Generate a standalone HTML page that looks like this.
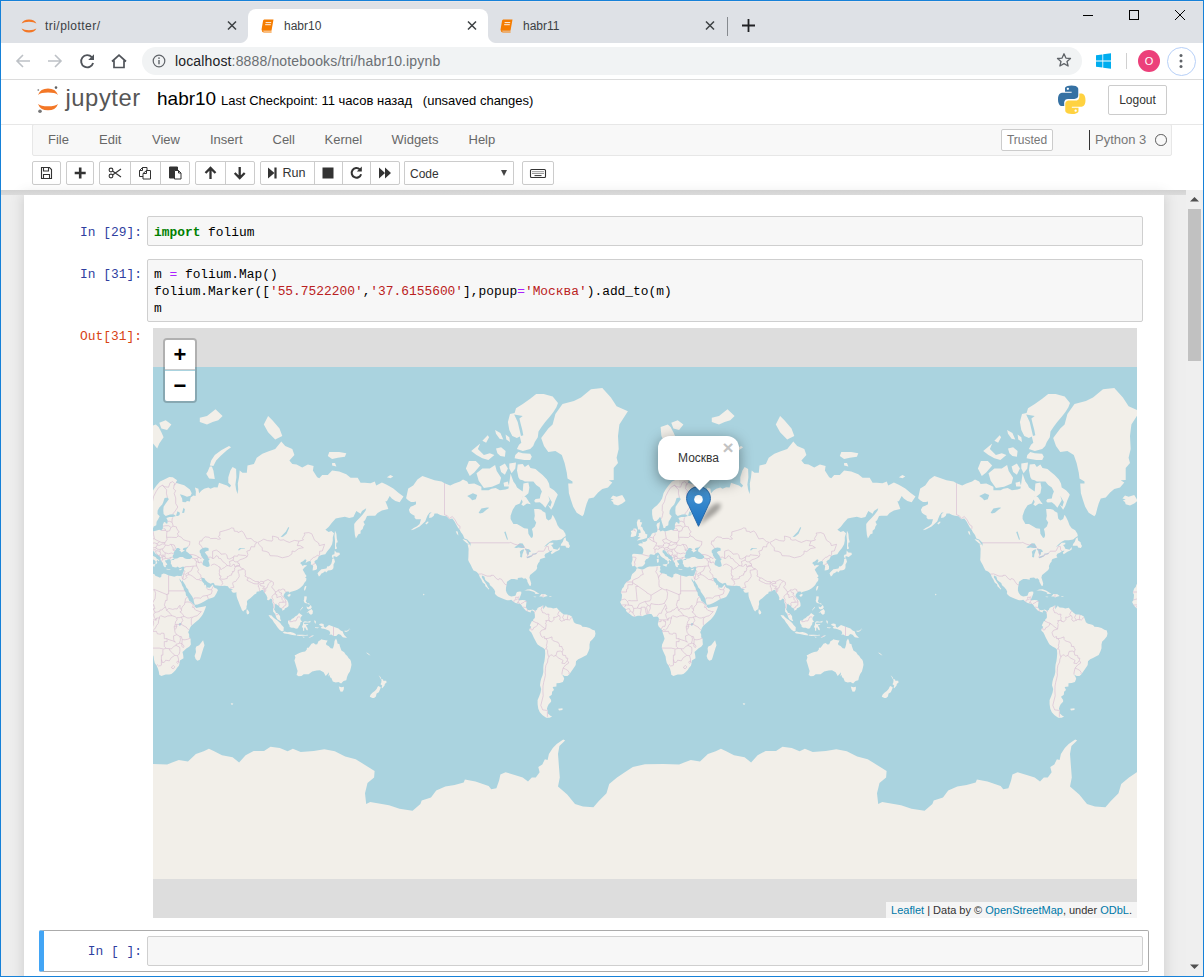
<!DOCTYPE html>
<html lang="ru"><head><meta charset="utf-8"><title>habr10</title>
<style>
*{box-sizing:border-box;margin:0;padding:0}
html,body{width:1204px;height:977px;overflow:hidden;background:#fff}
body{position:relative;font-family:"Liberation Sans",Arial,sans-serif;color:#000}
.abs{position:absolute}
/* window frame */
#win{position:absolute;left:0;top:0;width:1204px;height:977px;border:1px solid #1681d8;pointer-events:none;z-index:50}
/* chrome */
#tabbar{position:absolute;left:0;top:0;width:1204px;height:43px;background:#dee1e6}
.tab{position:absolute;top:9px;height:34px;font-size:12px;color:#3c4043;line-height:34px;white-space:nowrap}
.tab .ttl{position:absolute;left:36px;top:0}
.tab .x{position:absolute;right:10px;top:0;width:12px;height:33px}
#tab2{left:248px;width:240px;background:#fff;border-radius:8px 8px 0 0}
#tab2:before,#tab2:after{content:"";position:absolute;bottom:0;width:8px;height:8px;background:radial-gradient(circle at 0 0,rgba(255,255,255,0) 7.5px,#fff 8.5px)}
#tab2:before{left:-8px}
#tab2:after{right:-8px;background:radial-gradient(circle at 100% 0,rgba(255,255,255,0) 7.5px,#fff 8.5px)}
#tab1{left:9px;width:239px}
#tab1 .ttl{letter-spacing:.45px}
#topline{position:absolute;left:1px;top:1px;width:1202px;height:1px;background:#e9e7ea}
#tab3{left:487px;width:239px}
#toolbar{position:absolute;left:0;top:43px;width:1204px;height:37px;background:#fff;border-bottom:1px solid #dcdcdc}
#omni{position:absolute;left:142px;top:3.800px;width:940px;height:28px;border-radius:14px;background:#f1f3f4}
#url{position:absolute;left:33px;top:0;line-height:28px;font-size:14px;color:#202124;white-space:nowrap;letter-spacing:0.150px}
#url span{color:#6b6f73}
/* jupyter header */
#jhead{position:absolute;left:0;top:80px;width:1204px;height:110px;background:#fff}
#nbname{position:absolute;left:157px;top:7px;font-size:19px;line-height:24px;color:#000;white-space:nowrap}
#chk{position:absolute;left:221px;top:10px;font-size:13px;line-height:22px;color:#000;white-space:nowrap}
#logout{position:absolute;left:1108px;top:5px;width:59px;height:30px;border:1px solid #ccc;border-radius:2px;font-size:12px;line-height:28px;text-align:center;color:#333;background:#fff}
#menubar{position:absolute;left:32px;top:44px;width:1140px;height:32px;background:#f8f8f8;border:1px solid #e7e7e7;border-radius:2px}
#menubar .mi{position:absolute;top:0;line-height:30px;font-size:13px;color:#676767;white-space:nowrap}
#trusted{position:absolute;left:968px;top:4px;width:52px;height:22px;border:1px solid #ccc;border-radius:2px;font-size:12px;line-height:20px;text-align:center;color:#777;background:#fff}
#kname{position:absolute;left:1056px;top:5px;height:20px;border-left:1px solid #333;padding-left:5px;font-size:13px;line-height:20px;color:#777;white-space:nowrap}
#kind{position:absolute;left:1122px;top:9px;width:11.500px;height:11.500px;border:1.800px solid #5a5a5a;border-radius:50%}
.tb{position:absolute;top:81px;height:24px;border:1px solid #ccc;border-radius:2px;background:#fff}
.tb i{position:absolute;top:0;width:1px;height:22px;background:#ccc}
.tb svg{position:absolute;top:0}
#celltype{position:absolute;left:404px;top:81px;width:110px;height:24px;border:1px solid #ccc;border-radius:1px;background:#fff;font-size:12px;line-height:24px;color:#333;padding-left:5px}
#celltype:after{content:"";position:absolute;right:6px;top:8px;border:3.500px solid transparent;border-top:6px solid #444;}
#hshadow{position:absolute;left:0;top:190px;width:1186px;height:5px;background:linear-gradient(#d2d2d2,#dadada)}
/* notebook area */
#site{position:absolute;left:0;top:190px;width:1204px;height:787px;background:#eee}
#nbc{position:absolute;left:24px;top:5px;width:1140px;height:790px;background:#fff;box-shadow:0 0 12px 1px rgba(87,87,87,.2)}
.prompt{position:absolute;font-family:"Liberation Mono","DejaVu Sans Mono",monospace;font-size:12.9px;line-height:17px;white-space:pre;text-align:right;width:110px}
.pin{color:#303f9f}.pout{color:#d84315}
.inp{position:absolute;left:147px;width:996px;background:#f7f7f7;border:1px solid #cfcfcf;border-radius:2px}
.code{position:absolute;left:6px;top:6.500px;font-family:"Liberation Mono","DejaVu Sans Mono",monospace;font-size:12.880px;line-height:17px;white-space:pre;color:#000}
.kw{color:#008000;font-weight:bold}.op{color:#aa22ff}.st{color:#ba2121}
#scroll{position:absolute;left:1186px;top:190px;width:17px;height:787px;background:#efefef}
#thumb{position:absolute;left:2px;top:19px;width:13px;height:152px;background:#c1c1c1}
/* map */
#map{position:absolute;left:153px;top:328px;width:984px;height:590px;background:#ddd;overflow:hidden}
#zoomc{position:absolute;left:10px;top:10px;width:34px;height:65px;border:2px solid rgba(0,0,0,.2);border-radius:4px;background-clip:padding-box}
#zoomc div{position:absolute;left:0;width:30px;height:30px;background:#fff;text-align:center;font:bold 22px/30px "Liberation Sans",sans-serif;color:#000}
#attr{position:absolute;right:0;bottom:0;height:16px;padding:0 5px;background:rgba(255,255,255,.7);font-size:11px;line-height:16px;color:#333;white-space:nowrap}
#attr a{color:#0078a8;text-decoration:none}
#popup{position:absolute;left:505px;top:108px;width:81px;height:44px;border-radius:12px;background:#fff;box-shadow:0 3px 14px rgba(0,0,0,.4);font-size:12px;line-height:44px;text-align:center;color:#333}
#ptipc{position:absolute;left:526px;top:152px;width:40px;height:20px;overflow:hidden}
#ptip{width:17px;height:17px;margin:-10px auto 0;background:#fff;transform:rotate(45deg);box-shadow:0 3px 14px rgba(0,0,0,.4)}
#pclose{position:absolute;left:568px;top:113px;width:14px;text-align:center;font:bold 19px/14px "Liberation Sans",sans-serif;color:#c3c3c3}

#hline{position:absolute;left:0;top:44px;width:1204px;height:1px;background:#e7e7e7}

</style></head>
<body>
<div id="tabbar">
  <div id="topline"></div>
  <div class="tab" id="tab1"><svg class="abs" style="left:12px;top:9px" width="16" height="16" viewBox="0 0 16 16"><path d="M.6 5.400A7.800 5.800 0 0 1 15.400 5.400A8.500 3.400 0 0 0 .6 5.400Z M.6 10.600A7.800 5.800 0 0 0 15.400 10.600A8.500 3.400 0 0 1 .6 10.600Z" fill="#f37726"/></svg><span class="ttl">tri/plotter/</span><svg class="x" viewBox="0 0 12 33"><path d="M2 12.5l8 8M10 12.5l-8 8" stroke="#3c4043" stroke-width="1.5" fill="none"/></svg></div>
  <div class="tab" id="tab2"><svg class="abs" style="left:12px;top:9px" width="16" height="16" viewBox="0 0 16 16"><path d="M4.2 1.5h9.3l-2 11.2H2.6Q1.3 12.6 1.6 11.2L3 3Q3.3 1.5 4.2 1.5Z" fill="#f57c00"/><path d="M2.4 12.2q0 1.800 1.600 1.800h7.600" stroke="#f57c00" stroke-width="1.200" fill="none"/><path d="M5.600 4.600h5.600M5.200 6.700h5.600" stroke="#fff" stroke-width=".9" fill="none"/></svg><span class="ttl">habr10</span><svg class="x" viewBox="0 0 12 33"><path d="M2 12.5l8 8M10 12.5l-8 8" stroke="#3c4043" stroke-width="1.5" fill="none"/></svg></div>
  <div class="tab" id="tab3"><svg class="abs" style="left:12px;top:9px" width="16" height="16" viewBox="0 0 16 16"><path d="M4.2 1.5h9.3l-2 11.2H2.6Q1.3 12.6 1.6 11.2L3 3Q3.3 1.5 4.2 1.5Z" fill="#f57c00"/><path d="M2.4 12.2q0 1.800 1.600 1.800h7.600" stroke="#f57c00" stroke-width="1.200" fill="none"/><path d="M5.600 4.600h5.600M5.200 6.700h5.600" stroke="#fff" stroke-width=".9" fill="none"/></svg><span class="ttl">habr11</span><svg class="x" viewBox="0 0 12 33"><path d="M2 12.5l8 8M10 12.5l-8 8" stroke="#3c4043" stroke-width="1.5" fill="none"/></svg></div>
  <div class="abs" style="left:727px;top:17px;width:1px;height:19px;background:#868a8f"></div>
  <svg class="abs" style="left:741px;top:18px" width="15" height="15" viewBox="0 0 15 15"><path d="M7.5 1v13M1 7.5h13" stroke="#202124" stroke-width="1.8" fill="none"/></svg>
  <svg class="abs" style="left:1080px;top:8px" width="120" height="16" viewBox="0 0 120 16"><path d="M3 7.5h10" stroke="#000" stroke-width="1" fill="none"/><rect x="49.5" y="2.5" width="9" height="9" fill="none" stroke="#000" stroke-width="1"/><path d="M95 2l10 10M105 2l-10 10" stroke="#000" stroke-width="1" fill="none"/></svg>
</div>
<div id="toolbar">
  <svg class="abs" style="left:14px;top:9px" width="120" height="18" viewBox="0 0 120 18"><path d="M16 9H3M9 3L3 9l6 6" stroke="#bdc1c6" stroke-width="1.6" fill="none"/><path d="M34 9h13M41 3l6 6-6 6" stroke="#bdc1c6" stroke-width="1.6" fill="none"/><path d="M77.800 5.200A6.100 6.100 0 1 0 79.100 11" stroke="#50545a" stroke-width="1.900" fill="none"/><path d="M80 2.200v5.800h-5.800z" fill="#50545a"/><path d="M98 9.5l7-6.3 7 6.3M100 8.5v7h10v-7" stroke="#50545a" stroke-width="1.7" fill="none"/></svg>
  <div id="omni"><svg class="abs" style="left:10px;top:7px" width="14" height="14" viewBox="0 0 14 14"><circle cx="7" cy="7" r="5.8" fill="none" stroke="#5f6368" stroke-width="1.2"/><path d="M7 6v4.2" stroke="#5f6368" stroke-width="1.4"/><circle cx="7" cy="4.1" r=".85" fill="#5f6368"/></svg><div id="url">localhost<span>:8888/notebooks/tri/habr10.ipynb</span></div>
  <svg class="abs" style="left:914.400px;top:5.500px" width="16" height="16" viewBox="0 0 16 16"><path d="M8 1.8l1.9 4.3 4.6.4-3.5 3 1.1 4.5L8 11.6 3.9 14l1.1-4.5-3.5-3 4.6-.4z" fill="none" stroke="#5f6368" stroke-width="1.3" stroke-linejoin="round"/></svg></div>
  <svg class="abs" style="left:1096.400px;top:10px" width="16" height="16" viewBox="0 0 16 16"><path d="M0 2.3l6.4-.9v6.2H0zM7.2 1.3L15 .2v7.4H7.2zM0 8.4h6.4v6.2L0 13.7zM7.2 8.4H15v7.4l-7.8-1.1z" fill="#00adef"/></svg>
  <div class="abs" style="left:1126px;top:10px;width:1px;height:16px;background:#d0d0d0"></div>
  <div class="abs" style="left:1138px;top:7px;width:22px;height:22px;border-radius:50%;background:#ec407a;color:#fff;font-size:11px;line-height:22px;text-align:center">O</div>
  <div class="abs" style="left:1166.500px;top:3.500px;width:29.500px;height:29.500px;border-radius:50%;border:1.700px solid #b7d0f8"></div>
  <svg class="abs" style="left:1178.300px;top:10.300px" width="6" height="16" viewBox="0 0 6 16"><circle cx="3" cy="2.5" r="1.5" fill="#5f6368"/><circle cx="3" cy="8" r="1.5" fill="#5f6368"/><circle cx="3" cy="13.5" r="1.5" fill="#5f6368"/></svg>
</div>
<div id="jhead">
  <svg class="abs" style="left:34px;top:5px" width="112" height="32" viewBox="0 0 112 32"><path d="M4 9.900A10.500 9.300 0 0 1 24 9.900A11 4 0 0 0 4 9.900Z M4 18.900A10.500 9.300 0 0 0 24 18.900A11 4 0 0 1 4 18.900Z" fill="#f37726"/><circle cx="6" cy="26.300" r="1.800" fill="#767677"/><circle cx="4.300" cy="5" r=".9" fill="#989798"/><circle cx="22" cy="2.600" r="1.300" fill="#616262"/><text x="31.500" y="20.800" font-family="Liberation Sans, sans-serif" font-size="23.800" fill="#565656" letter-spacing=".55">jupyter</text></svg>
  <div id="nbname">habr10</div>
  <div id="chk">Last Checkpoint: 11 часов назад &nbsp;&nbsp;(unsaved changes)</div>
  <svg class="abs" style="left:1056px;top:4.300px" width="31.500" height="31.500" viewBox="0 0 30 30"><path d="M14.8 1.5c-6.6 0-6.2 2.9-6.2 2.9v3h6.3v.9H6.1S1.9 7.8 1.9 14.5s3.7 6.5 3.7 6.5h2.2v-3.1s-.1-3.7 3.6-3.7h6.300000000000001s3.5.1 3.5-3.4V5.100000000000001S21.7 1.5 14.8 1.5zm-3.5 2c.6 0 1.1.5 1.1 1.1s-.5 1.1-1.1 1.1-1.1-.5-1.1-1.1.5-1.1 1.1-1.1z" fill="#3571a3"/><path d="M15.2 28.5c6.6 0 6.2-2.9 6.2-2.9v-3h-6.3v-.9h8.8s4.2.5 4.2-6.200000000000001-3.7-6.5-3.7-6.5h-2.2v3.1s.1 3.7-3.6 3.7h-6.300000000000001s-3.5-.1-3.5 3.4v5.7s-.5 3.6 6.4 3.6zm3.5-2c-.6 0-1.1-.5-1.1-1.1s.5-1.1 1.1-1.1 1.1.5 1.1 1.1-.5 1.1-1.1 1.1z" fill="#ffd240"/></svg>
  <div id="logout">Logout</div>
  <div id="hline"></div>
  <div id="menubar">
    <span class="mi" style="left:15px">File</span><span class="mi" style="left:66px">Edit</span><span class="mi" style="left:119px">View</span><span class="mi" style="left:177px">Insert</span><span class="mi" style="left:239.500px">Cell</span><span class="mi" style="left:291.500px">Kernel</span><span class="mi" style="left:358.500px">Widgets</span><span class="mi" style="left:435.500px">Help</span>
    <div id="trusted">Trusted</div><div id="kname">Python 3</div><div id="kind"></div>
  </div>
  <div class="tb" style="left:32px;width:29px"></div>
  <div class="tb" style="left:66px;width:28px"></div>
  <div class="tb" style="left:99px;width:91px"><i style="left:30px"></i><i style="left:60px"></i></div>
  <div class="tb" style="left:195px;width:60px"><i style="left:29px"></i></div>
  <div class="tb" style="left:260px;width:140px"><i style="left:53px"></i><i style="left:81px"></i><i style="left:109px"></i><span class="abs" style="left:21.500px;top:0;font-size:12.600px;line-height:22px;color:#333">Run</span></div>
  <div id="celltype">Code</div>
  <div class="tb" style="left:522px;width:32px"></div>
  <svg class="abs" style="left:32px;top:81px" width="524" height="24" viewBox="0 0 524 24" fill="none" stroke="#333">
    <!-- save -->
    <path d="M9.5 6.5h8l2 2v9h-10z M11.5 6.5v3.5h5v-3.5 M11.5 17.500v-4h6v4" stroke-width="1.1"/>
    <!-- plus -->
    <path d="M48.200 6.500v11M42.700 12h11" stroke-width="2.600"/>
    <!-- scissors -->
    <circle cx="79" cy="9" r="1.900" stroke-width="1.100"/><circle cx="79" cy="15" r="1.900" stroke-width="1.100"/><path d="M80.500 10l8.500 6M80.500 14l8.500-6" stroke-width="1.100"/>
    <!-- copy -->
    <path d="M110.500 6.500h4.500v3.500 M110.500 6.500l-3 3v6h3.500 M107.500 9.500h3v-3" stroke-width="1"/><path d="M114.500 9.500h4v8.500h-7.500v-5.500l3.500-3zM111 12.500h3.500v-3" stroke-width="1"/>
    <!-- paste -->
    <path d="M137.500 6h8v3h-3.500v8h-4.500z" fill="#333" stroke-width="1"/><path d="M142.500 9.500h4l2.500 2.500v6h-6.500z" fill="#fff" stroke-width="1"/><path d="M146.500 9.500v2.500h2.500" stroke-width="1"/>
    <!-- up / down -->
    <path d="M178.500 18v-10.500M173.500 12l5-5 5 5" stroke-width="2.300"/>
    <path d="M207.700 6v10.500M202.700 12l5 5 5-5" stroke-width="2.300"/>
    <!-- step forward -->
    <path d="M236 6.500v11l6.500-5.500z" fill="#333" stroke="none"/><path d="M243.500 6.500v11" stroke-width="2.200"/>
    <!-- stop -->
    <rect x="290.500" y="6.500" width="11" height="11" fill="#333" stroke="none"/>
    <!-- repeat -->
    <path d="M327.800 8.400a4.800 4.800 0 1 0 1.300 4.800" stroke-width="2"/><path d="M329.800 5.500v5h-5z" fill="#333" stroke="none"/>
    <!-- forward -->
    <path d="M347 6.500v11l6-5.500zM353 6.500v11l6-5.500z" fill="#333" stroke="none"/>
    <!-- keyboard -->
    <rect x="498.500" y="8.500" width="15" height="8" rx="1" stroke-width="1.100"/><path d="M500.500 10.700h11M500.500 12.500h11" stroke-width="1" stroke-dasharray="1 1"/><path d="M502.500 14.600h7" stroke-width="1"/>
  </svg>
</div>
<div id="site">
  <div id="nbc"></div>
</div>
<div id="hshadow"></div>
<div class="prompt pin" style="left:32px;top:223.500px">In [29]:</div>
<div class="inp" style="top:216px;height:30px"><div class="code"><span class="kw">import</span> folium</div></div>
<div class="prompt pin" style="left:32px;top:265.500px">In [31]:</div>
<div class="inp" style="top:258.500px;height:63.500px"><div class="code">m <span class="op">=</span> folium.Map()
folium.Marker([<span class="st">'55.7522200'</span>,<span class="st">'37.6155600'</span>],popup<span class="op">=</span><span class="st">'Москва'</span>).add_to(m)
m</div></div>
<div class="prompt pout" style="left:32px;top:328px">Out[31]:</div>
<div id="map">
<svg class="abs" style="left:0;top:39px" width="984" height="512" viewBox="0 0 984 512">
<rect width="984" height="512" fill="#aad3df"/>
<g transform="translate(-276 0)"><path fill="#f2efe9" d="M17.1 131.2L19.2 121.4L24.2 118.6L28.4 112.5L33.4 109.0L39.8 111.2L45.5 113.3L52.6 114.6L55.5 116.2L61.2 118.6L65.4 116.6L71.1 114.6L74.0 112.5L78.2 114.6L79.6 117.0L85.3 116.6L92.4 119.8L92.4 123.3L99.6 123.3L102.4 121.8L106.7 121.0L110.9 123.3L116.6 122.5L119.5 121.4L120.2 116.6L121.6 106.8L124.4 114.6L126.6 117.4L128.0 120.6L130.8 122.5L133.7 124.4L134.4 116.6L139.4 115.4L140.4 120.6L139.4 126.2L136.5 128.8L133.7 129.8L132.3 133.2L130.8 136.5L126.6 138.2L123.7 142.8L121.6 148.7L121.6 152.0L124.4 156.9L128.0 156.9L132.3 159.4L135.1 161.2L139.0 161.7L139.4 166.8L140.8 169.1L142.2 171.0L143.6 170.3L144.1 168.0L143.6 164.4L142.9 161.9L145.8 159.4L147.2 155.5L145.1 152.3L145.8 148.7L145.1 141.9L149.3 141.9L152.2 142.8L153.6 144.3L156.4 145.8L157.2 151.5L159.3 153.4L162.1 152.0L163.6 147.8L165.0 150.1L167.1 154.2L168.5 158.2L170.7 161.2L174.2 163.2L176.4 166.8L176.8 169.1L174.9 170.3L172.1 172.5L167.8 173.2L163.6 173.2L160.7 174.7L157.9 176.9L155.0 180.1L157.9 178.4L160.7 175.8L164.3 175.8L164.3 177.3L162.1 178.0L163.6 180.1L164.3 181.7L166.4 182.2L168.5 182.8L170.7 180.1L170.7 182.4L169.2 183.6L166.4 184.8L164.3 186.2L162.6 187.2L161.8 185.6L163.6 183.8L162.1 183.8L160.7 184.2L159.3 185.4L156.4 186.8L155.4 188.7L156.4 190.4L154.6 191.0L151.5 192.0L150.8 192.9L150.5 194.8L149.3 196.0L148.6 197.5L147.9 199.3L148.2 201.1L147.2 203.1L145.1 204.7L143.6 205.9L141.1 207.9L140.4 210.4L141.5 214.0L142.2 216.4L141.8 218.8L140.8 218.9L139.7 217.2L138.4 214.8L138.2 212.9L136.5 211.2L134.7 211.7L133.0 210.6L130.8 210.7L128.7 210.9L129.0 212.5L127.3 212.5L125.2 211.9L122.3 211.9L120.5 213.0L118.0 214.8L117.6 217.7L117.0 220.8L116.9 223.5L117.8 225.9L119.5 228.2L120.9 229.1L122.3 229.5L125.2 229.1L126.6 228.5L127.3 226.2L128.0 225.1L130.8 224.5L132.3 224.8L132.3 226.5L131.3 229.2L130.6 230.7L129.7 232.9L130.8 233.2L133.7 233.1L136.1 233.2L137.5 234.4L137.2 237.4L137.0 239.5L137.2 241.0L138.7 242.7L140.1 243.3L142.2 242.9L143.6 242.4L145.8 243.6L146.5 244.6L145.8 245.6L144.6 244.3L142.9 243.3L141.8 244.2L141.8 245.4L140.1 244.9L138.2 244.3L137.2 243.9L135.1 241.7L134.0 240.5L132.3 238.1L131.3 237.1L128.7 236.6L126.6 235.9L124.4 234.7L122.3 232.8L120.2 233.2L118.0 233.2L115.2 232.2L111.6 230.7L108.8 229.5L106.7 227.7L105.8 226.2L106.2 224.7L105.2 222.4L103.1 220.0L101.0 218.2L100.3 216.1L98.1 214.5L96.3 212.9L95.3 209.6L92.9 208.4L92.9 210.4L94.6 212.9L96.0 215.3L97.7 217.7L98.8 220.0L100.3 221.9L99.6 222.5L98.1 220.8L96.4 219.3L96.0 217.2L93.9 215.8L93.2 214.5L92.4 212.5L91.0 210.4L89.6 207.1L87.8 204.9L86.0 204.0L84.5 203.5L82.8 200.2L81.8 198.0L79.9 194.8L79.2 193.1L79.4 190.1L79.5 186.2L79.6 181.7L78.6 177.3L81.1 177.6L81.8 179.5L81.5 175.8L80.4 174.7L78.2 172.5L75.4 171.4L74.0 168.0L71.8 165.1L70.7 162.7L69.0 160.7L67.6 158.2L65.4 154.2L63.3 151.5L60.4 152.3L57.6 149.3L54.0 148.7L51.2 148.1L48.4 146.4L45.5 146.4L44.8 148.7L42.7 150.4L40.1 150.9L40.5 147.3L42.7 145.2L40.5 145.8L38.4 148.7L37.3 151.5L36.3 154.2L33.4 156.9L30.6 159.4L27.7 160.9L24.9 162.4L21.8 163.2L24.2 161.2L27.0 159.7L27.7 159.4L30.6 156.9L32.0 152.3L29.9 152.3L27.0 152.3L25.6 150.7L25.6 148.7L22.8 147.3L20.9 145.8L19.9 142.8L21.6 139.7L24.2 138.8L27.0 137.2L27.0 134.6L24.9 134.9L22.0 134.9L19.2 133.2ZM168.8 127.7L166.4 133.2L164.3 139.1L162.1 142.8L158.6 137.5L161.4 139.7L162.8 134.9L159.3 128.8L160.7 133.2L156.4 140.7L153.6 137.5L150.8 135.2L146.5 135.6L145.1 133.9L146.5 131.9L150.8 131.5L151.5 128.0L152.9 124.4L150.8 120.6L147.2 117.9L144.4 114.6L140.8 114.6L135.8 114.6L133.7 113.3L130.8 112.5L129.4 110.3L128.0 103.5L128.7 97.6L133.7 97.1L135.8 100.1L139.4 97.6L141.5 101.1L146.5 102.1L149.3 104.4L153.6 108.1L157.9 112.5L160.0 116.6L160.7 120.6L165.0 123.3L167.8 126.2ZM169.0 36.1L163.7 29.5L154.7 27.1L147.2 27.1L141.2 31.7L133.8 37.1L127.0 41.2L125.6 46.1L121.0 47.0L118.9 55.0L120.3 63.0L123.3 68.9L127.9 71.0L130.8 69.6L132.3 75.8L130.0 77.7L127.9 82.1L133.8 83.9L141.2 82.1L144.2 79.0L145.8 75.1L148.8 70.3L149.5 64.5L152.5 59.9L156.2 55.0L160.7 49.8L164.4 45.1L167.4 40.2ZM116.6 67.5L120.3 70.3L121.0 75.1L117.3 72.4ZM126.3 88.0L129.3 85.1L133.8 86.3L141.2 86.8L142.8 89.7L141.2 92.9L135.3 92.9L129.3 91.9L125.6 91.3ZM87.5 106.3L93.4 101.6L100.8 101.6L106.1 98.1L107.7 104.0L112.1 110.8L110.6 116.6L103.1 119.8L94.9 121.0L89.7 113.7ZM76.9 101.6L79.9 94.0L86.8 94.0L91.2 98.6L85.2 105.4L80.8 109.0ZM82.2 83.9L91.2 76.4L88.9 82.1L94.9 88.0L100.8 86.3L105.4 88.0L99.4 92.9L93.4 91.3L87.5 88.0ZM107.0 81.5L112.1 80.3L116.6 83.9L115.9 89.7L111.4 89.1L108.4 86.3ZM110.6 99.6L115.9 96.6L118.9 101.6L115.9 107.7L112.1 104.9ZM120.3 96.6L127.0 95.6L126.3 101.6L122.6 106.3L120.3 101.6ZM120.2 119.4L115.2 119.4L114.5 115.8L118.8 114.6ZM132.3 131.5L135.1 129.1L137.2 130.5L140.1 134.9L141.9 137.2L138.0 136.5L134.4 139.1L132.3 137.5L133.7 134.9ZM93.4 73.8L98.7 68.2L100.1 70.3L97.1 75.8ZM106.1 63.0L111.4 66.0L114.3 72.4L110.6 71.7L107.0 66.8ZM171.7 178.8L176.4 178.8L177.1 180.5L179.9 180.9L181.0 179.0L179.9 176.9L179.6 175.2L177.1 173.6L176.6 170.3L174.9 171.4L173.8 174.7L172.1 176.9ZM193.4 149.3L187.7 145.8L184.2 139.7L182.0 133.2L179.9 126.2L179.2 116.6L183.5 116.6L183.5 114.6L178.5 111.6L177.8 105.8L175.6 96.1L172.8 88.0L166.4 83.9L159.3 85.1L155.0 79.0L152.2 71.0L159.3 61.5L163.6 57.5L166.4 47.0L173.5 37.1L184.9 33.9L192.0 30.6L202.0 22.3L213.3 21.0L221.9 30.6L227.6 39.2L238.9 44.2L230.4 57.5L229.0 68.9L229.7 82.1L227.6 90.8L229.0 96.1L224.7 101.1L224.7 108.1L224.7 112.9L219.7 113.3L223.3 115.4L219.0 120.6L213.3 122.1L209.1 125.5L204.8 130.5L199.8 131.5L197.7 136.5L196.3 141.3L194.8 147.3ZM221.4 131.5L224.0 128.4L227.6 129.8L233.2 128.0L235.4 131.5L236.5 133.9L233.2 136.5L229.0 138.5L224.7 137.2L224.0 134.9L221.9 133.6L224.7 132.2ZM135.3 224.1L138.0 222.4L141.5 222.2L145.1 223.5L148.6 225.7L150.5 226.7L145.8 227.1L146.5 226.0L144.4 224.7L140.1 223.6L137.2 223.6ZM150.2 229.4L152.5 227.1L156.4 227.3L158.7 229.1L155.7 229.7L154.0 230.4L152.9 229.5ZM144.6 229.4L147.5 229.7L146.5 230.3L144.8 230.0ZM160.4 229.2L162.6 229.4L162.4 230.0L160.4 230.0ZM146.1 243.9L147.9 242.7L148.6 241.0L150.0 240.3L152.2 239.5L154.3 238.2L154.3 240.3L153.9 242.4L155.0 241.0L156.4 239.5L156.4 238.5L158.6 240.5L162.1 240.8L164.3 241.4L167.8 240.7L169.2 242.4L170.7 243.9L172.8 246.0L174.9 247.5L177.8 247.6L180.6 248.2L182.8 249.6L184.2 253.2L184.9 255.3L187.0 256.7L188.4 257.0L192.0 258.1L193.4 259.8L197.0 260.1L200.5 261.0L203.4 262.8L205.8 263.5L206.5 266.7L205.8 269.6L203.4 272.5L201.2 274.6L200.5 277.6L200.5 281.3L199.5 284.3L197.7 288.1L194.8 289.6L192.0 290.9L189.2 292.3L187.0 294.3L186.7 298.0L184.9 300.8L182.8 303.7L180.6 307.0L178.5 308.9L175.6 308.9L173.1 307.5L174.6 310.1L175.2 311.8L173.9 314.9L170.7 316.1L167.5 316.3L167.4 319.5L163.6 320.0L165.0 322.9L163.1 324.8L162.8 327.8L160.0 329.8L162.1 333.0L162.1 334.7L159.7 337.3L158.6 339.5L157.9 341.7L158.7 343.8L158.9 346.4L161.4 348.8L163.1 349.6L160.7 350.8L157.2 350.8L153.6 348.3L150.8 345.2L149.3 341.7L148.6 337.3L148.6 333.0L150.0 329.8L151.5 325.8L152.2 321.9L151.0 318.2L151.5 314.5L152.2 311.8L153.6 308.3L154.3 304.9L154.3 300.8L154.6 297.5L155.4 294.3L155.9 290.4L156.2 286.6L155.9 282.6L154.3 281.0L151.5 279.5L148.6 277.6L147.5 275.8L146.2 273.2L144.6 270.3L143.4 267.4L142.2 265.3L140.4 263.8L140.4 262.1L141.8 260.8L142.2 259.6L140.8 259.1L141.2 257.4L142.1 255.7L142.5 254.6L143.9 253.9L144.4 252.3L145.8 251.0L145.9 248.9L145.8 246.7L145.2 245.7ZM169.2 341.7L173.5 341.3L173.5 342.9L170.0 343.6ZM247.6 201.4L248.5 201.2L251.7 202.3L253.9 202.5L256.0 201.4L258.1 200.2L260.3 199.6L263.1 199.6L266.7 199.3L269.9 198.8L271.6 199.3L271.1 200.4L271.2 201.9L271.6 203.1L270.5 204.2L271.6 205.7L273.8 206.6L274.9 206.4L277.8 207.4L278.3 208.8L280.9 209.8L283.0 210.7L284.4 209.6L284.4 207.4L286.6 206.4L288.7 206.9L291.6 208.4L294.4 209.1L297.2 209.8L300.1 208.8L301.9 209.1L302.4 211.2L302.9 213.7L304.4 216.1L305.1 218.5L306.5 220.8L306.9 222.8L308.6 225.4L309.0 228.5L310.8 230.0L312.2 233.7L314.3 235.2L316.4 237.4L317.6 238.1L317.6 239.5L319.3 241.1L321.4 240.5L324.3 240.0L327.1 239.4L329.0 239.0L328.5 241.1L327.1 244.6L325.7 247.5L324.3 249.6L321.8 252.4L319.3 254.6L316.4 257.1L314.3 258.8L312.9 261.0L312.2 263.1L311.2 265.3L312.2 267.4L312.2 270.3L313.6 271.7L313.6 274.6L313.9 277.6L312.2 279.8L309.3 281.6L307.2 283.5L305.5 285.0L306.2 288.1L306.5 291.2L302.9 293.5L302.6 295.9L301.9 298.8L300.1 300.8L298.7 302.9L296.5 305.3L294.4 307.0L292.3 307.5L288.7 307.5L284.4 308.9L282.3 307.8L281.9 304.9L280.9 301.6L279.5 298.5L277.8 295.9L277.0 292.7L276.6 289.6L275.2 286.6L273.8 283.5L272.8 280.5L273.1 277.6L274.5 274.6L275.6 271.7L274.9 269.3L273.8 266.0L273.4 264.5L273.1 263.1L271.6 261.4L269.5 259.3L268.8 257.0L269.5 254.6L269.9 252.4L269.8 250.9L268.5 249.6L266.0 249.7L264.5 249.9L263.5 248.5L262.4 247.0L260.3 246.9L258.1 247.2L256.0 248.0L253.2 249.2L251.0 248.7L248.9 248.7L245.3 249.7L243.2 248.9L240.4 246.7L238.2 245.3L237.1 243.9L236.8 242.1L234.7 240.5L233.2 238.8L232.1 236.9L231.1 234.9L232.5 232.9L232.8 230.0L233.0 227.7L231.8 225.4L233.2 221.6L234.7 220.0L235.4 217.7L237.5 215.0L239.6 213.7L241.8 212.1L242.2 209.6L243.2 207.1L245.3 205.2L246.8 203.7ZM326.1 273.2L327.5 278.3L326.4 281.3L325.0 285.8L323.6 290.4L322.8 292.7L320.4 293.7L318.6 292.0L317.6 288.9L319.0 285.0L318.6 281.3L319.3 279.4L322.1 278.3L324.3 275.4ZM243.2 199.3L242.5 196.2L243.5 192.9L243.5 190.1L242.9 187.7L244.6 186.8L248.2 187.0L251.0 187.2L253.4 187.4L254.3 184.8L254.4 182.2L252.9 179.7L249.6 178.2L249.3 177.1L251.7 176.3L253.7 176.5L253.4 174.3L254.6 175.0L256.3 174.7L258.1 173.4L258.4 171.6L260.3 170.7L261.7 169.1L262.8 166.8L264.5 165.8L266.0 165.8L267.8 165.1L268.4 163.7L268.2 160.7L267.5 158.2L268.1 156.6L270.9 155.0L270.6 158.2L270.2 160.7L269.9 162.4L271.6 164.4L273.8 163.4L275.9 164.4L278.8 163.7L282.3 162.7L284.2 163.4L285.9 161.4L285.9 157.4L286.9 155.3L288.1 155.0L289.0 156.6L290.4 156.6L290.7 153.4L289.4 150.9L292.3 150.1L295.8 150.1L299.0 149.0L296.5 147.3L293.0 147.5L288.7 149.0L286.6 147.0L286.3 143.4L286.6 139.7L288.7 136.5L291.8 132.2L290.8 130.5L287.6 130.9L286.3 134.9L285.2 137.5L282.3 140.4L280.6 143.7L280.5 147.0L282.7 149.3L281.3 152.0L279.6 154.7L279.3 158.2L276.6 159.4L276.2 160.9L274.5 160.9L274.1 158.9L272.8 155.0L271.9 151.5L271.1 149.8L269.5 152.0L267.4 153.9L265.2 153.9L263.8 151.5L263.1 147.3L263.1 142.8L265.2 140.4L268.1 138.2L270.9 134.9L273.1 131.5L274.5 126.2L276.6 122.5L279.5 118.6L283.0 114.6L287.3 112.5L292.3 109.9L295.8 110.3L300.1 113.3L298.7 115.8L302.9 117.0L307.2 118.2L312.9 122.5L314.7 126.2L313.6 128.8L310.0 129.8L305.8 128.0L302.9 127.3L305.1 131.5L305.5 134.9L308.6 135.2L310.0 133.9L312.9 134.6L313.6 130.5L316.4 128.4L318.6 129.1L318.9 124.4L317.9 120.6L321.4 121.8L322.1 126.2L324.3 123.7L327.1 121.8L331.4 120.6L333.5 121.8L337.1 120.2L340.6 120.6L342.0 115.8L347.0 117.4L349.9 118.6L352.7 120.6L354.1 118.6L351.3 115.8L351.3 110.3L353.4 103.5L355.6 100.1L359.1 102.1L359.4 110.3L358.4 117.4L359.1 122.5L360.5 127.0L361.2 122.5L360.8 116.6L362.0 110.3L362.7 103.5L365.5 105.8L369.8 105.8L370.5 98.6L376.9 97.1L379.7 90.8L385.4 86.8L391.1 84.5L398.2 82.1L404.3 74.5L408.2 79.0L415.3 82.1L417.4 88.0L412.4 93.5L415.3 97.1L419.6 97.6L425.2 100.6L430.9 97.6L436.6 99.1L435.9 103.5L440.2 110.3L442.3 111.2L445.2 108.1L450.8 108.1L455.1 103.5L462.2 104.4L469.3 107.2L473.6 110.8L480.7 110.8L483.6 115.8L487.8 115.8L493.5 116.2L497.8 114.6L499.2 118.6L504.9 115.4L509.2 117.4L512.0 119.0L516.3 121.4L522.0 126.2L526.5 129.5L522.7 135.2L518.4 133.9L514.8 131.5L512.7 129.1L509.9 134.2L508.4 134.2L510.6 139.7L511.3 141.9L504.9 143.4L500.6 146.1L498.2 148.7L492.1 148.7L490.0 149.0L488.2 152.9L486.4 154.7L487.8 157.6L486.4 159.4L485.7 161.9L483.6 163.7L483.6 166.5L481.4 167.3L478.9 171.4L477.9 168.0L477.3 161.9L477.2 156.9L479.3 154.2L482.8 150.7L485.7 147.5L488.5 143.7L489.2 141.3L485.0 144.0L483.6 146.7L479.3 144.0L476.4 150.1L472.2 150.9L467.9 149.8L462.2 150.7L458.7 151.5L455.1 155.5L451.6 159.9L448.4 162.7L451.6 164.9L454.4 163.9L457.0 166.3L455.8 170.3L455.8 173.6L455.1 177.3L453.0 181.1L450.1 184.6L448.3 187.2L444.4 188.1L442.3 188.9L440.9 191.0L440.5 192.3L438.0 193.8L437.3 195.1L438.8 197.0L440.0 199.3L440.0 201.8L439.2 202.8L437.3 203.3L435.6 203.5L435.9 201.1L436.2 199.3L435.5 197.9L433.8 197.5L434.1 194.8L432.8 194.0L430.9 194.6L428.5 195.9L429.5 193.1L428.1 192.2L426.0 194.2L423.8 195.3L423.4 196.6L425.2 197.9L425.2 198.9L427.7 197.9L430.2 198.6L428.1 200.0L427.0 201.1L425.7 202.8L427.1 204.9L428.1 207.1L429.4 208.8L429.2 209.8L428.1 210.4L429.5 211.4L429.1 213.7L427.4 215.8L426.2 218.0L424.5 219.7L422.4 221.6L420.3 222.7L418.4 223.5L416.0 224.2L413.2 225.0L412.9 226.4L412.2 224.7L410.3 224.4L408.2 225.4L406.8 227.7L406.5 229.2L408.2 231.5L410.3 233.2L411.4 235.9L411.6 238.8L411.0 239.7L408.9 241.0L407.9 241.3L407.6 242.6L405.3 243.7L405.2 241.7L403.9 241.0L402.5 240.3L401.8 238.8L399.6 237.8L399.4 236.8L398.2 236.9L397.9 239.5L397.1 242.4L398.2 243.9L398.9 245.7L400.4 246.3L401.8 247.5L403.1 249.2L403.2 251.7L404.2 254.0L403.1 254.0L400.4 252.2L399.2 250.3L398.6 248.2L397.8 246.6L396.1 244.6L396.1 242.0L396.4 239.5L396.2 237.4L395.1 234.7L395.0 232.2L393.7 231.6L391.8 233.2L390.1 232.9L390.4 230.7L389.3 228.0L388.0 226.2L386.8 224.7L386.4 223.1L384.7 223.1L382.6 224.2L381.2 224.4L379.7 224.8L379.3 226.5L377.3 227.4L375.5 229.2L373.0 231.5L370.8 233.1L369.9 234.4L370.2 236.9L369.5 239.5L369.5 241.3L368.4 242.7L367.2 243.3L366.2 244.4L364.8 243.1L364.1 241.0L363.1 238.8L362.2 236.6L361.5 234.4L360.5 232.2L359.8 230.0L359.5 228.2L359.4 226.2L359.3 224.7L358.8 225.4L357.0 225.7L355.6 225.4L354.1 223.5L356.0 222.5L353.8 222.1L352.0 221.0L350.9 219.3L347.7 218.8L344.2 218.9L340.6 218.6L337.8 218.2L337.1 216.4L336.1 215.8L333.5 216.7L330.7 215.3L328.5 213.2L327.4 211.2L325.4 210.7L324.3 211.2L324.6 212.9L325.4 214.8L327.1 216.6L327.5 218.5L328.5 217.5L329.4 219.3L329.0 220.4L330.7 220.5L332.8 220.7L334.6 218.8L335.9 217.4L336.4 219.7L337.8 221.1L339.5 221.4L341.0 223.1L339.5 226.2L338.2 228.5L337.1 230.0L334.6 231.0L332.8 231.5L330.4 232.6L327.1 234.4L324.3 235.9L320.7 237.4L317.9 237.8L317.2 235.9L316.7 233.7L316.4 231.8L315.0 229.2L313.6 227.3L311.8 224.7L311.2 222.4L309.3 220.4L308.3 218.0L306.5 215.3L305.5 213.7L305.8 212.1L304.8 214.8L302.4 211.2L301.9 209.1L304.4 209.1L305.4 207.9L305.8 206.2L306.9 203.7L307.1 201.4L307.5 199.8L305.1 199.8L302.9 200.9L300.1 199.6L299.4 200.5L297.2 200.2L295.1 199.6L294.8 197.9L293.7 196.6L294.1 194.8L293.3 193.8L295.1 193.1L297.2 192.9L297.2 191.8L300.1 191.6L302.9 190.1L305.8 190.1L307.9 191.4L310.0 192.0L312.9 192.0L315.2 190.8L315.0 189.1L312.9 187.2L310.8 185.4L309.0 184.2L309.3 182.2L311.5 179.7L309.3 180.5L306.5 181.1L305.8 182.8L307.9 183.6L306.5 184.2L304.4 185.4L303.6 184.2L302.2 183.4L303.6 182.2L301.5 181.1L299.8 181.1L298.2 183.2L296.8 185.2L296.7 187.2L295.7 188.7L295.8 190.4L297.2 191.6L295.8 192.0L294.4 192.7L293.3 193.3L293.0 192.3L290.8 192.2L289.8 193.3L288.4 192.9L288.3 194.8L289.1 195.7L290.1 197.1L290.1 198.0L288.7 198.2L289.0 200.0L287.9 200.2L286.9 199.6L286.2 197.9L285.9 196.0L284.9 194.8L283.6 192.9L283.7 190.6L282.3 189.1L280.2 187.7L278.0 186.2L277.0 184.2L275.6 184.2L275.5 182.8L273.6 183.4L273.5 185.2L275.2 187.0L276.2 189.1L278.8 190.3L279.5 191.4L281.6 192.7L282.3 193.6L281.9 194.2L280.2 193.1L279.5 194.4L280.3 195.7L279.5 196.8L278.3 197.5L278.5 196.2L278.8 194.8L278.0 193.6L276.6 192.7L275.2 191.6L273.4 190.4L271.6 189.1L270.6 187.2L269.5 185.8L268.5 185.4L266.7 186.6L265.2 187.9L263.1 187.4L261.7 187.2L260.3 188.1L260.6 189.5L259.1 191.4L257.1 192.3L255.6 194.8L256.3 196.0L255.0 197.9L253.2 199.6L249.7 199.8L248.0 201.1L247.0 200.0L246.0 198.9ZM247.9 173.6L251.0 173.0L254.6 172.1L257.8 171.0L258.4 167.5L256.4 166.8L256.0 165.1L254.2 162.7L253.2 159.9L251.7 159.4L253.2 155.5L251.0 155.0L251.4 152.6L248.9 152.6L247.8 155.5L248.2 158.7L248.9 160.7L248.9 162.4L251.0 162.4L251.7 164.9L251.4 166.1L249.6 166.3L250.0 168.4L248.6 169.6L251.0 170.5L251.7 171.0L249.9 171.4ZM241.8 170.0L244.6 169.8L247.0 168.7L247.5 166.1L248.2 163.2L247.2 161.4L244.6 161.4L243.9 163.2L241.8 163.9L242.5 166.1L241.8 168.4ZM273.8 197.5L278.2 197.1L277.5 199.8L273.8 198.2ZM267.7 192.0L269.8 191.8L269.7 195.3L268.1 195.7ZM268.2 189.1L269.5 188.1L269.5 191.0L268.5 191.0ZM289.4 201.8L293.4 202.3L293.3 202.8L289.6 202.5ZM301.9 202.6L305.2 201.6L304.4 202.8L302.9 203.5ZM329.2 106.8L332.1 111.6L337.8 112.1L336.4 103.5L334.9 99.6L332.8 99.6L330.7 104.4ZM332.8 98.6L336.4 99.1L339.2 93.5L343.5 89.1L349.9 83.3L354.1 80.3L352.0 79.0L344.2 83.3L337.8 88.0L334.2 93.5ZM271.6 59.9L278.8 57.5L281.6 59.9L284.4 65.3L286.6 70.3L282.3 76.4L280.2 81.5L275.9 76.4L272.4 68.9ZM282.3 55.8L288.7 53.3L294.4 57.5L290.1 63.0L284.4 61.5ZM391.1 65.3L398.2 72.4L405.3 68.9L402.5 61.5L395.4 53.3L391.1 48.9L386.8 57.5ZM450.8 89.1L455.1 91.9L460.8 90.8L467.9 89.7L469.3 86.3L462.2 85.1L452.3 85.1ZM455.1 98.6L459.4 99.6L458.0 96.1L455.1 96.1ZM509.9 110.3L513.4 108.1L516.3 109.4L513.4 111.2ZM322.8 55.0L330.0 57.5L335.6 55.0L341.3 53.3L345.6 48.9L338.5 42.2L330.0 48.9L322.8 50.7ZM458.0 163.7L459.4 166.8L459.8 171.4L460.8 175.2L459.4 175.8L459.1 179.0L460.1 181.5L458.0 182.2L458.0 178.0L458.0 173.6L457.5 169.1ZM454.8 189.1L455.5 191.0L456.8 190.4L456.5 189.1L459.7 190.1L462.9 187.5L462.5 185.8L459.4 185.6L457.7 183.4L457.4 187.2L455.5 187.7ZM457.1 191.4L458.0 194.8L456.5 197.5L456.5 200.2L456.2 201.6L455.1 202.8L453.4 203.3L450.8 203.5L450.6 204.0L449.1 205.4L448.0 204.0L447.3 205.0L445.2 206.2L444.4 206.6L443.0 208.8L441.9 209.6L441.2 207.9L440.5 206.2L441.6 204.9L442.3 204.2L444.4 202.3L446.6 201.9L449.4 201.6L450.6 198.9L451.3 199.6L453.0 198.4L454.4 196.6L455.1 193.8L455.1 192.3L455.8 191.6ZM428.1 218.9L429.5 219.3L428.8 221.6L427.8 223.9L427.0 222.4L427.4 220.4ZM410.6 228.0L412.4 227.0L413.9 227.4L412.9 229.2L411.7 229.7L410.6 228.9ZM369.8 242.1L371.2 243.6L372.3 245.3L371.9 246.7L370.5 247.5L369.5 246.0L369.5 243.9ZM427.4 229.2L429.8 229.4L429.5 232.2L428.8 234.4L430.2 235.9L432.4 236.6L432.4 237.9L430.6 236.6L428.8 236.3L427.4 235.4L426.7 233.7L427.1 232.2ZM429.5 246.0L431.6 243.9L434.5 242.1L435.9 243.9L435.6 246.7L434.5 247.5L433.8 247.7L432.4 246.7L431.6 245.3ZM429.5 239.5L431.6 240.3L433.8 238.1L434.8 240.3L433.8 241.7L431.6 242.4L430.2 241.7ZM422.8 243.9L426.0 240.5L425.7 239.8L423.8 242.0ZM411.0 253.9L411.7 253.2L413.9 253.6L414.6 252.0L416.7 251.0L418.1 249.5L420.3 248.2L422.1 246.0L423.4 247.0L425.5 248.6L423.8 249.9L423.4 251.7L423.8 253.2L425.2 254.6L423.5 255.3L423.1 257.4L421.7 259.6L421.0 261.3L419.1 261.8L416.7 260.7L414.6 260.7L412.7 260.0L412.4 258.1L411.3 256.7L411.0 255.3ZM391.5 248.0L394.7 248.6L395.8 250.0L398.2 252.0L400.4 253.4L403.2 256.0L404.6 258.1L406.8 260.3L406.5 264.3L404.6 264.3L402.5 262.8L400.4 260.3L398.6 257.4L396.8 255.3L395.4 252.7L393.2 250.7ZM405.6 265.7L407.5 264.5L410.3 265.3L413.6 265.1L416.3 265.8L418.8 267.1L418.8 268.4L415.3 268.0L411.0 267.1L407.5 266.6ZM419.6 267.7L422.4 267.8L425.2 267.8L428.1 268.0L430.9 267.7L430.9 268.6L426.7 268.7L422.4 268.9L419.6 268.6ZM425.2 269.6L427.8 270.0L426.7 270.7ZM431.6 270.7L433.8 268.9L436.9 268.0L435.9 269.3L433.1 270.6ZM426.4 254.9L427.8 254.2L430.9 254.7L433.8 253.7L433.1 255.4L429.5 255.4L427.4 255.6L427.0 257.1L428.8 257.3L431.4 257.1L430.9 257.7L428.8 258.6L430.2 260.6L430.9 262.4L430.2 263.5L429.2 262.4L428.1 260.3L427.2 261.0L427.2 263.8L426.0 263.8L426.0 261.0L425.0 260.0L426.0 257.4ZM437.3 253.2L438.8 253.9L438.8 256.7L437.8 256.0L437.3 254.6ZM438.0 260.3L442.0 260.6L440.9 261.3L438.0 261.0ZM442.3 257.1L444.4 256.6L446.6 257.1L446.9 259.6L448.3 260.7L452.0 258.1L456.5 259.7L461.5 261.4L463.6 263.5L465.8 264.5L466.2 266.0L467.2 268.1L470.0 270.7L468.6 270.7L465.8 270.3L463.6 267.7L461.5 267.0L460.1 268.1L459.4 269.1L456.5 269.0L454.4 267.4L452.3 267.8L453.3 266.0L452.3 263.8L448.7 262.3L445.9 261.4L444.9 261.7L443.7 260.1L445.9 259.4L444.2 259.1L442.3 258.0ZM467.2 263.8L470.0 263.8L472.5 262.0L472.2 263.1L470.0 264.8L467.9 264.8ZM470.5 259.7L472.9 261.4L473.6 262.7L472.2 261.0ZM417.7 288.1L418.4 290.4L417.4 293.5L418.4 296.7L419.6 300.8L420.6 304.1L419.6 308.0L421.7 309.2L424.5 308.9L426.7 307.3L431.6 307.3L435.2 304.6L439.5 303.4L443.0 303.2L446.6 305.3L448.7 308.9L450.1 307.5L452.0 305.3L451.6 308.3L450.8 309.5L452.6 308.0L453.0 310.2L454.4 310.9L455.8 314.5L458.7 315.4L461.5 314.9L464.1 316.5L466.5 314.1L469.3 313.2L470.0 310.1L471.2 307.1L472.9 304.6L473.9 300.8L474.5 297.8L473.9 294.3L473.3 292.7L471.5 290.9L470.3 288.9L468.6 287.6L467.2 285.3L464.4 283.5L463.6 281.3L462.8 279.1L462.5 277.3L460.5 276.6L460.1 273.9L459.0 271.5L457.5 273.9L457.2 276.8L456.5 279.8L455.8 281.4L453.7 281.3L451.6 279.1L449.4 278.0L449.0 276.6L450.6 273.6L448.7 273.2L445.9 272.8L444.4 272.3L443.0 273.6L441.6 273.9L440.2 277.3L438.5 277.4L436.6 276.0L434.5 276.8L433.1 278.8L431.6 280.8L429.9 280.8L429.8 282.5L428.1 284.4L425.2 285.0L422.4 286.1L420.3 287.0L418.6 288.1ZM461.8 319.5L464.4 320.2L466.9 319.8L466.8 322.3L465.8 324.5L463.6 324.8L462.6 322.5ZM501.6 308.2L503.5 310.1L504.6 312.4L506.0 312.2L506.3 313.8L509.2 313.8L509.6 315.4L507.7 316.9L507.7 318.2L505.3 321.2L504.6 320.6L505.2 318.5L503.5 317.2L504.3 315.4L504.5 313.2L502.5 309.7ZM501.6 319.1L503.8 320.6L502.8 322.9L501.8 325.2L499.6 326.4L498.9 329.4L497.1 331.1L495.4 330.9L492.8 329.8L493.5 327.8L495.4 325.8L497.8 323.9L499.6 321.9L500.6 319.7ZM489.2 285.3L491.4 286.6L493.5 288.5L492.1 288.1L490.0 286.6ZM353.8 336.2L356.3 336.4L355.6 337.7L354.1 337.5ZM34.1 226.7L35.6 227.3L34.6 228.5L34.1 227.6ZM36.3 156.3L39.1 154.2L39.4 155.8L37.3 157.4ZM73.5 171.9L77.5 173.2L80.4 177.1L78.2 176.5L74.7 173.6ZM66.8 164.2L68.7 164.4L69.4 168.4L67.8 166.8Z"/><path fill="#f2efe9" d="M0.0 438.2L10.5 441.7L23.6 443.8L31.4 436.9L32.7 433.6L42.0 430.5L47.2 423.5L56.3 419.6L65.6 418.0L74.7 415.4L75.9 412.4L86.5 414.4L99.6 419.1L102.3 422.3L107.4 421.2L110.1 413.4L111.4 407.6L116.6 405.2L125.7 408.0L133.7 410.4L139.0 414.4L142.8 410.4L146.8 410.4L150.6 405.2L149.3 399.9L153.3 397.4L155.9 392.2L158.6 393.0L159.9 386.9L163.8 381.1L167.7 377.1L174.2 372.6L176.1 373.5L170.4 379.1L169.0 386.9L169.8 397.4L170.8 410.4L169.0 419.6L178.2 427.5L186.0 436.9L194.0 439.6L204.4 440.3L209.6 434.3L217.5 426.3L220.2 416.9L228.0 410.4L235.8 405.2L243.8 399.9L256.0 397.2L274.3 397.0L290.1 397.4L301.8 393.0L311.0 394.6L318.9 386.9L326.7 384.3L331.9 381.8L337.2 384.3L345.0 388.3L355.6 390.2L362.1 395.4L368.6 388.3L376.6 384.0L387.0 384.0L393.5 379.8L402.8 381.1L410.6 384.3L415.9 381.8L423.7 385.0L436.8 384.0L447.3 382.2L457.8 384.3L468.2 389.5L478.7 392.2L489.2 398.7L497.6 403.9L497.1 410.4L490.5 415.9L488.0 426.3L489.2 436.9L493.2 434.9L512.0 438.2L512 512L0 512Z"/><path fill="#aad3df" d="M125.2 47.5L128.7 55.0L130.4 62.3L132.0 68.9L134.3 68.2L133.3 63.0L131.4 55.8L130.4 51.5L133.7 48.9ZM322.8 183.2L325.7 181.1L328.5 180.5L331.4 181.1L331.8 183.6L329.2 184.2L327.8 185.2L329.2 187.2L330.7 189.1L331.0 191.0L332.8 192.0L331.4 193.8L332.1 195.7L332.8 198.4L332.1 199.6L330.0 200.0L327.5 198.8L325.7 197.9L325.7 195.7L326.4 193.3L327.5 193.1L326.0 191.4L324.0 188.5L323.6 186.6L322.6 185.2ZM403.6 170.0L406.0 169.8L409.6 166.8L412.2 160.7L411.3 159.9L408.9 164.4L406.0 167.5ZM361.0 183.0L362.7 180.9L367.6 181.1L368.1 181.5L364.1 181.7L362.0 183.6ZM301.8 256.9L302.9 255.9L304.1 256.3L303.8 258.3L302.2 258.8ZM125.2 180.5L128.7 178.0L130.8 176.3L133.7 176.5L135.7 180.1L135.1 181.1L132.3 181.1L129.4 180.5L127.3 180.9ZM131.1 190.1L133.0 190.6L133.4 187.2L135.1 182.8L134.4 182.2L132.3 183.2L130.8 184.8L131.3 187.2ZM135.5 182.4L137.2 181.7L140.1 182.2L142.2 184.6L140.1 185.2L139.8 187.5L138.7 188.1L137.5 186.2L137.2 183.8ZM137.4 190.6L138.7 191.2L142.2 189.7L143.8 188.5L142.9 188.3L140.1 188.9L138.0 189.9ZM142.5 187.5L145.1 187.5L147.6 187.0L147.5 185.8L145.8 186.4L143.2 186.8ZM115.2 164.9L116.6 164.6L119.0 172.5L118.0 172.8L116.6 169.1ZM78.2 129.1L83.9 126.2L88.2 128.0L86.8 132.2L83.2 133.2L81.1 130.9ZM89.6 145.8L92.4 141.6L98.1 140.4L100.3 140.7L97.4 142.8L93.9 145.8L91.0 146.4ZM299.0 148.7L300.5 144.3L302.9 145.8L302.5 148.1L300.8 149.0ZM305.1 145.8L306.5 140.7L307.9 142.2L307.2 145.8L305.8 146.1Z"/><path fill="none" stroke="#d3b7d1" stroke-width=".58" stroke-linejoin="round" d="M55.5 116.2L55.5 147.8L58.3 148.7L60.4 151.5L63.3 149.5L66.1 152.9L68.6 157.6L71.1 159.4L70.8 161.9M81.1 175.8L120.6 175.8L121.2 175.2L125.2 177.1L128.7 178.0L130.1 177.3L135.4 180.5L135.8 181.1L137.2 182.2L138.7 183.6L138.8 188.1L138.0 189.7L138.7 190.6L143.6 188.5L143.6 187.4L146.8 187.0L149.3 184.2L154.3 184.2L155.3 183.6L156.4 181.1L157.6 179.2L159.3 179.5L159.6 182.6L160.7 184.2M89.5 207.1L92.7 206.9L98.1 209.1L102.1 209.1L102.1 208.3L104.5 208.3L107.4 211.7L109.5 212.9L110.2 211.6L112.4 212.1L114.5 215.3L116.2 217.5L117.8 217.8M124.9 235.2L124.9 234.0L125.6 232.8L127.4 232.8L126.6 231.2L126.6 230.3L129.1 230.3L130.4 229.2M129.1 230.3L129.1 233.1L129.6 233.1M130.6 233.4L129.1 234.6L128.9 235.3L127.9 236.2M128.9 235.3L130.1 236.0L131.1 236.8M131.8 237.4L132.7 236.2L134.0 235.9L135.4 234.7L137.7 234.4M134.1 240.1L135.5 240.3L137.0 240.4M138.1 244.4L138.1 243.0L138.5 242.3M145.9 243.6L146.2 244.7L145.2 245.7M154.0 227.4L154.0 229.1L153.9 230.0M154.6 239.1L152.9 240.3L152.2 242.4L153.0 244.0L153.6 245.7L155.7 246.0L157.2 247.3L160.0 247.2L159.6 249.6L160.3 251.0L159.6 252.0L160.7 254.3M160.7 254.3L159.3 253.4L156.7 253.6L157.6 255.1L156.4 256.0L157.2 257.4L156.6 262.0M156.6 262.0L155.7 261.4L152.9 259.4L151.5 258.1L148.9 256.1M148.9 256.1L147.2 255.6L145.8 255.0L143.9 254.0M148.9 256.1L148.6 258.1L146.8 259.7L144.6 260.8L144.1 262.5L142.9 263.1L141.7 262.3L141.8 260.8M156.6 262.0L152.5 263.3L151.0 265.7L152.2 269.1L153.3 270.3L155.6 269.6L155.6 271.7L157.0 271.6M157.0 271.6L158.3 273.9L157.9 276.8L157.4 278.3L157.9 279.8L157.2 281.3M157.2 281.3L155.9 282.5M157.2 281.3L158.6 283.5L158.6 285.8L159.4 289.3L160.4 289.3M157.0 271.6L159.3 271.3L163.0 269.9L163.1 272.5L164.3 273.8L166.7 274.6L169.2 275.4L170.4 277.6L170.4 279.4L172.9 279.5L173.2 281.3L174.2 282.0L173.5 284.7L173.2 285.3M173.2 285.3L171.9 284.0L168.2 284.4L167.0 288.4M167.0 288.4L164.6 289.3L163.3 288.2L161.8 287.8L160.4 289.3M160.4 289.3L158.9 292.0L158.6 295.1L156.9 298.3L156.4 301.6L156.2 305.8L156.4 308.3L155.7 311.3L154.7 315.4L154.0 319.1L153.9 323.9L154.2 328.8L152.9 334.0L151.8 338.4L153.2 341.7L153.7 342.9L157.2 343.3L158.7 343.8M158.4 344.5L158.4 349.8M167.0 288.4L169.2 290.9L172.4 292.4L174.1 293.5L172.8 296.2L175.9 296.5L178.3 293.7M173.2 285.3L173.8 288.2L176.6 288.5L177.1 291.2L178.8 291.2L178.3 293.7M178.3 293.7L179.5 295.1L179.5 296.2L176.6 298.0L174.1 301.1M174.1 301.1L176.4 302.1L178.5 303.2L180.1 305.3L180.1 307.0M174.1 301.1L173.2 304.9L172.9 307.5M170.7 243.9L169.2 246.0L168.8 247.5L169.7 248.6M169.7 248.6L166.7 250.3L164.7 250.2L165.0 252.4L162.8 254.9L160.7 254.3M169.7 248.6L170.7 248.9L170.8 249.6L171.2 250.4L170.8 252.7L172.1 254.2L173.5 253.9L174.9 253.2L175.6 253.3M174.6 247.5L174.5 248.6L173.5 250.3L174.2 251.3L175.6 253.3M175.6 253.3L176.5 252.4L178.3 252.7M179.2 247.7L178.6 249.6L178.3 252.7M178.3 252.7L180.6 252.9L181.3 252.3L182.5 250.2M252.9 202.6L253.6 205.4L254.3 207.4L251.7 208.3L250.7 209.8L248.5 211.2L246.0 212.1L243.6 213.4L243.6 215.6M243.6 215.0L237.2 215.0M243.6 215.6L243.6 217.7L238.9 217.7L238.9 221.6L237.5 222.4L237.5 225.0L231.8 225.0M243.6 215.6L249.2 219.3L257.7 225.3L257.7 225.9L260.6 227.3L262.0 228.3L273.1 221.6M268.2 199.5L267.8 202.8L266.7 204.7L268.8 207.8L269.5 210.9M269.5 210.9L270.6 208.3L272.4 207.1L272.4 205.9M269.5 210.9L270.1 213.7L269.9 216.9L270.2 219.6L273.1 221.6M273.1 221.6L276.2 223.0L277.3 222.4L290.1 227.7M291.6 208.4L291.6 223.9M290.1 227.7L290.1 227.0L291.6 227.0L291.6 223.9L308.5 223.9M290.1 227.7L290.1 233.4L288.6 233.4L288.0 235.9L287.3 237.9L288.6 240.3M277.3 222.4L278.6 226.4L278.0 231.6L275.3 236.3M275.3 236.3L273.1 237.1L269.5 237.6L266.0 237.4L262.0 236.6L261.1 239.2M262.0 228.3L262.0 231.8L261.0 233.8L257.4 234.4L256.3 234.4M256.3 234.4L257.4 236.8L259.1 238.2L261.1 239.2M256.3 234.4L253.2 235.6L250.3 236.9L248.2 241.0M249.2 219.3L246.8 219.3L248.0 232.2L248.5 233.7L242.5 233.8L239.6 233.5L238.6 234.7M238.6 234.7L236.8 232.6L235.4 232.1L232.5 232.9M238.6 234.7L239.8 238.2M239.8 238.2L243.2 238.5L244.3 241.0L244.6 241.4L247.5 241.3L248.2 241.0M239.8 238.2L236.5 237.9L234.4 237.9L232.2 238.2M236.5 237.9L236.5 239.2L234.7 240.3M237.1 243.1L238.4 241.8L240.4 241.7L240.9 243.0L241.4 243.9L239.6 246.2M241.4 243.9L242.6 245.2L243.9 245.2L244.2 246.9L245.5 248.2L245.3 249.7M243.9 245.2L244.6 243.9L244.6 241.4M252.0 248.7L251.4 246.7L252.2 242.4L252.0 240.3M248.2 241.0L252.2 241.8M252.0 240.3L256.0 240.1L256.7 243.1L256.9 245.3L257.7 247.3M257.3 240.3L258.3 243.1L258.3 247.2M261.1 239.2L261.3 241.4L259.8 244.6L259.8 246.9M257.3 240.3L259.1 238.2M276.2 238.1L275.2 240.5L273.1 243.9L272.4 246.3L270.2 246.2L268.2 249.2M275.3 236.3L276.6 237.6L277.5 240.3L278.0 241.7L276.2 241.8L278.0 245.3M278.0 245.3L276.6 247.5L277.3 250.3L279.0 252.9M269.9 252.7L272.1 252.9L274.8 252.9L279.0 252.9L279.0 253.6M269.9 254.6L272.1 254.6L272.1 252.9M274.9 252.9L274.8 254.2L276.5 254.2L276.6 256.7L275.8 259.4L273.8 259.3L272.8 261.3L271.8 261.6M278.0 245.3L280.2 245.0L282.5 244.4L283.0 243.1L285.0 243.0L286.9 240.8L288.6 240.3M288.6 240.3L289.7 243.6L291.8 244.9L293.7 247.5L295.0 248.7M279.0 252.9L279.6 251.0L282.5 251.0M282.5 251.0L282.5 249.9L283.7 248.7L287.9 250.2L290.8 248.9L295.0 248.7M282.5 251.0L281.7 253.2L281.3 256.4L279.5 258.6L278.8 260.3L277.6 262.1L276.5 263.0L275.1 262.8L274.5 262.5L273.8 263.1L273.4 264.1M289.7 243.6L291.6 241.3L295.8 242.4L298.0 241.7L300.1 242.0L302.2 238.8L303.2 238.5L302.9 241.4L304.5 242.4M304.5 242.4L304.8 240.8L305.8 239.1L307.3 237.8L307.9 235.4L308.6 231.5L310.9 230.0M307.9 235.4L310.0 234.9L312.9 235.2L315.0 236.6L316.3 238.1M316.3 238.1L315.4 240.3L317.0 240.4L317.4 239.5M317.0 240.4L317.9 242.4L318.6 243.1L322.8 244.6L324.3 244.6L320.0 248.9L317.9 249.2L315.7 250.2L314.3 250.4M314.3 250.4L312.2 251.0L310.0 250.9L307.9 249.7L307.1 249.5M315.6 250.4L314.3 251.9L314.3 257.3L315.2 258.4M304.5 242.4L304.6 243.9L302.9 244.9L305.1 246.4L307.1 249.5M307.1 249.5L304.4 250.0L302.9 250.6L300.1 250.7L299.8 251.0M299.8 251.0L298.0 249.6L295.0 248.7M304.4 250.0L305.1 251.7L305.8 253.6L304.5 255.4L304.2 257.4M304.2 257.4L309.5 260.3L309.6 261.0L311.8 262.7M299.8 251.0L300.1 252.9L298.7 254.6L298.2 256.7L298.1 258.0M298.1 258.0L299.4 257.4L304.2 257.4M298.1 258.0L297.2 259.8L297.5 262.3L298.1 265.3L299.8 267.7M299.4 257.4L299.8 259.4L298.7 262.1L297.8 262.3M297.2 259.8L298.5 259.6L299.8 259.4M299.8 267.7L302.8 269.4L304.4 269.6L305.2 272.6L307.9 272.8L310.8 272.2L313.5 271.0M299.8 267.7L296.5 268.9L296.8 273.2L298.4 275.2L295.8 273.8L293.0 273.0L290.7 272.2L290.1 271.6M273.4 264.4L274.8 264.4L279.6 264.4L280.2 266.7L283.6 267.3L284.4 266.0L287.0 266.4L287.3 269.6L287.3 271.7L290.1 271.6M290.1 271.6L290.1 274.6L287.3 274.6L287.3 279.4L289.3 281.4M272.8 281.0L275.9 281.1L282.2 281.1L286.4 282.0L289.3 281.4L292.0 281.7M285.9 282.5L285.9 288.1L284.4 288.1L284.4 292.4L284.4 298.2L283.7 298.6L281.6 299.0L280.2 297.7L279.5 298.5M284.4 292.4L285.4 295.6L287.3 295.3L288.7 293.2L292.3 293.8L294.3 290.7L297.8 288.4M297.8 288.4L295.4 285.8L293.3 284.1L292.0 281.7L294.4 281.9L297.1 279.1L299.2 278.5M299.2 278.5L302.6 280.1L302.9 282.0L302.8 284.3L302.2 287.0L300.5 288.7M297.8 288.4L300.5 288.7L301.5 292.0L301.5 294.3L302.8 295.6M294.4 300.1L296.5 298.5L297.8 299.9L296.5 301.7L295.0 301.3L294.4 300.1M300.1 294.3L301.5 294.3L301.7 295.6L300.5 296.4L299.8 295.4L300.1 294.3M302.8 269.4L303.4 271.5L303.2 273.9L302.5 275.5L303.2 276.1L299.0 277.3L299.2 278.5M303.2 276.1L305.1 276.8L307.1 279.1L306.2 280.7L304.8 279.1L305.2 272.6M243.5 190.3L244.3 190.1L246.6 190.3L247.2 191.0L246.2 193.5L246.0 194.6L245.3 194.8L246.0 197.1L245.5 198.9M253.4 187.4L257.0 188.5L260.6 189.3M266.7 186.6L266.0 185.8L266.0 182.4L265.7 182.2L264.7 181.7L266.0 179.2L266.8 178.8L267.7 175.8L265.1 174.7L262.8 173.6L262.0 173.0L259.7 171.2M260.8 170.5L263.1 170.5L264.5 171.9L264.5 169.6L266.0 168.2L266.2 166.3M264.5 171.9L264.8 173.4L265.1 174.7M268.2 162.2L270.1 162.4M276.2 164.6L276.5 167.3L276.9 169.1L277.3 171.4L277.0 171.6L273.4 173.0L275.6 176.3L274.5 177.3L274.5 179.0L270.9 179.0L269.7 179.0L266.8 178.8M266.0 182.4L268.1 181.7L268.8 182.6L270.8 181.1L273.4 180.1L275.5 181.1L278.9 180.3M269.7 179.0L269.7 180.1L270.8 181.1M275.6 176.3L277.3 175.8L280.0 176.7L280.3 178.0L278.9 180.3M275.5 181.1L275.3 183.0M277.0 171.6L279.5 173.2L282.7 174.7L284.4 175.4L288.1 175.6L290.1 172.3L289.6 170.3L289.6 167.7L290.0 164.6L289.4 163.9L288.4 163.4L284.2 163.4M288.4 163.4L288.4 162.2L286.3 161.2M282.7 174.7L280.0 176.7M280.3 178.0L282.7 178.4L285.2 176.9L287.4 177.1L288.1 175.6M287.4 177.1L288.6 178.0L286.2 181.7L284.9 181.9L282.9 182.4L280.2 182.2L278.9 180.3M288.6 178.0L291.4 178.6L293.8 177.3L296.1 180.9L296.1 183.2L298.2 183.8M293.8 177.3L297.2 178.0L298.7 181.3L296.1 183.2M288.3 185.8L291.6 186.8L294.4 186.0L296.7 186.8M284.9 181.9L286.4 184.6L288.3 185.8L287.9 188.1L287.9 189.5L288.7 191.4L291.6 191.4L293.4 190.6L295.8 190.1M293.4 190.6L293.1 192.5M284.4 194.4L285.7 192.2L288.7 191.4M283.6 190.3L285.3 190.1L285.3 192.0L285.7 192.2M275.3 183.2L278.3 182.6L279.5 181.1M278.5 183.8L280.2 183.8L283.0 184.4L283.7 186.6L283.0 187.5L282.3 189.1M278.5 183.8L279.0 185.8L281.0 188.1L282.3 189.1M283.0 184.4L283.2 182.4M283.0 187.5L284.9 188.5L285.3 190.1L286.7 189.5L287.9 189.5M284.9 188.5L286.2 187.7L286.7 189.5M289.6 170.3L294.4 170.3L299.4 170.5L301.2 168.9L304.4 170.3L306.5 172.8L310.0 173.9L312.9 174.5L312.5 178.2L310.3 179.9M301.2 168.9L300.5 166.3L302.2 165.1L299.9 161.9L299.4 159.9L296.1 159.2M289.4 164.4L292.6 163.9L293.8 160.7L296.1 159.2L295.4 155.8L295.0 155.3L295.1 152.0L295.8 150.4M295.0 155.3L292.3 154.2L290.6 154.5M285.9 159.2L288.7 158.7L291.6 158.7L293.8 160.2M295.5 147.3L298.0 144.3L300.8 140.0L298.7 136.5L298.7 130.9L297.2 126.6L298.7 123.7L296.5 121.8L297.1 118.6L299.8 115.4M297.1 118.6L297.7 116.6L295.8 114.6L293.0 115.8L291.6 120.2L287.9 119.8L285.3 118.2M285.3 118.2L289.7 122.9L289.4 126.2L290.4 130.5M285.3 118.2L281.6 120.6L279.2 124.4L276.6 129.5L275.5 134.6L273.4 138.2L273.2 143.7L274.2 144.9L273.4 148.7L272.8 150.7L272.2 151.8M245.6 161.9L244.6 163.2L247.0 164.2M315.0 191.0L317.9 191.8L318.2 193.6L319.7 194.4L319.1 196.8L319.7 198.9M319.7 198.9L316.3 199.1L312.9 199.6L310.0 199.6L308.2 199.8L307.5 201.2M312.9 187.4L316.4 187.7L319.3 188.7L322.0 190.3L324.0 191.6L325.1 190.4M317.9 191.8L320.0 191.4L322.0 190.3M320.0 191.4L320.7 192.7L321.4 194.6L322.1 195.9M319.7 194.4L322.1 195.9L324.3 194.8L325.5 196.8M316.3 199.1L314.6 203.1L314.3 203.8L311.2 205.6L308.3 207.4L306.8 206.7M306.8 206.7L307.1 205.6L308.1 204.2L307.2 203.5M311.2 205.6L311.8 207.6L308.6 208.8L310.0 210.4L309.3 211.2L307.3 212.5L305.8 212.2M304.8 209.1L305.6 212.1M305.8 212.1L306.5 208.8L306.6 206.7M311.8 207.6L313.5 208.1L315.7 209.4L319.6 212.5L322.1 212.7L323.8 213.7L324.8 213.7M322.1 212.7L323.4 211.1L324.3 211.2M319.7 198.9L320.6 201.1L321.6 202.6L320.7 204.5L321.6 206.2L324.0 208.3L323.8 209.6L325.1 211.4M316.9 232.4L317.4 230.9L318.9 230.9L322.4 231.0L323.6 231.3L325.7 229.1L330.0 228.5L334.2 227.0L335.2 223.9L334.5 222.8L330.8 222.5L329.4 220.7M334.5 222.8L335.4 220.8L335.8 219.7L336.2 219.4M330.0 228.5L331.5 232.1M333.9 198.6L335.9 197.3L337.5 197.1L339.2 198.0L340.3 198.4L341.9 200.0L343.0 200.0L343.0 201.8M343.0 201.8L342.2 204.0L342.6 205.4L342.2 206.2L342.6 208.8L343.9 208.9L343.9 209.9L342.6 211.6M342.6 211.6L343.9 213.5L345.3 214.2L345.3 215.8L345.9 216.7L343.6 218.9M342.6 211.6L344.9 212.2L347.2 212.2L350.3 211.4L350.4 209.6L351.7 209.3L353.0 208.3L354.6 208.1L354.8 206.2L356.0 205.6L355.4 204.5L357.1 204.4L357.8 202.1L357.4 201.1L359.1 199.6L362.5 198.9M343.0 201.8L344.6 202.3L345.7 201.4L347.7 200.5L349.3 198.8L350.6 198.6L352.4 198.9L352.7 199.3L354.6 199.1L355.8 198.2L356.1 197.3L357.4 197.5L357.8 199.8L360.2 198.4L362.5 198.9M353.0 221.3L355.6 220.5L357.0 220.2L356.1 218.2L355.6 216.1L356.6 214.8L358.7 214.5L359.8 212.9L361.1 211.2L362.2 209.6L362.0 206.6L361.2 205.9L361.2 203.3L364.1 202.8L366.6 201.9M362.5 198.9L364.1 201.1L366.6 201.9M366.6 201.9L368.4 203.8L368.1 206.2L368.8 206.9L367.9 209.1L369.5 209.8L371.2 210.9L372.8 211.1L375.6 213.0L378.3 214.5L381.3 214.7M371.2 210.9L369.9 213.2L372.6 214.7L374.5 215.5L376.9 216.7L379.7 216.9L381.3 217.0L381.3 214.7L382.4 215.6L383.7 214.2L386.3 214.8L389.0 213.4L391.1 212.5L393.2 213.8L394.4 214.2M382.4 215.6L383.9 216.6L387.0 216.3L386.3 214.8M394.4 214.2L392.5 215.8L391.4 216.9L390.5 219.3L389.8 221.0L388.7 221.0L388.7 223.6L387.7 225.0L387.3 225.9M381.3 217.0L382.3 217.2L383.7 217.8L383.7 218.8L387.4 219.3L387.1 220.5L385.7 221.3L386.3 222.4L387.3 221.3L387.7 225.0M381.4 218.0L381.3 220.0L382.2 220.7L382.4 222.5L382.7 224.2M394.4 214.2L396.4 215.3L396.4 217.8L394.8 219.6L395.1 221.0L396.8 222.2L397.4 223.8L398.4 224.7L399.9 224.8M399.9 224.8L400.8 223.3L401.8 222.8L403.8 223.0L405.8 221.9L407.8 222.7L407.6 223.9L409.6 224.7M398.4 224.7L398.4 226.5L396.7 227.4L395.1 229.2L395.1 230.7L396.2 232.5L395.7 234.1L397.1 236.6L397.1 239.1L396.4 241.3M398.4 226.5L398.9 227.7L399.9 227.7L399.9 230.7L401.4 230.0L403.9 229.5L405.0 230.9L405.0 232.4L406.2 233.7L406.0 235.3M406.0 235.3L402.5 235.4L401.8 236.6L402.2 238.8L402.3 239.2M408.9 234.9L408.9 238.1L406.8 239.2L406.6 240.3L404.6 241.1M401.4 223.3L402.8 225.7L404.8 226.0L403.9 227.7L405.6 229.1L407.6 231.8L408.9 234.4L408.9 234.9L406.0 235.3M398.4 246.9L399.8 247.9L401.2 247.2M411.9 253.2L412.9 254.7L415.1 254.6L416.7 253.9L419.0 253.9L420.7 249.9L423.1 250.0M456.5 259.7L456.5 269.0M432.5 269.4L433.8 269.1L434.1 269.7M325.7 181.5L324.0 178.4L322.1 177.1L322.8 173.9L325.0 174.1L325.3 172.3L328.2 169.8L332.1 170.3L333.5 171.6L337.1 171.4L339.3 171.4L341.2 172.3L343.5 171.9L341.3 169.4L342.8 168.4L342.8 164.9L348.4 163.4L353.0 161.9L354.1 160.9L356.7 161.2L357.3 164.2L360.5 164.4L361.0 165.6L364.8 163.9L366.8 166.1L369.8 171.9L374.0 171.4L377.3 174.5L380.2 175.4M380.2 175.4L378.0 177.1L377.6 179.9L374.0 179.7L373.0 183.2L369.8 184.2L370.9 187.7L370.1 189.7M370.1 189.7L368.4 188.5L363.7 188.1L361.2 187.7L360.5 189.3L357.0 188.9L356.8 189.7L354.1 191.4L352.7 192.0L350.6 191.6L349.9 188.1L348.3 186.8L344.0 187.2L342.8 185.4L339.3 183.0L335.6 184.2L335.6 191.4L333.5 190.1L330.5 190.4M335.6 191.4L337.1 191.4L339.2 188.7L341.3 189.7L341.5 191.2L344.0 191.8L345.6 194.4L347.7 195.9L350.6 198.6M352.4 198.9L353.1 197.1L352.3 194.6L356.1 193.1L356.8 189.7M356.1 193.1L358.0 194.9L360.8 194.8M380.9 175.4L383.6 174.1L386.8 172.1L390.4 173.6L395.1 174.1L395.8 172.5L395.4 169.1L398.1 169.6L401.4 170.7L401.5 172.3L403.5 173.2L406.8 172.8L408.9 174.1L412.4 175.4L417.4 173.4L422.0 174.1M380.9 175.4L382.3 177.8L385.3 180.9L385.3 183.8L389.0 184.4L391.7 185.6L393.1 188.7L398.2 188.9L400.4 189.1L405.3 190.8L411.7 189.3L415.0 186.8L415.1 184.0L417.7 184.6L421.8 181.5L426.4 180.7L423.1 178.6L420.3 178.6L422.0 174.1M422.0 174.1L426.4 173.0L425.5 171.4L427.8 167.7L427.1 166.1L431.8 165.6L434.8 166.8L437.5 173.2L441.6 176.0L442.3 178.6L447.6 177.3L445.3 184.0L442.6 184.2L442.6 187.2L441.7 189.3M441.7 189.3L440.6 188.1L438.0 190.1L436.5 190.4L432.9 193.8M435.3 198.0L436.9 197.0L438.6 196.4M370.1 189.7L367.5 191.2L365.4 192.0L362.5 192.9L360.8 194.8L361.0 196.4L362.5 196.8L362.5 198.9"/></g>
<g transform="translate(236 0)"><path fill="#f2efe9" d="M17.1 131.2L19.2 121.4L24.2 118.6L28.4 112.5L33.4 109.0L39.8 111.2L45.5 113.3L52.6 114.6L55.5 116.2L61.2 118.6L65.4 116.6L71.1 114.6L74.0 112.5L78.2 114.6L79.6 117.0L85.3 116.6L92.4 119.8L92.4 123.3L99.6 123.3L102.4 121.8L106.7 121.0L110.9 123.3L116.6 122.5L119.5 121.4L120.2 116.6L121.6 106.8L124.4 114.6L126.6 117.4L128.0 120.6L130.8 122.5L133.7 124.4L134.4 116.6L139.4 115.4L140.4 120.6L139.4 126.2L136.5 128.8L133.7 129.8L132.3 133.2L130.8 136.5L126.6 138.2L123.7 142.8L121.6 148.7L121.6 152.0L124.4 156.9L128.0 156.9L132.3 159.4L135.1 161.2L139.0 161.7L139.4 166.8L140.8 169.1L142.2 171.0L143.6 170.3L144.1 168.0L143.6 164.4L142.9 161.9L145.8 159.4L147.2 155.5L145.1 152.3L145.8 148.7L145.1 141.9L149.3 141.9L152.2 142.8L153.6 144.3L156.4 145.8L157.2 151.5L159.3 153.4L162.1 152.0L163.6 147.8L165.0 150.1L167.1 154.2L168.5 158.2L170.7 161.2L174.2 163.2L176.4 166.8L176.8 169.1L174.9 170.3L172.1 172.5L167.8 173.2L163.6 173.2L160.7 174.7L157.9 176.9L155.0 180.1L157.9 178.4L160.7 175.8L164.3 175.8L164.3 177.3L162.1 178.0L163.6 180.1L164.3 181.7L166.4 182.2L168.5 182.8L170.7 180.1L170.7 182.4L169.2 183.6L166.4 184.8L164.3 186.2L162.6 187.2L161.8 185.6L163.6 183.8L162.1 183.8L160.7 184.2L159.3 185.4L156.4 186.8L155.4 188.7L156.4 190.4L154.6 191.0L151.5 192.0L150.8 192.9L150.5 194.8L149.3 196.0L148.6 197.5L147.9 199.3L148.2 201.1L147.2 203.1L145.1 204.7L143.6 205.9L141.1 207.9L140.4 210.4L141.5 214.0L142.2 216.4L141.8 218.8L140.8 218.9L139.7 217.2L138.4 214.8L138.2 212.9L136.5 211.2L134.7 211.7L133.0 210.6L130.8 210.7L128.7 210.9L129.0 212.5L127.3 212.5L125.2 211.9L122.3 211.9L120.5 213.0L118.0 214.8L117.6 217.7L117.0 220.8L116.9 223.5L117.8 225.9L119.5 228.2L120.9 229.1L122.3 229.5L125.2 229.1L126.6 228.5L127.3 226.2L128.0 225.1L130.8 224.5L132.3 224.8L132.3 226.5L131.3 229.2L130.6 230.7L129.7 232.9L130.8 233.2L133.7 233.1L136.1 233.2L137.5 234.4L137.2 237.4L137.0 239.5L137.2 241.0L138.7 242.7L140.1 243.3L142.2 242.9L143.6 242.4L145.8 243.6L146.5 244.6L145.8 245.6L144.6 244.3L142.9 243.3L141.8 244.2L141.8 245.4L140.1 244.9L138.2 244.3L137.2 243.9L135.1 241.7L134.0 240.5L132.3 238.1L131.3 237.1L128.7 236.6L126.6 235.9L124.4 234.7L122.3 232.8L120.2 233.2L118.0 233.2L115.2 232.2L111.6 230.7L108.8 229.5L106.7 227.7L105.8 226.2L106.2 224.7L105.2 222.4L103.1 220.0L101.0 218.2L100.3 216.1L98.1 214.5L96.3 212.9L95.3 209.6L92.9 208.4L92.9 210.4L94.6 212.9L96.0 215.3L97.7 217.7L98.8 220.0L100.3 221.9L99.6 222.5L98.1 220.8L96.4 219.3L96.0 217.2L93.9 215.8L93.2 214.5L92.4 212.5L91.0 210.4L89.6 207.1L87.8 204.9L86.0 204.0L84.5 203.5L82.8 200.2L81.8 198.0L79.9 194.8L79.2 193.1L79.4 190.1L79.5 186.2L79.6 181.7L78.6 177.3L81.1 177.6L81.8 179.5L81.5 175.8L80.4 174.7L78.2 172.5L75.4 171.4L74.0 168.0L71.8 165.1L70.7 162.7L69.0 160.7L67.6 158.2L65.4 154.2L63.3 151.5L60.4 152.3L57.6 149.3L54.0 148.7L51.2 148.1L48.4 146.4L45.5 146.4L44.8 148.7L42.7 150.4L40.1 150.9L40.5 147.3L42.7 145.2L40.5 145.8L38.4 148.7L37.3 151.5L36.3 154.2L33.4 156.9L30.6 159.4L27.7 160.9L24.9 162.4L21.8 163.2L24.2 161.2L27.0 159.7L27.7 159.4L30.6 156.9L32.0 152.3L29.9 152.3L27.0 152.3L25.6 150.7L25.6 148.7L22.8 147.3L20.9 145.8L19.9 142.8L21.6 139.7L24.2 138.8L27.0 137.2L27.0 134.6L24.9 134.9L22.0 134.9L19.2 133.2ZM168.8 127.7L166.4 133.2L164.3 139.1L162.1 142.8L158.6 137.5L161.4 139.7L162.8 134.9L159.3 128.8L160.7 133.2L156.4 140.7L153.6 137.5L150.8 135.2L146.5 135.6L145.1 133.9L146.5 131.9L150.8 131.5L151.5 128.0L152.9 124.4L150.8 120.6L147.2 117.9L144.4 114.6L140.8 114.6L135.8 114.6L133.7 113.3L130.8 112.5L129.4 110.3L128.0 103.5L128.7 97.6L133.7 97.1L135.8 100.1L139.4 97.6L141.5 101.1L146.5 102.1L149.3 104.4L153.6 108.1L157.9 112.5L160.0 116.6L160.7 120.6L165.0 123.3L167.8 126.2ZM169.0 36.1L163.7 29.5L154.7 27.1L147.2 27.1L141.2 31.7L133.8 37.1L127.0 41.2L125.6 46.1L121.0 47.0L118.9 55.0L120.3 63.0L123.3 68.9L127.9 71.0L130.8 69.6L132.3 75.8L130.0 77.7L127.9 82.1L133.8 83.9L141.2 82.1L144.2 79.0L145.8 75.1L148.8 70.3L149.5 64.5L152.5 59.9L156.2 55.0L160.7 49.8L164.4 45.1L167.4 40.2ZM116.6 67.5L120.3 70.3L121.0 75.1L117.3 72.4ZM126.3 88.0L129.3 85.1L133.8 86.3L141.2 86.8L142.8 89.7L141.2 92.9L135.3 92.9L129.3 91.9L125.6 91.3ZM87.5 106.3L93.4 101.6L100.8 101.6L106.1 98.1L107.7 104.0L112.1 110.8L110.6 116.6L103.1 119.8L94.9 121.0L89.7 113.7ZM76.9 101.6L79.9 94.0L86.8 94.0L91.2 98.6L85.2 105.4L80.8 109.0ZM82.2 83.9L91.2 76.4L88.9 82.1L94.9 88.0L100.8 86.3L105.4 88.0L99.4 92.9L93.4 91.3L87.5 88.0ZM107.0 81.5L112.1 80.3L116.6 83.9L115.9 89.7L111.4 89.1L108.4 86.3ZM110.6 99.6L115.9 96.6L118.9 101.6L115.9 107.7L112.1 104.9ZM120.3 96.6L127.0 95.6L126.3 101.6L122.6 106.3L120.3 101.6ZM120.2 119.4L115.2 119.4L114.5 115.8L118.8 114.6ZM132.3 131.5L135.1 129.1L137.2 130.5L140.1 134.9L141.9 137.2L138.0 136.5L134.4 139.1L132.3 137.5L133.7 134.9ZM93.4 73.8L98.7 68.2L100.1 70.3L97.1 75.8ZM106.1 63.0L111.4 66.0L114.3 72.4L110.6 71.7L107.0 66.8ZM171.7 178.8L176.4 178.8L177.1 180.5L179.9 180.9L181.0 179.0L179.9 176.9L179.6 175.2L177.1 173.6L176.6 170.3L174.9 171.4L173.8 174.7L172.1 176.9ZM193.4 149.3L187.7 145.8L184.2 139.7L182.0 133.2L179.9 126.2L179.2 116.6L183.5 116.6L183.5 114.6L178.5 111.6L177.8 105.8L175.6 96.1L172.8 88.0L166.4 83.9L159.3 85.1L155.0 79.0L152.2 71.0L159.3 61.5L163.6 57.5L166.4 47.0L173.5 37.1L184.9 33.9L192.0 30.6L202.0 22.3L213.3 21.0L221.9 30.6L227.6 39.2L238.9 44.2L230.4 57.5L229.0 68.9L229.7 82.1L227.6 90.8L229.0 96.1L224.7 101.1L224.7 108.1L224.7 112.9L219.7 113.3L223.3 115.4L219.0 120.6L213.3 122.1L209.1 125.5L204.8 130.5L199.8 131.5L197.7 136.5L196.3 141.3L194.8 147.3ZM221.4 131.5L224.0 128.4L227.6 129.8L233.2 128.0L235.4 131.5L236.5 133.9L233.2 136.5L229.0 138.5L224.7 137.2L224.0 134.9L221.9 133.6L224.7 132.2ZM135.3 224.1L138.0 222.4L141.5 222.2L145.1 223.5L148.6 225.7L150.5 226.7L145.8 227.1L146.5 226.0L144.4 224.7L140.1 223.6L137.2 223.6ZM150.2 229.4L152.5 227.1L156.4 227.3L158.7 229.1L155.7 229.7L154.0 230.4L152.9 229.5ZM144.6 229.4L147.5 229.7L146.5 230.3L144.8 230.0ZM160.4 229.2L162.6 229.4L162.4 230.0L160.4 230.0ZM146.1 243.9L147.9 242.7L148.6 241.0L150.0 240.3L152.2 239.5L154.3 238.2L154.3 240.3L153.9 242.4L155.0 241.0L156.4 239.5L156.4 238.5L158.6 240.5L162.1 240.8L164.3 241.4L167.8 240.7L169.2 242.4L170.7 243.9L172.8 246.0L174.9 247.5L177.8 247.6L180.6 248.2L182.8 249.6L184.2 253.2L184.9 255.3L187.0 256.7L188.4 257.0L192.0 258.1L193.4 259.8L197.0 260.1L200.5 261.0L203.4 262.8L205.8 263.5L206.5 266.7L205.8 269.6L203.4 272.5L201.2 274.6L200.5 277.6L200.5 281.3L199.5 284.3L197.7 288.1L194.8 289.6L192.0 290.9L189.2 292.3L187.0 294.3L186.7 298.0L184.9 300.8L182.8 303.7L180.6 307.0L178.5 308.9L175.6 308.9L173.1 307.5L174.6 310.1L175.2 311.8L173.9 314.9L170.7 316.1L167.5 316.3L167.4 319.5L163.6 320.0L165.0 322.9L163.1 324.8L162.8 327.8L160.0 329.8L162.1 333.0L162.1 334.7L159.7 337.3L158.6 339.5L157.9 341.7L158.7 343.8L158.9 346.4L161.4 348.8L163.1 349.6L160.7 350.8L157.2 350.8L153.6 348.3L150.8 345.2L149.3 341.7L148.6 337.3L148.6 333.0L150.0 329.8L151.5 325.8L152.2 321.9L151.0 318.2L151.5 314.5L152.2 311.8L153.6 308.3L154.3 304.9L154.3 300.8L154.6 297.5L155.4 294.3L155.9 290.4L156.2 286.6L155.9 282.6L154.3 281.0L151.5 279.5L148.6 277.6L147.5 275.8L146.2 273.2L144.6 270.3L143.4 267.4L142.2 265.3L140.4 263.8L140.4 262.1L141.8 260.8L142.2 259.6L140.8 259.1L141.2 257.4L142.1 255.7L142.5 254.6L143.9 253.9L144.4 252.3L145.8 251.0L145.9 248.9L145.8 246.7L145.2 245.7ZM169.2 341.7L173.5 341.3L173.5 342.9L170.0 343.6ZM247.6 201.4L248.5 201.2L251.7 202.3L253.9 202.5L256.0 201.4L258.1 200.2L260.3 199.6L263.1 199.6L266.7 199.3L269.9 198.8L271.6 199.3L271.1 200.4L271.2 201.9L271.6 203.1L270.5 204.2L271.6 205.7L273.8 206.6L274.9 206.4L277.8 207.4L278.3 208.8L280.9 209.8L283.0 210.7L284.4 209.6L284.4 207.4L286.6 206.4L288.7 206.9L291.6 208.4L294.4 209.1L297.2 209.8L300.1 208.8L301.9 209.1L302.4 211.2L302.9 213.7L304.4 216.1L305.1 218.5L306.5 220.8L306.9 222.8L308.6 225.4L309.0 228.5L310.8 230.0L312.2 233.7L314.3 235.2L316.4 237.4L317.6 238.1L317.6 239.5L319.3 241.1L321.4 240.5L324.3 240.0L327.1 239.4L329.0 239.0L328.5 241.1L327.1 244.6L325.7 247.5L324.3 249.6L321.8 252.4L319.3 254.6L316.4 257.1L314.3 258.8L312.9 261.0L312.2 263.1L311.2 265.3L312.2 267.4L312.2 270.3L313.6 271.7L313.6 274.6L313.9 277.6L312.2 279.8L309.3 281.6L307.2 283.5L305.5 285.0L306.2 288.1L306.5 291.2L302.9 293.5L302.6 295.9L301.9 298.8L300.1 300.8L298.7 302.9L296.5 305.3L294.4 307.0L292.3 307.5L288.7 307.5L284.4 308.9L282.3 307.8L281.9 304.9L280.9 301.6L279.5 298.5L277.8 295.9L277.0 292.7L276.6 289.6L275.2 286.6L273.8 283.5L272.8 280.5L273.1 277.6L274.5 274.6L275.6 271.7L274.9 269.3L273.8 266.0L273.4 264.5L273.1 263.1L271.6 261.4L269.5 259.3L268.8 257.0L269.5 254.6L269.9 252.4L269.8 250.9L268.5 249.6L266.0 249.7L264.5 249.9L263.5 248.5L262.4 247.0L260.3 246.9L258.1 247.2L256.0 248.0L253.2 249.2L251.0 248.7L248.9 248.7L245.3 249.7L243.2 248.9L240.4 246.7L238.2 245.3L237.1 243.9L236.8 242.1L234.7 240.5L233.2 238.8L232.1 236.9L231.1 234.9L232.5 232.9L232.8 230.0L233.0 227.7L231.8 225.4L233.2 221.6L234.7 220.0L235.4 217.7L237.5 215.0L239.6 213.7L241.8 212.1L242.2 209.6L243.2 207.1L245.3 205.2L246.8 203.7ZM326.1 273.2L327.5 278.3L326.4 281.3L325.0 285.8L323.6 290.4L322.8 292.7L320.4 293.7L318.6 292.0L317.6 288.9L319.0 285.0L318.6 281.3L319.3 279.4L322.1 278.3L324.3 275.4ZM243.2 199.3L242.5 196.2L243.5 192.9L243.5 190.1L242.9 187.7L244.6 186.8L248.2 187.0L251.0 187.2L253.4 187.4L254.3 184.8L254.4 182.2L252.9 179.7L249.6 178.2L249.3 177.1L251.7 176.3L253.7 176.5L253.4 174.3L254.6 175.0L256.3 174.7L258.1 173.4L258.4 171.6L260.3 170.7L261.7 169.1L262.8 166.8L264.5 165.8L266.0 165.8L267.8 165.1L268.4 163.7L268.2 160.7L267.5 158.2L268.1 156.6L270.9 155.0L270.6 158.2L270.2 160.7L269.9 162.4L271.6 164.4L273.8 163.4L275.9 164.4L278.8 163.7L282.3 162.7L284.2 163.4L285.9 161.4L285.9 157.4L286.9 155.3L288.1 155.0L289.0 156.6L290.4 156.6L290.7 153.4L289.4 150.9L292.3 150.1L295.8 150.1L299.0 149.0L296.5 147.3L293.0 147.5L288.7 149.0L286.6 147.0L286.3 143.4L286.6 139.7L288.7 136.5L291.8 132.2L290.8 130.5L287.6 130.9L286.3 134.9L285.2 137.5L282.3 140.4L280.6 143.7L280.5 147.0L282.7 149.3L281.3 152.0L279.6 154.7L279.3 158.2L276.6 159.4L276.2 160.9L274.5 160.9L274.1 158.9L272.8 155.0L271.9 151.5L271.1 149.8L269.5 152.0L267.4 153.9L265.2 153.9L263.8 151.5L263.1 147.3L263.1 142.8L265.2 140.4L268.1 138.2L270.9 134.9L273.1 131.5L274.5 126.2L276.6 122.5L279.5 118.6L283.0 114.6L287.3 112.5L292.3 109.9L295.8 110.3L300.1 113.3L298.7 115.8L302.9 117.0L307.2 118.2L312.9 122.5L314.7 126.2L313.6 128.8L310.0 129.8L305.8 128.0L302.9 127.3L305.1 131.5L305.5 134.9L308.6 135.2L310.0 133.9L312.9 134.6L313.6 130.5L316.4 128.4L318.6 129.1L318.9 124.4L317.9 120.6L321.4 121.8L322.1 126.2L324.3 123.7L327.1 121.8L331.4 120.6L333.5 121.8L337.1 120.2L340.6 120.6L342.0 115.8L347.0 117.4L349.9 118.6L352.7 120.6L354.1 118.6L351.3 115.8L351.3 110.3L353.4 103.5L355.6 100.1L359.1 102.1L359.4 110.3L358.4 117.4L359.1 122.5L360.5 127.0L361.2 122.5L360.8 116.6L362.0 110.3L362.7 103.5L365.5 105.8L369.8 105.8L370.5 98.6L376.9 97.1L379.7 90.8L385.4 86.8L391.1 84.5L398.2 82.1L404.3 74.5L408.2 79.0L415.3 82.1L417.4 88.0L412.4 93.5L415.3 97.1L419.6 97.6L425.2 100.6L430.9 97.6L436.6 99.1L435.9 103.5L440.2 110.3L442.3 111.2L445.2 108.1L450.8 108.1L455.1 103.5L462.2 104.4L469.3 107.2L473.6 110.8L480.7 110.8L483.6 115.8L487.8 115.8L493.5 116.2L497.8 114.6L499.2 118.6L504.9 115.4L509.2 117.4L512.0 119.0L516.3 121.4L522.0 126.2L526.5 129.5L522.7 135.2L518.4 133.9L514.8 131.5L512.7 129.1L509.9 134.2L508.4 134.2L510.6 139.7L511.3 141.9L504.9 143.4L500.6 146.1L498.2 148.7L492.1 148.7L490.0 149.0L488.2 152.9L486.4 154.7L487.8 157.6L486.4 159.4L485.7 161.9L483.6 163.7L483.6 166.5L481.4 167.3L478.9 171.4L477.9 168.0L477.3 161.9L477.2 156.9L479.3 154.2L482.8 150.7L485.7 147.5L488.5 143.7L489.2 141.3L485.0 144.0L483.6 146.7L479.3 144.0L476.4 150.1L472.2 150.9L467.9 149.8L462.2 150.7L458.7 151.5L455.1 155.5L451.6 159.9L448.4 162.7L451.6 164.9L454.4 163.9L457.0 166.3L455.8 170.3L455.8 173.6L455.1 177.3L453.0 181.1L450.1 184.6L448.3 187.2L444.4 188.1L442.3 188.9L440.9 191.0L440.5 192.3L438.0 193.8L437.3 195.1L438.8 197.0L440.0 199.3L440.0 201.8L439.2 202.8L437.3 203.3L435.6 203.5L435.9 201.1L436.2 199.3L435.5 197.9L433.8 197.5L434.1 194.8L432.8 194.0L430.9 194.6L428.5 195.9L429.5 193.1L428.1 192.2L426.0 194.2L423.8 195.3L423.4 196.6L425.2 197.9L425.2 198.9L427.7 197.9L430.2 198.6L428.1 200.0L427.0 201.1L425.7 202.8L427.1 204.9L428.1 207.1L429.4 208.8L429.2 209.8L428.1 210.4L429.5 211.4L429.1 213.7L427.4 215.8L426.2 218.0L424.5 219.7L422.4 221.6L420.3 222.7L418.4 223.5L416.0 224.2L413.2 225.0L412.9 226.4L412.2 224.7L410.3 224.4L408.2 225.4L406.8 227.7L406.5 229.2L408.2 231.5L410.3 233.2L411.4 235.9L411.6 238.8L411.0 239.7L408.9 241.0L407.9 241.3L407.6 242.6L405.3 243.7L405.2 241.7L403.9 241.0L402.5 240.3L401.8 238.8L399.6 237.8L399.4 236.8L398.2 236.9L397.9 239.5L397.1 242.4L398.2 243.9L398.9 245.7L400.4 246.3L401.8 247.5L403.1 249.2L403.2 251.7L404.2 254.0L403.1 254.0L400.4 252.2L399.2 250.3L398.6 248.2L397.8 246.6L396.1 244.6L396.1 242.0L396.4 239.5L396.2 237.4L395.1 234.7L395.0 232.2L393.7 231.6L391.8 233.2L390.1 232.9L390.4 230.7L389.3 228.0L388.0 226.2L386.8 224.7L386.4 223.1L384.7 223.1L382.6 224.2L381.2 224.4L379.7 224.8L379.3 226.5L377.3 227.4L375.5 229.2L373.0 231.5L370.8 233.1L369.9 234.4L370.2 236.9L369.5 239.5L369.5 241.3L368.4 242.7L367.2 243.3L366.2 244.4L364.8 243.1L364.1 241.0L363.1 238.8L362.2 236.6L361.5 234.4L360.5 232.2L359.8 230.0L359.5 228.2L359.4 226.2L359.3 224.7L358.8 225.4L357.0 225.7L355.6 225.4L354.1 223.5L356.0 222.5L353.8 222.1L352.0 221.0L350.9 219.3L347.7 218.8L344.2 218.9L340.6 218.6L337.8 218.2L337.1 216.4L336.1 215.8L333.5 216.7L330.7 215.3L328.5 213.2L327.4 211.2L325.4 210.7L324.3 211.2L324.6 212.9L325.4 214.8L327.1 216.6L327.5 218.5L328.5 217.5L329.4 219.3L329.0 220.4L330.7 220.5L332.8 220.7L334.6 218.8L335.9 217.4L336.4 219.7L337.8 221.1L339.5 221.4L341.0 223.1L339.5 226.2L338.2 228.5L337.1 230.0L334.6 231.0L332.8 231.5L330.4 232.6L327.1 234.4L324.3 235.9L320.7 237.4L317.9 237.8L317.2 235.9L316.7 233.7L316.4 231.8L315.0 229.2L313.6 227.3L311.8 224.7L311.2 222.4L309.3 220.4L308.3 218.0L306.5 215.3L305.5 213.7L305.8 212.1L304.8 214.8L302.4 211.2L301.9 209.1L304.4 209.1L305.4 207.9L305.8 206.2L306.9 203.7L307.1 201.4L307.5 199.8L305.1 199.8L302.9 200.9L300.1 199.6L299.4 200.5L297.2 200.2L295.1 199.6L294.8 197.9L293.7 196.6L294.1 194.8L293.3 193.8L295.1 193.1L297.2 192.9L297.2 191.8L300.1 191.6L302.9 190.1L305.8 190.1L307.9 191.4L310.0 192.0L312.9 192.0L315.2 190.8L315.0 189.1L312.9 187.2L310.8 185.4L309.0 184.2L309.3 182.2L311.5 179.7L309.3 180.5L306.5 181.1L305.8 182.8L307.9 183.6L306.5 184.2L304.4 185.4L303.6 184.2L302.2 183.4L303.6 182.2L301.5 181.1L299.8 181.1L298.2 183.2L296.8 185.2L296.7 187.2L295.7 188.7L295.8 190.4L297.2 191.6L295.8 192.0L294.4 192.7L293.3 193.3L293.0 192.3L290.8 192.2L289.8 193.3L288.4 192.9L288.3 194.8L289.1 195.7L290.1 197.1L290.1 198.0L288.7 198.2L289.0 200.0L287.9 200.2L286.9 199.6L286.2 197.9L285.9 196.0L284.9 194.8L283.6 192.9L283.7 190.6L282.3 189.1L280.2 187.7L278.0 186.2L277.0 184.2L275.6 184.2L275.5 182.8L273.6 183.4L273.5 185.2L275.2 187.0L276.2 189.1L278.8 190.3L279.5 191.4L281.6 192.7L282.3 193.6L281.9 194.2L280.2 193.1L279.5 194.4L280.3 195.7L279.5 196.8L278.3 197.5L278.5 196.2L278.8 194.8L278.0 193.6L276.6 192.7L275.2 191.6L273.4 190.4L271.6 189.1L270.6 187.2L269.5 185.8L268.5 185.4L266.7 186.6L265.2 187.9L263.1 187.4L261.7 187.2L260.3 188.1L260.6 189.5L259.1 191.4L257.1 192.3L255.6 194.8L256.3 196.0L255.0 197.9L253.2 199.6L249.7 199.8L248.0 201.1L247.0 200.0L246.0 198.9ZM247.9 173.6L251.0 173.0L254.6 172.1L257.8 171.0L258.4 167.5L256.4 166.8L256.0 165.1L254.2 162.7L253.2 159.9L251.7 159.4L253.2 155.5L251.0 155.0L251.4 152.6L248.9 152.6L247.8 155.5L248.2 158.7L248.9 160.7L248.9 162.4L251.0 162.4L251.7 164.9L251.4 166.1L249.6 166.3L250.0 168.4L248.6 169.6L251.0 170.5L251.7 171.0L249.9 171.4ZM241.8 170.0L244.6 169.8L247.0 168.7L247.5 166.1L248.2 163.2L247.2 161.4L244.6 161.4L243.9 163.2L241.8 163.9L242.5 166.1L241.8 168.4ZM273.8 197.5L278.2 197.1L277.5 199.8L273.8 198.2ZM267.7 192.0L269.8 191.8L269.7 195.3L268.1 195.7ZM268.2 189.1L269.5 188.1L269.5 191.0L268.5 191.0ZM289.4 201.8L293.4 202.3L293.3 202.8L289.6 202.5ZM301.9 202.6L305.2 201.6L304.4 202.8L302.9 203.5ZM329.2 106.8L332.1 111.6L337.8 112.1L336.4 103.5L334.9 99.6L332.8 99.6L330.7 104.4ZM332.8 98.6L336.4 99.1L339.2 93.5L343.5 89.1L349.9 83.3L354.1 80.3L352.0 79.0L344.2 83.3L337.8 88.0L334.2 93.5ZM271.6 59.9L278.8 57.5L281.6 59.9L284.4 65.3L286.6 70.3L282.3 76.4L280.2 81.5L275.9 76.4L272.4 68.9ZM282.3 55.8L288.7 53.3L294.4 57.5L290.1 63.0L284.4 61.5ZM391.1 65.3L398.2 72.4L405.3 68.9L402.5 61.5L395.4 53.3L391.1 48.9L386.8 57.5ZM450.8 89.1L455.1 91.9L460.8 90.8L467.9 89.7L469.3 86.3L462.2 85.1L452.3 85.1ZM455.1 98.6L459.4 99.6L458.0 96.1L455.1 96.1ZM509.9 110.3L513.4 108.1L516.3 109.4L513.4 111.2ZM322.8 55.0L330.0 57.5L335.6 55.0L341.3 53.3L345.6 48.9L338.5 42.2L330.0 48.9L322.8 50.7ZM458.0 163.7L459.4 166.8L459.8 171.4L460.8 175.2L459.4 175.8L459.1 179.0L460.1 181.5L458.0 182.2L458.0 178.0L458.0 173.6L457.5 169.1ZM454.8 189.1L455.5 191.0L456.8 190.4L456.5 189.1L459.7 190.1L462.9 187.5L462.5 185.8L459.4 185.6L457.7 183.4L457.4 187.2L455.5 187.7ZM457.1 191.4L458.0 194.8L456.5 197.5L456.5 200.2L456.2 201.6L455.1 202.8L453.4 203.3L450.8 203.5L450.6 204.0L449.1 205.4L448.0 204.0L447.3 205.0L445.2 206.2L444.4 206.6L443.0 208.8L441.9 209.6L441.2 207.9L440.5 206.2L441.6 204.9L442.3 204.2L444.4 202.3L446.6 201.9L449.4 201.6L450.6 198.9L451.3 199.6L453.0 198.4L454.4 196.6L455.1 193.8L455.1 192.3L455.8 191.6ZM428.1 218.9L429.5 219.3L428.8 221.6L427.8 223.9L427.0 222.4L427.4 220.4ZM410.6 228.0L412.4 227.0L413.9 227.4L412.9 229.2L411.7 229.7L410.6 228.9ZM369.8 242.1L371.2 243.6L372.3 245.3L371.9 246.7L370.5 247.5L369.5 246.0L369.5 243.9ZM427.4 229.2L429.8 229.4L429.5 232.2L428.8 234.4L430.2 235.9L432.4 236.6L432.4 237.9L430.6 236.6L428.8 236.3L427.4 235.4L426.7 233.7L427.1 232.2ZM429.5 246.0L431.6 243.9L434.5 242.1L435.9 243.9L435.6 246.7L434.5 247.5L433.8 247.7L432.4 246.7L431.6 245.3ZM429.5 239.5L431.6 240.3L433.8 238.1L434.8 240.3L433.8 241.7L431.6 242.4L430.2 241.7ZM422.8 243.9L426.0 240.5L425.7 239.8L423.8 242.0ZM411.0 253.9L411.7 253.2L413.9 253.6L414.6 252.0L416.7 251.0L418.1 249.5L420.3 248.2L422.1 246.0L423.4 247.0L425.5 248.6L423.8 249.9L423.4 251.7L423.8 253.2L425.2 254.6L423.5 255.3L423.1 257.4L421.7 259.6L421.0 261.3L419.1 261.8L416.7 260.7L414.6 260.7L412.7 260.0L412.4 258.1L411.3 256.7L411.0 255.3ZM391.5 248.0L394.7 248.6L395.8 250.0L398.2 252.0L400.4 253.4L403.2 256.0L404.6 258.1L406.8 260.3L406.5 264.3L404.6 264.3L402.5 262.8L400.4 260.3L398.6 257.4L396.8 255.3L395.4 252.7L393.2 250.7ZM405.6 265.7L407.5 264.5L410.3 265.3L413.6 265.1L416.3 265.8L418.8 267.1L418.8 268.4L415.3 268.0L411.0 267.1L407.5 266.6ZM419.6 267.7L422.4 267.8L425.2 267.8L428.1 268.0L430.9 267.7L430.9 268.6L426.7 268.7L422.4 268.9L419.6 268.6ZM425.2 269.6L427.8 270.0L426.7 270.7ZM431.6 270.7L433.8 268.9L436.9 268.0L435.9 269.3L433.1 270.6ZM426.4 254.9L427.8 254.2L430.9 254.7L433.8 253.7L433.1 255.4L429.5 255.4L427.4 255.6L427.0 257.1L428.8 257.3L431.4 257.1L430.9 257.7L428.8 258.6L430.2 260.6L430.9 262.4L430.2 263.5L429.2 262.4L428.1 260.3L427.2 261.0L427.2 263.8L426.0 263.8L426.0 261.0L425.0 260.0L426.0 257.4ZM437.3 253.2L438.8 253.9L438.8 256.7L437.8 256.0L437.3 254.6ZM438.0 260.3L442.0 260.6L440.9 261.3L438.0 261.0ZM442.3 257.1L444.4 256.6L446.6 257.1L446.9 259.6L448.3 260.7L452.0 258.1L456.5 259.7L461.5 261.4L463.6 263.5L465.8 264.5L466.2 266.0L467.2 268.1L470.0 270.7L468.6 270.7L465.8 270.3L463.6 267.7L461.5 267.0L460.1 268.1L459.4 269.1L456.5 269.0L454.4 267.4L452.3 267.8L453.3 266.0L452.3 263.8L448.7 262.3L445.9 261.4L444.9 261.7L443.7 260.1L445.9 259.4L444.2 259.1L442.3 258.0ZM467.2 263.8L470.0 263.8L472.5 262.0L472.2 263.1L470.0 264.8L467.9 264.8ZM470.5 259.7L472.9 261.4L473.6 262.7L472.2 261.0ZM417.7 288.1L418.4 290.4L417.4 293.5L418.4 296.7L419.6 300.8L420.6 304.1L419.6 308.0L421.7 309.2L424.5 308.9L426.7 307.3L431.6 307.3L435.2 304.6L439.5 303.4L443.0 303.2L446.6 305.3L448.7 308.9L450.1 307.5L452.0 305.3L451.6 308.3L450.8 309.5L452.6 308.0L453.0 310.2L454.4 310.9L455.8 314.5L458.7 315.4L461.5 314.9L464.1 316.5L466.5 314.1L469.3 313.2L470.0 310.1L471.2 307.1L472.9 304.6L473.9 300.8L474.5 297.8L473.9 294.3L473.3 292.7L471.5 290.9L470.3 288.9L468.6 287.6L467.2 285.3L464.4 283.5L463.6 281.3L462.8 279.1L462.5 277.3L460.5 276.6L460.1 273.9L459.0 271.5L457.5 273.9L457.2 276.8L456.5 279.8L455.8 281.4L453.7 281.3L451.6 279.1L449.4 278.0L449.0 276.6L450.6 273.6L448.7 273.2L445.9 272.8L444.4 272.3L443.0 273.6L441.6 273.9L440.2 277.3L438.5 277.4L436.6 276.0L434.5 276.8L433.1 278.8L431.6 280.8L429.9 280.8L429.8 282.5L428.1 284.4L425.2 285.0L422.4 286.1L420.3 287.0L418.6 288.1ZM461.8 319.5L464.4 320.2L466.9 319.8L466.8 322.3L465.8 324.5L463.6 324.8L462.6 322.5ZM501.6 308.2L503.5 310.1L504.6 312.4L506.0 312.2L506.3 313.8L509.2 313.8L509.6 315.4L507.7 316.9L507.7 318.2L505.3 321.2L504.6 320.6L505.2 318.5L503.5 317.2L504.3 315.4L504.5 313.2L502.5 309.7ZM501.6 319.1L503.8 320.6L502.8 322.9L501.8 325.2L499.6 326.4L498.9 329.4L497.1 331.1L495.4 330.9L492.8 329.8L493.5 327.8L495.4 325.8L497.8 323.9L499.6 321.9L500.6 319.7ZM489.2 285.3L491.4 286.6L493.5 288.5L492.1 288.1L490.0 286.6ZM353.8 336.2L356.3 336.4L355.6 337.7L354.1 337.5ZM34.1 226.7L35.6 227.3L34.6 228.5L34.1 227.6ZM36.3 156.3L39.1 154.2L39.4 155.8L37.3 157.4ZM73.5 171.9L77.5 173.2L80.4 177.1L78.2 176.5L74.7 173.6ZM66.8 164.2L68.7 164.4L69.4 168.4L67.8 166.8Z"/><path fill="#f2efe9" d="M0.0 438.2L10.5 441.7L23.6 443.8L31.4 436.9L32.7 433.6L42.0 430.5L47.2 423.5L56.3 419.6L65.6 418.0L74.7 415.4L75.9 412.4L86.5 414.4L99.6 419.1L102.3 422.3L107.4 421.2L110.1 413.4L111.4 407.6L116.6 405.2L125.7 408.0L133.7 410.4L139.0 414.4L142.8 410.4L146.8 410.4L150.6 405.2L149.3 399.9L153.3 397.4L155.9 392.2L158.6 393.0L159.9 386.9L163.8 381.1L167.7 377.1L174.2 372.6L176.1 373.5L170.4 379.1L169.0 386.9L169.8 397.4L170.8 410.4L169.0 419.6L178.2 427.5L186.0 436.9L194.0 439.6L204.4 440.3L209.6 434.3L217.5 426.3L220.2 416.9L228.0 410.4L235.8 405.2L243.8 399.9L256.0 397.2L274.3 397.0L290.1 397.4L301.8 393.0L311.0 394.6L318.9 386.9L326.7 384.3L331.9 381.8L337.2 384.3L345.0 388.3L355.6 390.2L362.1 395.4L368.6 388.3L376.6 384.0L387.0 384.0L393.5 379.8L402.8 381.1L410.6 384.3L415.9 381.8L423.7 385.0L436.8 384.0L447.3 382.2L457.8 384.3L468.2 389.5L478.7 392.2L489.2 398.7L497.6 403.9L497.1 410.4L490.5 415.9L488.0 426.3L489.2 436.9L493.2 434.9L512.0 438.2L512 512L0 512Z"/><path fill="#aad3df" d="M125.2 47.5L128.7 55.0L130.4 62.3L132.0 68.9L134.3 68.2L133.3 63.0L131.4 55.8L130.4 51.5L133.7 48.9ZM322.8 183.2L325.7 181.1L328.5 180.5L331.4 181.1L331.8 183.6L329.2 184.2L327.8 185.2L329.2 187.2L330.7 189.1L331.0 191.0L332.8 192.0L331.4 193.8L332.1 195.7L332.8 198.4L332.1 199.6L330.0 200.0L327.5 198.8L325.7 197.9L325.7 195.7L326.4 193.3L327.5 193.1L326.0 191.4L324.0 188.5L323.6 186.6L322.6 185.2ZM403.6 170.0L406.0 169.8L409.6 166.8L412.2 160.7L411.3 159.9L408.9 164.4L406.0 167.5ZM361.0 183.0L362.7 180.9L367.6 181.1L368.1 181.5L364.1 181.7L362.0 183.6ZM301.8 256.9L302.9 255.9L304.1 256.3L303.8 258.3L302.2 258.8ZM125.2 180.5L128.7 178.0L130.8 176.3L133.7 176.5L135.7 180.1L135.1 181.1L132.3 181.1L129.4 180.5L127.3 180.9ZM131.1 190.1L133.0 190.6L133.4 187.2L135.1 182.8L134.4 182.2L132.3 183.2L130.8 184.8L131.3 187.2ZM135.5 182.4L137.2 181.7L140.1 182.2L142.2 184.6L140.1 185.2L139.8 187.5L138.7 188.1L137.5 186.2L137.2 183.8ZM137.4 190.6L138.7 191.2L142.2 189.7L143.8 188.5L142.9 188.3L140.1 188.9L138.0 189.9ZM142.5 187.5L145.1 187.5L147.6 187.0L147.5 185.8L145.8 186.4L143.2 186.8ZM115.2 164.9L116.6 164.6L119.0 172.5L118.0 172.8L116.6 169.1ZM78.2 129.1L83.9 126.2L88.2 128.0L86.8 132.2L83.2 133.2L81.1 130.9ZM89.6 145.8L92.4 141.6L98.1 140.4L100.3 140.7L97.4 142.8L93.9 145.8L91.0 146.4ZM299.0 148.7L300.5 144.3L302.9 145.8L302.5 148.1L300.8 149.0ZM305.1 145.8L306.5 140.7L307.9 142.2L307.2 145.8L305.8 146.1Z"/><path fill="none" stroke="#d3b7d1" stroke-width=".58" stroke-linejoin="round" d="M55.5 116.2L55.5 147.8L58.3 148.7L60.4 151.5L63.3 149.5L66.1 152.9L68.6 157.6L71.1 159.4L70.8 161.9M81.1 175.8L120.6 175.8L121.2 175.2L125.2 177.1L128.7 178.0L130.1 177.3L135.4 180.5L135.8 181.1L137.2 182.2L138.7 183.6L138.8 188.1L138.0 189.7L138.7 190.6L143.6 188.5L143.6 187.4L146.8 187.0L149.3 184.2L154.3 184.2L155.3 183.6L156.4 181.1L157.6 179.2L159.3 179.5L159.6 182.6L160.7 184.2M89.5 207.1L92.7 206.9L98.1 209.1L102.1 209.1L102.1 208.3L104.5 208.3L107.4 211.7L109.5 212.9L110.2 211.6L112.4 212.1L114.5 215.3L116.2 217.5L117.8 217.8M124.9 235.2L124.9 234.0L125.6 232.8L127.4 232.8L126.6 231.2L126.6 230.3L129.1 230.3L130.4 229.2M129.1 230.3L129.1 233.1L129.6 233.1M130.6 233.4L129.1 234.6L128.9 235.3L127.9 236.2M128.9 235.3L130.1 236.0L131.1 236.8M131.8 237.4L132.7 236.2L134.0 235.9L135.4 234.7L137.7 234.4M134.1 240.1L135.5 240.3L137.0 240.4M138.1 244.4L138.1 243.0L138.5 242.3M145.9 243.6L146.2 244.7L145.2 245.7M154.0 227.4L154.0 229.1L153.9 230.0M154.6 239.1L152.9 240.3L152.2 242.4L153.0 244.0L153.6 245.7L155.7 246.0L157.2 247.3L160.0 247.2L159.6 249.6L160.3 251.0L159.6 252.0L160.7 254.3M160.7 254.3L159.3 253.4L156.7 253.6L157.6 255.1L156.4 256.0L157.2 257.4L156.6 262.0M156.6 262.0L155.7 261.4L152.9 259.4L151.5 258.1L148.9 256.1M148.9 256.1L147.2 255.6L145.8 255.0L143.9 254.0M148.9 256.1L148.6 258.1L146.8 259.7L144.6 260.8L144.1 262.5L142.9 263.1L141.7 262.3L141.8 260.8M156.6 262.0L152.5 263.3L151.0 265.7L152.2 269.1L153.3 270.3L155.6 269.6L155.6 271.7L157.0 271.6M157.0 271.6L158.3 273.9L157.9 276.8L157.4 278.3L157.9 279.8L157.2 281.3M157.2 281.3L155.9 282.5M157.2 281.3L158.6 283.5L158.6 285.8L159.4 289.3L160.4 289.3M157.0 271.6L159.3 271.3L163.0 269.9L163.1 272.5L164.3 273.8L166.7 274.6L169.2 275.4L170.4 277.6L170.4 279.4L172.9 279.5L173.2 281.3L174.2 282.0L173.5 284.7L173.2 285.3M173.2 285.3L171.9 284.0L168.2 284.4L167.0 288.4M167.0 288.4L164.6 289.3L163.3 288.2L161.8 287.8L160.4 289.3M160.4 289.3L158.9 292.0L158.6 295.1L156.9 298.3L156.4 301.6L156.2 305.8L156.4 308.3L155.7 311.3L154.7 315.4L154.0 319.1L153.9 323.9L154.2 328.8L152.9 334.0L151.8 338.4L153.2 341.7L153.7 342.9L157.2 343.3L158.7 343.8M158.4 344.5L158.4 349.8M167.0 288.4L169.2 290.9L172.4 292.4L174.1 293.5L172.8 296.2L175.9 296.5L178.3 293.7M173.2 285.3L173.8 288.2L176.6 288.5L177.1 291.2L178.8 291.2L178.3 293.7M178.3 293.7L179.5 295.1L179.5 296.2L176.6 298.0L174.1 301.1M174.1 301.1L176.4 302.1L178.5 303.2L180.1 305.3L180.1 307.0M174.1 301.1L173.2 304.9L172.9 307.5M170.7 243.9L169.2 246.0L168.8 247.5L169.7 248.6M169.7 248.6L166.7 250.3L164.7 250.2L165.0 252.4L162.8 254.9L160.7 254.3M169.7 248.6L170.7 248.9L170.8 249.6L171.2 250.4L170.8 252.7L172.1 254.2L173.5 253.9L174.9 253.2L175.6 253.3M174.6 247.5L174.5 248.6L173.5 250.3L174.2 251.3L175.6 253.3M175.6 253.3L176.5 252.4L178.3 252.7M179.2 247.7L178.6 249.6L178.3 252.7M178.3 252.7L180.6 252.9L181.3 252.3L182.5 250.2M252.9 202.6L253.6 205.4L254.3 207.4L251.7 208.3L250.7 209.8L248.5 211.2L246.0 212.1L243.6 213.4L243.6 215.6M243.6 215.0L237.2 215.0M243.6 215.6L243.6 217.7L238.9 217.7L238.9 221.6L237.5 222.4L237.5 225.0L231.8 225.0M243.6 215.6L249.2 219.3L257.7 225.3L257.7 225.9L260.6 227.3L262.0 228.3L273.1 221.6M268.2 199.5L267.8 202.8L266.7 204.7L268.8 207.8L269.5 210.9M269.5 210.9L270.6 208.3L272.4 207.1L272.4 205.9M269.5 210.9L270.1 213.7L269.9 216.9L270.2 219.6L273.1 221.6M273.1 221.6L276.2 223.0L277.3 222.4L290.1 227.7M291.6 208.4L291.6 223.9M290.1 227.7L290.1 227.0L291.6 227.0L291.6 223.9L308.5 223.9M290.1 227.7L290.1 233.4L288.6 233.4L288.0 235.9L287.3 237.9L288.6 240.3M277.3 222.4L278.6 226.4L278.0 231.6L275.3 236.3M275.3 236.3L273.1 237.1L269.5 237.6L266.0 237.4L262.0 236.6L261.1 239.2M262.0 228.3L262.0 231.8L261.0 233.8L257.4 234.4L256.3 234.4M256.3 234.4L257.4 236.8L259.1 238.2L261.1 239.2M256.3 234.4L253.2 235.6L250.3 236.9L248.2 241.0M249.2 219.3L246.8 219.3L248.0 232.2L248.5 233.7L242.5 233.8L239.6 233.5L238.6 234.7M238.6 234.7L236.8 232.6L235.4 232.1L232.5 232.9M238.6 234.7L239.8 238.2M239.8 238.2L243.2 238.5L244.3 241.0L244.6 241.4L247.5 241.3L248.2 241.0M239.8 238.2L236.5 237.9L234.4 237.9L232.2 238.2M236.5 237.9L236.5 239.2L234.7 240.3M237.1 243.1L238.4 241.8L240.4 241.7L240.9 243.0L241.4 243.9L239.6 246.2M241.4 243.9L242.6 245.2L243.9 245.2L244.2 246.9L245.5 248.2L245.3 249.7M243.9 245.2L244.6 243.9L244.6 241.4M252.0 248.7L251.4 246.7L252.2 242.4L252.0 240.3M248.2 241.0L252.2 241.8M252.0 240.3L256.0 240.1L256.7 243.1L256.9 245.3L257.7 247.3M257.3 240.3L258.3 243.1L258.3 247.2M261.1 239.2L261.3 241.4L259.8 244.6L259.8 246.9M257.3 240.3L259.1 238.2M276.2 238.1L275.2 240.5L273.1 243.9L272.4 246.3L270.2 246.2L268.2 249.2M275.3 236.3L276.6 237.6L277.5 240.3L278.0 241.7L276.2 241.8L278.0 245.3M278.0 245.3L276.6 247.5L277.3 250.3L279.0 252.9M269.9 252.7L272.1 252.9L274.8 252.9L279.0 252.9L279.0 253.6M269.9 254.6L272.1 254.6L272.1 252.9M274.9 252.9L274.8 254.2L276.5 254.2L276.6 256.7L275.8 259.4L273.8 259.3L272.8 261.3L271.8 261.6M278.0 245.3L280.2 245.0L282.5 244.4L283.0 243.1L285.0 243.0L286.9 240.8L288.6 240.3M288.6 240.3L289.7 243.6L291.8 244.9L293.7 247.5L295.0 248.7M279.0 252.9L279.6 251.0L282.5 251.0M282.5 251.0L282.5 249.9L283.7 248.7L287.9 250.2L290.8 248.9L295.0 248.7M282.5 251.0L281.7 253.2L281.3 256.4L279.5 258.6L278.8 260.3L277.6 262.1L276.5 263.0L275.1 262.8L274.5 262.5L273.8 263.1L273.4 264.1M289.7 243.6L291.6 241.3L295.8 242.4L298.0 241.7L300.1 242.0L302.2 238.8L303.2 238.5L302.9 241.4L304.5 242.4M304.5 242.4L304.8 240.8L305.8 239.1L307.3 237.8L307.9 235.4L308.6 231.5L310.9 230.0M307.9 235.4L310.0 234.9L312.9 235.2L315.0 236.6L316.3 238.1M316.3 238.1L315.4 240.3L317.0 240.4L317.4 239.5M317.0 240.4L317.9 242.4L318.6 243.1L322.8 244.6L324.3 244.6L320.0 248.9L317.9 249.2L315.7 250.2L314.3 250.4M314.3 250.4L312.2 251.0L310.0 250.9L307.9 249.7L307.1 249.5M315.6 250.4L314.3 251.9L314.3 257.3L315.2 258.4M304.5 242.4L304.6 243.9L302.9 244.9L305.1 246.4L307.1 249.5M307.1 249.5L304.4 250.0L302.9 250.6L300.1 250.7L299.8 251.0M299.8 251.0L298.0 249.6L295.0 248.7M304.4 250.0L305.1 251.7L305.8 253.6L304.5 255.4L304.2 257.4M304.2 257.4L309.5 260.3L309.6 261.0L311.8 262.7M299.8 251.0L300.1 252.9L298.7 254.6L298.2 256.7L298.1 258.0M298.1 258.0L299.4 257.4L304.2 257.4M298.1 258.0L297.2 259.8L297.5 262.3L298.1 265.3L299.8 267.7M299.4 257.4L299.8 259.4L298.7 262.1L297.8 262.3M297.2 259.8L298.5 259.6L299.8 259.4M299.8 267.7L302.8 269.4L304.4 269.6L305.2 272.6L307.9 272.8L310.8 272.2L313.5 271.0M299.8 267.7L296.5 268.9L296.8 273.2L298.4 275.2L295.8 273.8L293.0 273.0L290.7 272.2L290.1 271.6M273.4 264.4L274.8 264.4L279.6 264.4L280.2 266.7L283.6 267.3L284.4 266.0L287.0 266.4L287.3 269.6L287.3 271.7L290.1 271.6M290.1 271.6L290.1 274.6L287.3 274.6L287.3 279.4L289.3 281.4M272.8 281.0L275.9 281.1L282.2 281.1L286.4 282.0L289.3 281.4L292.0 281.7M285.9 282.5L285.9 288.1L284.4 288.1L284.4 292.4L284.4 298.2L283.7 298.6L281.6 299.0L280.2 297.7L279.5 298.5M284.4 292.4L285.4 295.6L287.3 295.3L288.7 293.2L292.3 293.8L294.3 290.7L297.8 288.4M297.8 288.4L295.4 285.8L293.3 284.1L292.0 281.7L294.4 281.9L297.1 279.1L299.2 278.5M299.2 278.5L302.6 280.1L302.9 282.0L302.8 284.3L302.2 287.0L300.5 288.7M297.8 288.4L300.5 288.7L301.5 292.0L301.5 294.3L302.8 295.6M294.4 300.1L296.5 298.5L297.8 299.9L296.5 301.7L295.0 301.3L294.4 300.1M300.1 294.3L301.5 294.3L301.7 295.6L300.5 296.4L299.8 295.4L300.1 294.3M302.8 269.4L303.4 271.5L303.2 273.9L302.5 275.5L303.2 276.1L299.0 277.3L299.2 278.5M303.2 276.1L305.1 276.8L307.1 279.1L306.2 280.7L304.8 279.1L305.2 272.6M243.5 190.3L244.3 190.1L246.6 190.3L247.2 191.0L246.2 193.5L246.0 194.6L245.3 194.8L246.0 197.1L245.5 198.9M253.4 187.4L257.0 188.5L260.6 189.3M266.7 186.6L266.0 185.8L266.0 182.4L265.7 182.2L264.7 181.7L266.0 179.2L266.8 178.8L267.7 175.8L265.1 174.7L262.8 173.6L262.0 173.0L259.7 171.2M260.8 170.5L263.1 170.5L264.5 171.9L264.5 169.6L266.0 168.2L266.2 166.3M264.5 171.9L264.8 173.4L265.1 174.7M268.2 162.2L270.1 162.4M276.2 164.6L276.5 167.3L276.9 169.1L277.3 171.4L277.0 171.6L273.4 173.0L275.6 176.3L274.5 177.3L274.5 179.0L270.9 179.0L269.7 179.0L266.8 178.8M266.0 182.4L268.1 181.7L268.8 182.6L270.8 181.1L273.4 180.1L275.5 181.1L278.9 180.3M269.7 179.0L269.7 180.1L270.8 181.1M275.6 176.3L277.3 175.8L280.0 176.7L280.3 178.0L278.9 180.3M275.5 181.1L275.3 183.0M277.0 171.6L279.5 173.2L282.7 174.7L284.4 175.4L288.1 175.6L290.1 172.3L289.6 170.3L289.6 167.7L290.0 164.6L289.4 163.9L288.4 163.4L284.2 163.4M288.4 163.4L288.4 162.2L286.3 161.2M282.7 174.7L280.0 176.7M280.3 178.0L282.7 178.4L285.2 176.9L287.4 177.1L288.1 175.6M287.4 177.1L288.6 178.0L286.2 181.7L284.9 181.9L282.9 182.4L280.2 182.2L278.9 180.3M288.6 178.0L291.4 178.6L293.8 177.3L296.1 180.9L296.1 183.2L298.2 183.8M293.8 177.3L297.2 178.0L298.7 181.3L296.1 183.2M288.3 185.8L291.6 186.8L294.4 186.0L296.7 186.8M284.9 181.9L286.4 184.6L288.3 185.8L287.9 188.1L287.9 189.5L288.7 191.4L291.6 191.4L293.4 190.6L295.8 190.1M293.4 190.6L293.1 192.5M284.4 194.4L285.7 192.2L288.7 191.4M283.6 190.3L285.3 190.1L285.3 192.0L285.7 192.2M275.3 183.2L278.3 182.6L279.5 181.1M278.5 183.8L280.2 183.8L283.0 184.4L283.7 186.6L283.0 187.5L282.3 189.1M278.5 183.8L279.0 185.8L281.0 188.1L282.3 189.1M283.0 184.4L283.2 182.4M283.0 187.5L284.9 188.5L285.3 190.1L286.7 189.5L287.9 189.5M284.9 188.5L286.2 187.7L286.7 189.5M289.6 170.3L294.4 170.3L299.4 170.5L301.2 168.9L304.4 170.3L306.5 172.8L310.0 173.9L312.9 174.5L312.5 178.2L310.3 179.9M301.2 168.9L300.5 166.3L302.2 165.1L299.9 161.9L299.4 159.9L296.1 159.2M289.4 164.4L292.6 163.9L293.8 160.7L296.1 159.2L295.4 155.8L295.0 155.3L295.1 152.0L295.8 150.4M295.0 155.3L292.3 154.2L290.6 154.5M285.9 159.2L288.7 158.7L291.6 158.7L293.8 160.2M295.5 147.3L298.0 144.3L300.8 140.0L298.7 136.5L298.7 130.9L297.2 126.6L298.7 123.7L296.5 121.8L297.1 118.6L299.8 115.4M297.1 118.6L297.7 116.6L295.8 114.6L293.0 115.8L291.6 120.2L287.9 119.8L285.3 118.2M285.3 118.2L289.7 122.9L289.4 126.2L290.4 130.5M285.3 118.2L281.6 120.6L279.2 124.4L276.6 129.5L275.5 134.6L273.4 138.2L273.2 143.7L274.2 144.9L273.4 148.7L272.8 150.7L272.2 151.8M245.6 161.9L244.6 163.2L247.0 164.2M315.0 191.0L317.9 191.8L318.2 193.6L319.7 194.4L319.1 196.8L319.7 198.9M319.7 198.9L316.3 199.1L312.9 199.6L310.0 199.6L308.2 199.8L307.5 201.2M312.9 187.4L316.4 187.7L319.3 188.7L322.0 190.3L324.0 191.6L325.1 190.4M317.9 191.8L320.0 191.4L322.0 190.3M320.0 191.4L320.7 192.7L321.4 194.6L322.1 195.9M319.7 194.4L322.1 195.9L324.3 194.8L325.5 196.8M316.3 199.1L314.6 203.1L314.3 203.8L311.2 205.6L308.3 207.4L306.8 206.7M306.8 206.7L307.1 205.6L308.1 204.2L307.2 203.5M311.2 205.6L311.8 207.6L308.6 208.8L310.0 210.4L309.3 211.2L307.3 212.5L305.8 212.2M304.8 209.1L305.6 212.1M305.8 212.1L306.5 208.8L306.6 206.7M311.8 207.6L313.5 208.1L315.7 209.4L319.6 212.5L322.1 212.7L323.8 213.7L324.8 213.7M322.1 212.7L323.4 211.1L324.3 211.2M319.7 198.9L320.6 201.1L321.6 202.6L320.7 204.5L321.6 206.2L324.0 208.3L323.8 209.6L325.1 211.4M316.9 232.4L317.4 230.9L318.9 230.9L322.4 231.0L323.6 231.3L325.7 229.1L330.0 228.5L334.2 227.0L335.2 223.9L334.5 222.8L330.8 222.5L329.4 220.7M334.5 222.8L335.4 220.8L335.8 219.7L336.2 219.4M330.0 228.5L331.5 232.1M333.9 198.6L335.9 197.3L337.5 197.1L339.2 198.0L340.3 198.4L341.9 200.0L343.0 200.0L343.0 201.8M343.0 201.8L342.2 204.0L342.6 205.4L342.2 206.2L342.6 208.8L343.9 208.9L343.9 209.9L342.6 211.6M342.6 211.6L343.9 213.5L345.3 214.2L345.3 215.8L345.9 216.7L343.6 218.9M342.6 211.6L344.9 212.2L347.2 212.2L350.3 211.4L350.4 209.6L351.7 209.3L353.0 208.3L354.6 208.1L354.8 206.2L356.0 205.6L355.4 204.5L357.1 204.4L357.8 202.1L357.4 201.1L359.1 199.6L362.5 198.9M343.0 201.8L344.6 202.3L345.7 201.4L347.7 200.5L349.3 198.8L350.6 198.6L352.4 198.9L352.7 199.3L354.6 199.1L355.8 198.2L356.1 197.3L357.4 197.5L357.8 199.8L360.2 198.4L362.5 198.9M353.0 221.3L355.6 220.5L357.0 220.2L356.1 218.2L355.6 216.1L356.6 214.8L358.7 214.5L359.8 212.9L361.1 211.2L362.2 209.6L362.0 206.6L361.2 205.9L361.2 203.3L364.1 202.8L366.6 201.9M362.5 198.9L364.1 201.1L366.6 201.9M366.6 201.9L368.4 203.8L368.1 206.2L368.8 206.9L367.9 209.1L369.5 209.8L371.2 210.9L372.8 211.1L375.6 213.0L378.3 214.5L381.3 214.7M371.2 210.9L369.9 213.2L372.6 214.7L374.5 215.5L376.9 216.7L379.7 216.9L381.3 217.0L381.3 214.7L382.4 215.6L383.7 214.2L386.3 214.8L389.0 213.4L391.1 212.5L393.2 213.8L394.4 214.2M382.4 215.6L383.9 216.6L387.0 216.3L386.3 214.8M394.4 214.2L392.5 215.8L391.4 216.9L390.5 219.3L389.8 221.0L388.7 221.0L388.7 223.6L387.7 225.0L387.3 225.9M381.3 217.0L382.3 217.2L383.7 217.8L383.7 218.8L387.4 219.3L387.1 220.5L385.7 221.3L386.3 222.4L387.3 221.3L387.7 225.0M381.4 218.0L381.3 220.0L382.2 220.7L382.4 222.5L382.7 224.2M394.4 214.2L396.4 215.3L396.4 217.8L394.8 219.6L395.1 221.0L396.8 222.2L397.4 223.8L398.4 224.7L399.9 224.8M399.9 224.8L400.8 223.3L401.8 222.8L403.8 223.0L405.8 221.9L407.8 222.7L407.6 223.9L409.6 224.7M398.4 224.7L398.4 226.5L396.7 227.4L395.1 229.2L395.1 230.7L396.2 232.5L395.7 234.1L397.1 236.6L397.1 239.1L396.4 241.3M398.4 226.5L398.9 227.7L399.9 227.7L399.9 230.7L401.4 230.0L403.9 229.5L405.0 230.9L405.0 232.4L406.2 233.7L406.0 235.3M406.0 235.3L402.5 235.4L401.8 236.6L402.2 238.8L402.3 239.2M408.9 234.9L408.9 238.1L406.8 239.2L406.6 240.3L404.6 241.1M401.4 223.3L402.8 225.7L404.8 226.0L403.9 227.7L405.6 229.1L407.6 231.8L408.9 234.4L408.9 234.9L406.0 235.3M398.4 246.9L399.8 247.9L401.2 247.2M411.9 253.2L412.9 254.7L415.1 254.6L416.7 253.9L419.0 253.9L420.7 249.9L423.1 250.0M456.5 259.7L456.5 269.0M432.5 269.4L433.8 269.1L434.1 269.7M325.7 181.5L324.0 178.4L322.1 177.1L322.8 173.9L325.0 174.1L325.3 172.3L328.2 169.8L332.1 170.3L333.5 171.6L337.1 171.4L339.3 171.4L341.2 172.3L343.5 171.9L341.3 169.4L342.8 168.4L342.8 164.9L348.4 163.4L353.0 161.9L354.1 160.9L356.7 161.2L357.3 164.2L360.5 164.4L361.0 165.6L364.8 163.9L366.8 166.1L369.8 171.9L374.0 171.4L377.3 174.5L380.2 175.4M380.2 175.4L378.0 177.1L377.6 179.9L374.0 179.7L373.0 183.2L369.8 184.2L370.9 187.7L370.1 189.7M370.1 189.7L368.4 188.5L363.7 188.1L361.2 187.7L360.5 189.3L357.0 188.9L356.8 189.7L354.1 191.4L352.7 192.0L350.6 191.6L349.9 188.1L348.3 186.8L344.0 187.2L342.8 185.4L339.3 183.0L335.6 184.2L335.6 191.4L333.5 190.1L330.5 190.4M335.6 191.4L337.1 191.4L339.2 188.7L341.3 189.7L341.5 191.2L344.0 191.8L345.6 194.4L347.7 195.9L350.6 198.6M352.4 198.9L353.1 197.1L352.3 194.6L356.1 193.1L356.8 189.7M356.1 193.1L358.0 194.9L360.8 194.8M380.9 175.4L383.6 174.1L386.8 172.1L390.4 173.6L395.1 174.1L395.8 172.5L395.4 169.1L398.1 169.6L401.4 170.7L401.5 172.3L403.5 173.2L406.8 172.8L408.9 174.1L412.4 175.4L417.4 173.4L422.0 174.1M380.9 175.4L382.3 177.8L385.3 180.9L385.3 183.8L389.0 184.4L391.7 185.6L393.1 188.7L398.2 188.9L400.4 189.1L405.3 190.8L411.7 189.3L415.0 186.8L415.1 184.0L417.7 184.6L421.8 181.5L426.4 180.7L423.1 178.6L420.3 178.6L422.0 174.1M422.0 174.1L426.4 173.0L425.5 171.4L427.8 167.7L427.1 166.1L431.8 165.6L434.8 166.8L437.5 173.2L441.6 176.0L442.3 178.6L447.6 177.3L445.3 184.0L442.6 184.2L442.6 187.2L441.7 189.3M441.7 189.3L440.6 188.1L438.0 190.1L436.5 190.4L432.9 193.8M435.3 198.0L436.9 197.0L438.6 196.4M370.1 189.7L367.5 191.2L365.4 192.0L362.5 192.9L360.8 194.8L361.0 196.4L362.5 196.8L362.5 198.9"/></g>
<g transform="translate(748 0)"><path fill="#f2efe9" d="M17.1 131.2L19.2 121.4L24.2 118.6L28.4 112.5L33.4 109.0L39.8 111.2L45.5 113.3L52.6 114.6L55.5 116.2L61.2 118.6L65.4 116.6L71.1 114.6L74.0 112.5L78.2 114.6L79.6 117.0L85.3 116.6L92.4 119.8L92.4 123.3L99.6 123.3L102.4 121.8L106.7 121.0L110.9 123.3L116.6 122.5L119.5 121.4L120.2 116.6L121.6 106.8L124.4 114.6L126.6 117.4L128.0 120.6L130.8 122.5L133.7 124.4L134.4 116.6L139.4 115.4L140.4 120.6L139.4 126.2L136.5 128.8L133.7 129.8L132.3 133.2L130.8 136.5L126.6 138.2L123.7 142.8L121.6 148.7L121.6 152.0L124.4 156.9L128.0 156.9L132.3 159.4L135.1 161.2L139.0 161.7L139.4 166.8L140.8 169.1L142.2 171.0L143.6 170.3L144.1 168.0L143.6 164.4L142.9 161.9L145.8 159.4L147.2 155.5L145.1 152.3L145.8 148.7L145.1 141.9L149.3 141.9L152.2 142.8L153.6 144.3L156.4 145.8L157.2 151.5L159.3 153.4L162.1 152.0L163.6 147.8L165.0 150.1L167.1 154.2L168.5 158.2L170.7 161.2L174.2 163.2L176.4 166.8L176.8 169.1L174.9 170.3L172.1 172.5L167.8 173.2L163.6 173.2L160.7 174.7L157.9 176.9L155.0 180.1L157.9 178.4L160.7 175.8L164.3 175.8L164.3 177.3L162.1 178.0L163.6 180.1L164.3 181.7L166.4 182.2L168.5 182.8L170.7 180.1L170.7 182.4L169.2 183.6L166.4 184.8L164.3 186.2L162.6 187.2L161.8 185.6L163.6 183.8L162.1 183.8L160.7 184.2L159.3 185.4L156.4 186.8L155.4 188.7L156.4 190.4L154.6 191.0L151.5 192.0L150.8 192.9L150.5 194.8L149.3 196.0L148.6 197.5L147.9 199.3L148.2 201.1L147.2 203.1L145.1 204.7L143.6 205.9L141.1 207.9L140.4 210.4L141.5 214.0L142.2 216.4L141.8 218.8L140.8 218.9L139.7 217.2L138.4 214.8L138.2 212.9L136.5 211.2L134.7 211.7L133.0 210.6L130.8 210.7L128.7 210.9L129.0 212.5L127.3 212.5L125.2 211.9L122.3 211.9L120.5 213.0L118.0 214.8L117.6 217.7L117.0 220.8L116.9 223.5L117.8 225.9L119.5 228.2L120.9 229.1L122.3 229.5L125.2 229.1L126.6 228.5L127.3 226.2L128.0 225.1L130.8 224.5L132.3 224.8L132.3 226.5L131.3 229.2L130.6 230.7L129.7 232.9L130.8 233.2L133.7 233.1L136.1 233.2L137.5 234.4L137.2 237.4L137.0 239.5L137.2 241.0L138.7 242.7L140.1 243.3L142.2 242.9L143.6 242.4L145.8 243.6L146.5 244.6L145.8 245.6L144.6 244.3L142.9 243.3L141.8 244.2L141.8 245.4L140.1 244.9L138.2 244.3L137.2 243.9L135.1 241.7L134.0 240.5L132.3 238.1L131.3 237.1L128.7 236.6L126.6 235.9L124.4 234.7L122.3 232.8L120.2 233.2L118.0 233.2L115.2 232.2L111.6 230.7L108.8 229.5L106.7 227.7L105.8 226.2L106.2 224.7L105.2 222.4L103.1 220.0L101.0 218.2L100.3 216.1L98.1 214.5L96.3 212.9L95.3 209.6L92.9 208.4L92.9 210.4L94.6 212.9L96.0 215.3L97.7 217.7L98.8 220.0L100.3 221.9L99.6 222.5L98.1 220.8L96.4 219.3L96.0 217.2L93.9 215.8L93.2 214.5L92.4 212.5L91.0 210.4L89.6 207.1L87.8 204.9L86.0 204.0L84.5 203.5L82.8 200.2L81.8 198.0L79.9 194.8L79.2 193.1L79.4 190.1L79.5 186.2L79.6 181.7L78.6 177.3L81.1 177.6L81.8 179.5L81.5 175.8L80.4 174.7L78.2 172.5L75.4 171.4L74.0 168.0L71.8 165.1L70.7 162.7L69.0 160.7L67.6 158.2L65.4 154.2L63.3 151.5L60.4 152.3L57.6 149.3L54.0 148.7L51.2 148.1L48.4 146.4L45.5 146.4L44.8 148.7L42.7 150.4L40.1 150.9L40.5 147.3L42.7 145.2L40.5 145.8L38.4 148.7L37.3 151.5L36.3 154.2L33.4 156.9L30.6 159.4L27.7 160.9L24.9 162.4L21.8 163.2L24.2 161.2L27.0 159.7L27.7 159.4L30.6 156.9L32.0 152.3L29.9 152.3L27.0 152.3L25.6 150.7L25.6 148.7L22.8 147.3L20.9 145.8L19.9 142.8L21.6 139.7L24.2 138.8L27.0 137.2L27.0 134.6L24.9 134.9L22.0 134.9L19.2 133.2ZM168.8 127.7L166.4 133.2L164.3 139.1L162.1 142.8L158.6 137.5L161.4 139.7L162.8 134.9L159.3 128.8L160.7 133.2L156.4 140.7L153.6 137.5L150.8 135.2L146.5 135.6L145.1 133.9L146.5 131.9L150.8 131.5L151.5 128.0L152.9 124.4L150.8 120.6L147.2 117.9L144.4 114.6L140.8 114.6L135.8 114.6L133.7 113.3L130.8 112.5L129.4 110.3L128.0 103.5L128.7 97.6L133.7 97.1L135.8 100.1L139.4 97.6L141.5 101.1L146.5 102.1L149.3 104.4L153.6 108.1L157.9 112.5L160.0 116.6L160.7 120.6L165.0 123.3L167.8 126.2ZM169.0 36.1L163.7 29.5L154.7 27.1L147.2 27.1L141.2 31.7L133.8 37.1L127.0 41.2L125.6 46.1L121.0 47.0L118.9 55.0L120.3 63.0L123.3 68.9L127.9 71.0L130.8 69.6L132.3 75.8L130.0 77.7L127.9 82.1L133.8 83.9L141.2 82.1L144.2 79.0L145.8 75.1L148.8 70.3L149.5 64.5L152.5 59.9L156.2 55.0L160.7 49.8L164.4 45.1L167.4 40.2ZM116.6 67.5L120.3 70.3L121.0 75.1L117.3 72.4ZM126.3 88.0L129.3 85.1L133.8 86.3L141.2 86.8L142.8 89.7L141.2 92.9L135.3 92.9L129.3 91.9L125.6 91.3ZM87.5 106.3L93.4 101.6L100.8 101.6L106.1 98.1L107.7 104.0L112.1 110.8L110.6 116.6L103.1 119.8L94.9 121.0L89.7 113.7ZM76.9 101.6L79.9 94.0L86.8 94.0L91.2 98.6L85.2 105.4L80.8 109.0ZM82.2 83.9L91.2 76.4L88.9 82.1L94.9 88.0L100.8 86.3L105.4 88.0L99.4 92.9L93.4 91.3L87.5 88.0ZM107.0 81.5L112.1 80.3L116.6 83.9L115.9 89.7L111.4 89.1L108.4 86.3ZM110.6 99.6L115.9 96.6L118.9 101.6L115.9 107.7L112.1 104.9ZM120.3 96.6L127.0 95.6L126.3 101.6L122.6 106.3L120.3 101.6ZM120.2 119.4L115.2 119.4L114.5 115.8L118.8 114.6ZM132.3 131.5L135.1 129.1L137.2 130.5L140.1 134.9L141.9 137.2L138.0 136.5L134.4 139.1L132.3 137.5L133.7 134.9ZM93.4 73.8L98.7 68.2L100.1 70.3L97.1 75.8ZM106.1 63.0L111.4 66.0L114.3 72.4L110.6 71.7L107.0 66.8ZM171.7 178.8L176.4 178.8L177.1 180.5L179.9 180.9L181.0 179.0L179.9 176.9L179.6 175.2L177.1 173.6L176.6 170.3L174.9 171.4L173.8 174.7L172.1 176.9ZM193.4 149.3L187.7 145.8L184.2 139.7L182.0 133.2L179.9 126.2L179.2 116.6L183.5 116.6L183.5 114.6L178.5 111.6L177.8 105.8L175.6 96.1L172.8 88.0L166.4 83.9L159.3 85.1L155.0 79.0L152.2 71.0L159.3 61.5L163.6 57.5L166.4 47.0L173.5 37.1L184.9 33.9L192.0 30.6L202.0 22.3L213.3 21.0L221.9 30.6L227.6 39.2L238.9 44.2L230.4 57.5L229.0 68.9L229.7 82.1L227.6 90.8L229.0 96.1L224.7 101.1L224.7 108.1L224.7 112.9L219.7 113.3L223.3 115.4L219.0 120.6L213.3 122.1L209.1 125.5L204.8 130.5L199.8 131.5L197.7 136.5L196.3 141.3L194.8 147.3ZM221.4 131.5L224.0 128.4L227.6 129.8L233.2 128.0L235.4 131.5L236.5 133.9L233.2 136.5L229.0 138.5L224.7 137.2L224.0 134.9L221.9 133.6L224.7 132.2ZM135.3 224.1L138.0 222.4L141.5 222.2L145.1 223.5L148.6 225.7L150.5 226.7L145.8 227.1L146.5 226.0L144.4 224.7L140.1 223.6L137.2 223.6ZM150.2 229.4L152.5 227.1L156.4 227.3L158.7 229.1L155.7 229.7L154.0 230.4L152.9 229.5ZM144.6 229.4L147.5 229.7L146.5 230.3L144.8 230.0ZM160.4 229.2L162.6 229.4L162.4 230.0L160.4 230.0ZM146.1 243.9L147.9 242.7L148.6 241.0L150.0 240.3L152.2 239.5L154.3 238.2L154.3 240.3L153.9 242.4L155.0 241.0L156.4 239.5L156.4 238.5L158.6 240.5L162.1 240.8L164.3 241.4L167.8 240.7L169.2 242.4L170.7 243.9L172.8 246.0L174.9 247.5L177.8 247.6L180.6 248.2L182.8 249.6L184.2 253.2L184.9 255.3L187.0 256.7L188.4 257.0L192.0 258.1L193.4 259.8L197.0 260.1L200.5 261.0L203.4 262.8L205.8 263.5L206.5 266.7L205.8 269.6L203.4 272.5L201.2 274.6L200.5 277.6L200.5 281.3L199.5 284.3L197.7 288.1L194.8 289.6L192.0 290.9L189.2 292.3L187.0 294.3L186.7 298.0L184.9 300.8L182.8 303.7L180.6 307.0L178.5 308.9L175.6 308.9L173.1 307.5L174.6 310.1L175.2 311.8L173.9 314.9L170.7 316.1L167.5 316.3L167.4 319.5L163.6 320.0L165.0 322.9L163.1 324.8L162.8 327.8L160.0 329.8L162.1 333.0L162.1 334.7L159.7 337.3L158.6 339.5L157.9 341.7L158.7 343.8L158.9 346.4L161.4 348.8L163.1 349.6L160.7 350.8L157.2 350.8L153.6 348.3L150.8 345.2L149.3 341.7L148.6 337.3L148.6 333.0L150.0 329.8L151.5 325.8L152.2 321.9L151.0 318.2L151.5 314.5L152.2 311.8L153.6 308.3L154.3 304.9L154.3 300.8L154.6 297.5L155.4 294.3L155.9 290.4L156.2 286.6L155.9 282.6L154.3 281.0L151.5 279.5L148.6 277.6L147.5 275.8L146.2 273.2L144.6 270.3L143.4 267.4L142.2 265.3L140.4 263.8L140.4 262.1L141.8 260.8L142.2 259.6L140.8 259.1L141.2 257.4L142.1 255.7L142.5 254.6L143.9 253.9L144.4 252.3L145.8 251.0L145.9 248.9L145.8 246.7L145.2 245.7ZM169.2 341.7L173.5 341.3L173.5 342.9L170.0 343.6ZM247.6 201.4L248.5 201.2L251.7 202.3L253.9 202.5L256.0 201.4L258.1 200.2L260.3 199.6L263.1 199.6L266.7 199.3L269.9 198.8L271.6 199.3L271.1 200.4L271.2 201.9L271.6 203.1L270.5 204.2L271.6 205.7L273.8 206.6L274.9 206.4L277.8 207.4L278.3 208.8L280.9 209.8L283.0 210.7L284.4 209.6L284.4 207.4L286.6 206.4L288.7 206.9L291.6 208.4L294.4 209.1L297.2 209.8L300.1 208.8L301.9 209.1L302.4 211.2L302.9 213.7L304.4 216.1L305.1 218.5L306.5 220.8L306.9 222.8L308.6 225.4L309.0 228.5L310.8 230.0L312.2 233.7L314.3 235.2L316.4 237.4L317.6 238.1L317.6 239.5L319.3 241.1L321.4 240.5L324.3 240.0L327.1 239.4L329.0 239.0L328.5 241.1L327.1 244.6L325.7 247.5L324.3 249.6L321.8 252.4L319.3 254.6L316.4 257.1L314.3 258.8L312.9 261.0L312.2 263.1L311.2 265.3L312.2 267.4L312.2 270.3L313.6 271.7L313.6 274.6L313.9 277.6L312.2 279.8L309.3 281.6L307.2 283.5L305.5 285.0L306.2 288.1L306.5 291.2L302.9 293.5L302.6 295.9L301.9 298.8L300.1 300.8L298.7 302.9L296.5 305.3L294.4 307.0L292.3 307.5L288.7 307.5L284.4 308.9L282.3 307.8L281.9 304.9L280.9 301.6L279.5 298.5L277.8 295.9L277.0 292.7L276.6 289.6L275.2 286.6L273.8 283.5L272.8 280.5L273.1 277.6L274.5 274.6L275.6 271.7L274.9 269.3L273.8 266.0L273.4 264.5L273.1 263.1L271.6 261.4L269.5 259.3L268.8 257.0L269.5 254.6L269.9 252.4L269.8 250.9L268.5 249.6L266.0 249.7L264.5 249.9L263.5 248.5L262.4 247.0L260.3 246.9L258.1 247.2L256.0 248.0L253.2 249.2L251.0 248.7L248.9 248.7L245.3 249.7L243.2 248.9L240.4 246.7L238.2 245.3L237.1 243.9L236.8 242.1L234.7 240.5L233.2 238.8L232.1 236.9L231.1 234.9L232.5 232.9L232.8 230.0L233.0 227.7L231.8 225.4L233.2 221.6L234.7 220.0L235.4 217.7L237.5 215.0L239.6 213.7L241.8 212.1L242.2 209.6L243.2 207.1L245.3 205.2L246.8 203.7ZM326.1 273.2L327.5 278.3L326.4 281.3L325.0 285.8L323.6 290.4L322.8 292.7L320.4 293.7L318.6 292.0L317.6 288.9L319.0 285.0L318.6 281.3L319.3 279.4L322.1 278.3L324.3 275.4ZM243.2 199.3L242.5 196.2L243.5 192.9L243.5 190.1L242.9 187.7L244.6 186.8L248.2 187.0L251.0 187.2L253.4 187.4L254.3 184.8L254.4 182.2L252.9 179.7L249.6 178.2L249.3 177.1L251.7 176.3L253.7 176.5L253.4 174.3L254.6 175.0L256.3 174.7L258.1 173.4L258.4 171.6L260.3 170.7L261.7 169.1L262.8 166.8L264.5 165.8L266.0 165.8L267.8 165.1L268.4 163.7L268.2 160.7L267.5 158.2L268.1 156.6L270.9 155.0L270.6 158.2L270.2 160.7L269.9 162.4L271.6 164.4L273.8 163.4L275.9 164.4L278.8 163.7L282.3 162.7L284.2 163.4L285.9 161.4L285.9 157.4L286.9 155.3L288.1 155.0L289.0 156.6L290.4 156.6L290.7 153.4L289.4 150.9L292.3 150.1L295.8 150.1L299.0 149.0L296.5 147.3L293.0 147.5L288.7 149.0L286.6 147.0L286.3 143.4L286.6 139.7L288.7 136.5L291.8 132.2L290.8 130.5L287.6 130.9L286.3 134.9L285.2 137.5L282.3 140.4L280.6 143.7L280.5 147.0L282.7 149.3L281.3 152.0L279.6 154.7L279.3 158.2L276.6 159.4L276.2 160.9L274.5 160.9L274.1 158.9L272.8 155.0L271.9 151.5L271.1 149.8L269.5 152.0L267.4 153.9L265.2 153.9L263.8 151.5L263.1 147.3L263.1 142.8L265.2 140.4L268.1 138.2L270.9 134.9L273.1 131.5L274.5 126.2L276.6 122.5L279.5 118.6L283.0 114.6L287.3 112.5L292.3 109.9L295.8 110.3L300.1 113.3L298.7 115.8L302.9 117.0L307.2 118.2L312.9 122.5L314.7 126.2L313.6 128.8L310.0 129.8L305.8 128.0L302.9 127.3L305.1 131.5L305.5 134.9L308.6 135.2L310.0 133.9L312.9 134.6L313.6 130.5L316.4 128.4L318.6 129.1L318.9 124.4L317.9 120.6L321.4 121.8L322.1 126.2L324.3 123.7L327.1 121.8L331.4 120.6L333.5 121.8L337.1 120.2L340.6 120.6L342.0 115.8L347.0 117.4L349.9 118.6L352.7 120.6L354.1 118.6L351.3 115.8L351.3 110.3L353.4 103.5L355.6 100.1L359.1 102.1L359.4 110.3L358.4 117.4L359.1 122.5L360.5 127.0L361.2 122.5L360.8 116.6L362.0 110.3L362.7 103.5L365.5 105.8L369.8 105.8L370.5 98.6L376.9 97.1L379.7 90.8L385.4 86.8L391.1 84.5L398.2 82.1L404.3 74.5L408.2 79.0L415.3 82.1L417.4 88.0L412.4 93.5L415.3 97.1L419.6 97.6L425.2 100.6L430.9 97.6L436.6 99.1L435.9 103.5L440.2 110.3L442.3 111.2L445.2 108.1L450.8 108.1L455.1 103.5L462.2 104.4L469.3 107.2L473.6 110.8L480.7 110.8L483.6 115.8L487.8 115.8L493.5 116.2L497.8 114.6L499.2 118.6L504.9 115.4L509.2 117.4L512.0 119.0L516.3 121.4L522.0 126.2L526.5 129.5L522.7 135.2L518.4 133.9L514.8 131.5L512.7 129.1L509.9 134.2L508.4 134.2L510.6 139.7L511.3 141.9L504.9 143.4L500.6 146.1L498.2 148.7L492.1 148.7L490.0 149.0L488.2 152.9L486.4 154.7L487.8 157.6L486.4 159.4L485.7 161.9L483.6 163.7L483.6 166.5L481.4 167.3L478.9 171.4L477.9 168.0L477.3 161.9L477.2 156.9L479.3 154.2L482.8 150.7L485.7 147.5L488.5 143.7L489.2 141.3L485.0 144.0L483.6 146.7L479.3 144.0L476.4 150.1L472.2 150.9L467.9 149.8L462.2 150.7L458.7 151.5L455.1 155.5L451.6 159.9L448.4 162.7L451.6 164.9L454.4 163.9L457.0 166.3L455.8 170.3L455.8 173.6L455.1 177.3L453.0 181.1L450.1 184.6L448.3 187.2L444.4 188.1L442.3 188.9L440.9 191.0L440.5 192.3L438.0 193.8L437.3 195.1L438.8 197.0L440.0 199.3L440.0 201.8L439.2 202.8L437.3 203.3L435.6 203.5L435.9 201.1L436.2 199.3L435.5 197.9L433.8 197.5L434.1 194.8L432.8 194.0L430.9 194.6L428.5 195.9L429.5 193.1L428.1 192.2L426.0 194.2L423.8 195.3L423.4 196.6L425.2 197.9L425.2 198.9L427.7 197.9L430.2 198.6L428.1 200.0L427.0 201.1L425.7 202.8L427.1 204.9L428.1 207.1L429.4 208.8L429.2 209.8L428.1 210.4L429.5 211.4L429.1 213.7L427.4 215.8L426.2 218.0L424.5 219.7L422.4 221.6L420.3 222.7L418.4 223.5L416.0 224.2L413.2 225.0L412.9 226.4L412.2 224.7L410.3 224.4L408.2 225.4L406.8 227.7L406.5 229.2L408.2 231.5L410.3 233.2L411.4 235.9L411.6 238.8L411.0 239.7L408.9 241.0L407.9 241.3L407.6 242.6L405.3 243.7L405.2 241.7L403.9 241.0L402.5 240.3L401.8 238.8L399.6 237.8L399.4 236.8L398.2 236.9L397.9 239.5L397.1 242.4L398.2 243.9L398.9 245.7L400.4 246.3L401.8 247.5L403.1 249.2L403.2 251.7L404.2 254.0L403.1 254.0L400.4 252.2L399.2 250.3L398.6 248.2L397.8 246.6L396.1 244.6L396.1 242.0L396.4 239.5L396.2 237.4L395.1 234.7L395.0 232.2L393.7 231.6L391.8 233.2L390.1 232.9L390.4 230.7L389.3 228.0L388.0 226.2L386.8 224.7L386.4 223.1L384.7 223.1L382.6 224.2L381.2 224.4L379.7 224.8L379.3 226.5L377.3 227.4L375.5 229.2L373.0 231.5L370.8 233.1L369.9 234.4L370.2 236.9L369.5 239.5L369.5 241.3L368.4 242.7L367.2 243.3L366.2 244.4L364.8 243.1L364.1 241.0L363.1 238.8L362.2 236.6L361.5 234.4L360.5 232.2L359.8 230.0L359.5 228.2L359.4 226.2L359.3 224.7L358.8 225.4L357.0 225.7L355.6 225.4L354.1 223.5L356.0 222.5L353.8 222.1L352.0 221.0L350.9 219.3L347.7 218.8L344.2 218.9L340.6 218.6L337.8 218.2L337.1 216.4L336.1 215.8L333.5 216.7L330.7 215.3L328.5 213.2L327.4 211.2L325.4 210.7L324.3 211.2L324.6 212.9L325.4 214.8L327.1 216.6L327.5 218.5L328.5 217.5L329.4 219.3L329.0 220.4L330.7 220.5L332.8 220.7L334.6 218.8L335.9 217.4L336.4 219.7L337.8 221.1L339.5 221.4L341.0 223.1L339.5 226.2L338.2 228.5L337.1 230.0L334.6 231.0L332.8 231.5L330.4 232.6L327.1 234.4L324.3 235.9L320.7 237.4L317.9 237.8L317.2 235.9L316.7 233.7L316.4 231.8L315.0 229.2L313.6 227.3L311.8 224.7L311.2 222.4L309.3 220.4L308.3 218.0L306.5 215.3L305.5 213.7L305.8 212.1L304.8 214.8L302.4 211.2L301.9 209.1L304.4 209.1L305.4 207.9L305.8 206.2L306.9 203.7L307.1 201.4L307.5 199.8L305.1 199.8L302.9 200.9L300.1 199.6L299.4 200.5L297.2 200.2L295.1 199.6L294.8 197.9L293.7 196.6L294.1 194.8L293.3 193.8L295.1 193.1L297.2 192.9L297.2 191.8L300.1 191.6L302.9 190.1L305.8 190.1L307.9 191.4L310.0 192.0L312.9 192.0L315.2 190.8L315.0 189.1L312.9 187.2L310.8 185.4L309.0 184.2L309.3 182.2L311.5 179.7L309.3 180.5L306.5 181.1L305.8 182.8L307.9 183.6L306.5 184.2L304.4 185.4L303.6 184.2L302.2 183.4L303.6 182.2L301.5 181.1L299.8 181.1L298.2 183.2L296.8 185.2L296.7 187.2L295.7 188.7L295.8 190.4L297.2 191.6L295.8 192.0L294.4 192.7L293.3 193.3L293.0 192.3L290.8 192.2L289.8 193.3L288.4 192.9L288.3 194.8L289.1 195.7L290.1 197.1L290.1 198.0L288.7 198.2L289.0 200.0L287.9 200.2L286.9 199.6L286.2 197.9L285.9 196.0L284.9 194.8L283.6 192.9L283.7 190.6L282.3 189.1L280.2 187.7L278.0 186.2L277.0 184.2L275.6 184.2L275.5 182.8L273.6 183.4L273.5 185.2L275.2 187.0L276.2 189.1L278.8 190.3L279.5 191.4L281.6 192.7L282.3 193.6L281.9 194.2L280.2 193.1L279.5 194.4L280.3 195.7L279.5 196.8L278.3 197.5L278.5 196.2L278.8 194.8L278.0 193.6L276.6 192.7L275.2 191.6L273.4 190.4L271.6 189.1L270.6 187.2L269.5 185.8L268.5 185.4L266.7 186.6L265.2 187.9L263.1 187.4L261.7 187.2L260.3 188.1L260.6 189.5L259.1 191.4L257.1 192.3L255.6 194.8L256.3 196.0L255.0 197.9L253.2 199.6L249.7 199.8L248.0 201.1L247.0 200.0L246.0 198.9ZM247.9 173.6L251.0 173.0L254.6 172.1L257.8 171.0L258.4 167.5L256.4 166.8L256.0 165.1L254.2 162.7L253.2 159.9L251.7 159.4L253.2 155.5L251.0 155.0L251.4 152.6L248.9 152.6L247.8 155.5L248.2 158.7L248.9 160.7L248.9 162.4L251.0 162.4L251.7 164.9L251.4 166.1L249.6 166.3L250.0 168.4L248.6 169.6L251.0 170.5L251.7 171.0L249.9 171.4ZM241.8 170.0L244.6 169.8L247.0 168.7L247.5 166.1L248.2 163.2L247.2 161.4L244.6 161.4L243.9 163.2L241.8 163.9L242.5 166.1L241.8 168.4ZM273.8 197.5L278.2 197.1L277.5 199.8L273.8 198.2ZM267.7 192.0L269.8 191.8L269.7 195.3L268.1 195.7ZM268.2 189.1L269.5 188.1L269.5 191.0L268.5 191.0ZM289.4 201.8L293.4 202.3L293.3 202.8L289.6 202.5ZM301.9 202.6L305.2 201.6L304.4 202.8L302.9 203.5ZM329.2 106.8L332.1 111.6L337.8 112.1L336.4 103.5L334.9 99.6L332.8 99.6L330.7 104.4ZM332.8 98.6L336.4 99.1L339.2 93.5L343.5 89.1L349.9 83.3L354.1 80.3L352.0 79.0L344.2 83.3L337.8 88.0L334.2 93.5ZM271.6 59.9L278.8 57.5L281.6 59.9L284.4 65.3L286.6 70.3L282.3 76.4L280.2 81.5L275.9 76.4L272.4 68.9ZM282.3 55.8L288.7 53.3L294.4 57.5L290.1 63.0L284.4 61.5ZM391.1 65.3L398.2 72.4L405.3 68.9L402.5 61.5L395.4 53.3L391.1 48.9L386.8 57.5ZM450.8 89.1L455.1 91.9L460.8 90.8L467.9 89.7L469.3 86.3L462.2 85.1L452.3 85.1ZM455.1 98.6L459.4 99.6L458.0 96.1L455.1 96.1ZM509.9 110.3L513.4 108.1L516.3 109.4L513.4 111.2ZM322.8 55.0L330.0 57.5L335.6 55.0L341.3 53.3L345.6 48.9L338.5 42.2L330.0 48.9L322.8 50.7ZM458.0 163.7L459.4 166.8L459.8 171.4L460.8 175.2L459.4 175.8L459.1 179.0L460.1 181.5L458.0 182.2L458.0 178.0L458.0 173.6L457.5 169.1ZM454.8 189.1L455.5 191.0L456.8 190.4L456.5 189.1L459.7 190.1L462.9 187.5L462.5 185.8L459.4 185.6L457.7 183.4L457.4 187.2L455.5 187.7ZM457.1 191.4L458.0 194.8L456.5 197.5L456.5 200.2L456.2 201.6L455.1 202.8L453.4 203.3L450.8 203.5L450.6 204.0L449.1 205.4L448.0 204.0L447.3 205.0L445.2 206.2L444.4 206.6L443.0 208.8L441.9 209.6L441.2 207.9L440.5 206.2L441.6 204.9L442.3 204.2L444.4 202.3L446.6 201.9L449.4 201.6L450.6 198.9L451.3 199.6L453.0 198.4L454.4 196.6L455.1 193.8L455.1 192.3L455.8 191.6ZM428.1 218.9L429.5 219.3L428.8 221.6L427.8 223.9L427.0 222.4L427.4 220.4ZM410.6 228.0L412.4 227.0L413.9 227.4L412.9 229.2L411.7 229.7L410.6 228.9ZM369.8 242.1L371.2 243.6L372.3 245.3L371.9 246.7L370.5 247.5L369.5 246.0L369.5 243.9ZM427.4 229.2L429.8 229.4L429.5 232.2L428.8 234.4L430.2 235.9L432.4 236.6L432.4 237.9L430.6 236.6L428.8 236.3L427.4 235.4L426.7 233.7L427.1 232.2ZM429.5 246.0L431.6 243.9L434.5 242.1L435.9 243.9L435.6 246.7L434.5 247.5L433.8 247.7L432.4 246.7L431.6 245.3ZM429.5 239.5L431.6 240.3L433.8 238.1L434.8 240.3L433.8 241.7L431.6 242.4L430.2 241.7ZM422.8 243.9L426.0 240.5L425.7 239.8L423.8 242.0ZM411.0 253.9L411.7 253.2L413.9 253.6L414.6 252.0L416.7 251.0L418.1 249.5L420.3 248.2L422.1 246.0L423.4 247.0L425.5 248.6L423.8 249.9L423.4 251.7L423.8 253.2L425.2 254.6L423.5 255.3L423.1 257.4L421.7 259.6L421.0 261.3L419.1 261.8L416.7 260.7L414.6 260.7L412.7 260.0L412.4 258.1L411.3 256.7L411.0 255.3ZM391.5 248.0L394.7 248.6L395.8 250.0L398.2 252.0L400.4 253.4L403.2 256.0L404.6 258.1L406.8 260.3L406.5 264.3L404.6 264.3L402.5 262.8L400.4 260.3L398.6 257.4L396.8 255.3L395.4 252.7L393.2 250.7ZM405.6 265.7L407.5 264.5L410.3 265.3L413.6 265.1L416.3 265.8L418.8 267.1L418.8 268.4L415.3 268.0L411.0 267.1L407.5 266.6ZM419.6 267.7L422.4 267.8L425.2 267.8L428.1 268.0L430.9 267.7L430.9 268.6L426.7 268.7L422.4 268.9L419.6 268.6ZM425.2 269.6L427.8 270.0L426.7 270.7ZM431.6 270.7L433.8 268.9L436.9 268.0L435.9 269.3L433.1 270.6ZM426.4 254.9L427.8 254.2L430.9 254.7L433.8 253.7L433.1 255.4L429.5 255.4L427.4 255.6L427.0 257.1L428.8 257.3L431.4 257.1L430.9 257.7L428.8 258.6L430.2 260.6L430.9 262.4L430.2 263.5L429.2 262.4L428.1 260.3L427.2 261.0L427.2 263.8L426.0 263.8L426.0 261.0L425.0 260.0L426.0 257.4ZM437.3 253.2L438.8 253.9L438.8 256.7L437.8 256.0L437.3 254.6ZM438.0 260.3L442.0 260.6L440.9 261.3L438.0 261.0ZM442.3 257.1L444.4 256.6L446.6 257.1L446.9 259.6L448.3 260.7L452.0 258.1L456.5 259.7L461.5 261.4L463.6 263.5L465.8 264.5L466.2 266.0L467.2 268.1L470.0 270.7L468.6 270.7L465.8 270.3L463.6 267.7L461.5 267.0L460.1 268.1L459.4 269.1L456.5 269.0L454.4 267.4L452.3 267.8L453.3 266.0L452.3 263.8L448.7 262.3L445.9 261.4L444.9 261.7L443.7 260.1L445.9 259.4L444.2 259.1L442.3 258.0ZM467.2 263.8L470.0 263.8L472.5 262.0L472.2 263.1L470.0 264.8L467.9 264.8ZM470.5 259.7L472.9 261.4L473.6 262.7L472.2 261.0ZM417.7 288.1L418.4 290.4L417.4 293.5L418.4 296.7L419.6 300.8L420.6 304.1L419.6 308.0L421.7 309.2L424.5 308.9L426.7 307.3L431.6 307.3L435.2 304.6L439.5 303.4L443.0 303.2L446.6 305.3L448.7 308.9L450.1 307.5L452.0 305.3L451.6 308.3L450.8 309.5L452.6 308.0L453.0 310.2L454.4 310.9L455.8 314.5L458.7 315.4L461.5 314.9L464.1 316.5L466.5 314.1L469.3 313.2L470.0 310.1L471.2 307.1L472.9 304.6L473.9 300.8L474.5 297.8L473.9 294.3L473.3 292.7L471.5 290.9L470.3 288.9L468.6 287.6L467.2 285.3L464.4 283.5L463.6 281.3L462.8 279.1L462.5 277.3L460.5 276.6L460.1 273.9L459.0 271.5L457.5 273.9L457.2 276.8L456.5 279.8L455.8 281.4L453.7 281.3L451.6 279.1L449.4 278.0L449.0 276.6L450.6 273.6L448.7 273.2L445.9 272.8L444.4 272.3L443.0 273.6L441.6 273.9L440.2 277.3L438.5 277.4L436.6 276.0L434.5 276.8L433.1 278.8L431.6 280.8L429.9 280.8L429.8 282.5L428.1 284.4L425.2 285.0L422.4 286.1L420.3 287.0L418.6 288.1ZM461.8 319.5L464.4 320.2L466.9 319.8L466.8 322.3L465.8 324.5L463.6 324.8L462.6 322.5ZM501.6 308.2L503.5 310.1L504.6 312.4L506.0 312.2L506.3 313.8L509.2 313.8L509.6 315.4L507.7 316.9L507.7 318.2L505.3 321.2L504.6 320.6L505.2 318.5L503.5 317.2L504.3 315.4L504.5 313.2L502.5 309.7ZM501.6 319.1L503.8 320.6L502.8 322.9L501.8 325.2L499.6 326.4L498.9 329.4L497.1 331.1L495.4 330.9L492.8 329.8L493.5 327.8L495.4 325.8L497.8 323.9L499.6 321.9L500.6 319.7ZM489.2 285.3L491.4 286.6L493.5 288.5L492.1 288.1L490.0 286.6ZM353.8 336.2L356.3 336.4L355.6 337.7L354.1 337.5ZM34.1 226.7L35.6 227.3L34.6 228.5L34.1 227.6ZM36.3 156.3L39.1 154.2L39.4 155.8L37.3 157.4ZM73.5 171.9L77.5 173.2L80.4 177.1L78.2 176.5L74.7 173.6ZM66.8 164.2L68.7 164.4L69.4 168.4L67.8 166.8Z"/><path fill="#f2efe9" d="M0.0 438.2L10.5 441.7L23.6 443.8L31.4 436.9L32.7 433.6L42.0 430.5L47.2 423.5L56.3 419.6L65.6 418.0L74.7 415.4L75.9 412.4L86.5 414.4L99.6 419.1L102.3 422.3L107.4 421.2L110.1 413.4L111.4 407.6L116.6 405.2L125.7 408.0L133.7 410.4L139.0 414.4L142.8 410.4L146.8 410.4L150.6 405.2L149.3 399.9L153.3 397.4L155.9 392.2L158.6 393.0L159.9 386.9L163.8 381.1L167.7 377.1L174.2 372.6L176.1 373.5L170.4 379.1L169.0 386.9L169.8 397.4L170.8 410.4L169.0 419.6L178.2 427.5L186.0 436.9L194.0 439.6L204.4 440.3L209.6 434.3L217.5 426.3L220.2 416.9L228.0 410.4L235.8 405.2L243.8 399.9L256.0 397.2L274.3 397.0L290.1 397.4L301.8 393.0L311.0 394.6L318.9 386.9L326.7 384.3L331.9 381.8L337.2 384.3L345.0 388.3L355.6 390.2L362.1 395.4L368.6 388.3L376.6 384.0L387.0 384.0L393.5 379.8L402.8 381.1L410.6 384.3L415.9 381.8L423.7 385.0L436.8 384.0L447.3 382.2L457.8 384.3L468.2 389.5L478.7 392.2L489.2 398.7L497.6 403.9L497.1 410.4L490.5 415.9L488.0 426.3L489.2 436.9L493.2 434.9L512.0 438.2L512 512L0 512Z"/><path fill="#aad3df" d="M125.2 47.5L128.7 55.0L130.4 62.3L132.0 68.9L134.3 68.2L133.3 63.0L131.4 55.8L130.4 51.5L133.7 48.9ZM322.8 183.2L325.7 181.1L328.5 180.5L331.4 181.1L331.8 183.6L329.2 184.2L327.8 185.2L329.2 187.2L330.7 189.1L331.0 191.0L332.8 192.0L331.4 193.8L332.1 195.7L332.8 198.4L332.1 199.6L330.0 200.0L327.5 198.8L325.7 197.9L325.7 195.7L326.4 193.3L327.5 193.1L326.0 191.4L324.0 188.5L323.6 186.6L322.6 185.2ZM403.6 170.0L406.0 169.8L409.6 166.8L412.2 160.7L411.3 159.9L408.9 164.4L406.0 167.5ZM361.0 183.0L362.7 180.9L367.6 181.1L368.1 181.5L364.1 181.7L362.0 183.6ZM301.8 256.9L302.9 255.9L304.1 256.3L303.8 258.3L302.2 258.8ZM125.2 180.5L128.7 178.0L130.8 176.3L133.7 176.5L135.7 180.1L135.1 181.1L132.3 181.1L129.4 180.5L127.3 180.9ZM131.1 190.1L133.0 190.6L133.4 187.2L135.1 182.8L134.4 182.2L132.3 183.2L130.8 184.8L131.3 187.2ZM135.5 182.4L137.2 181.7L140.1 182.2L142.2 184.6L140.1 185.2L139.8 187.5L138.7 188.1L137.5 186.2L137.2 183.8ZM137.4 190.6L138.7 191.2L142.2 189.7L143.8 188.5L142.9 188.3L140.1 188.9L138.0 189.9ZM142.5 187.5L145.1 187.5L147.6 187.0L147.5 185.8L145.8 186.4L143.2 186.8ZM115.2 164.9L116.6 164.6L119.0 172.5L118.0 172.8L116.6 169.1ZM78.2 129.1L83.9 126.2L88.2 128.0L86.8 132.2L83.2 133.2L81.1 130.9ZM89.6 145.8L92.4 141.6L98.1 140.4L100.3 140.7L97.4 142.8L93.9 145.8L91.0 146.4ZM299.0 148.7L300.5 144.3L302.9 145.8L302.5 148.1L300.8 149.0ZM305.1 145.8L306.5 140.7L307.9 142.2L307.2 145.8L305.8 146.1Z"/><path fill="none" stroke="#d3b7d1" stroke-width=".58" stroke-linejoin="round" d="M55.5 116.2L55.5 147.8L58.3 148.7L60.4 151.5L63.3 149.5L66.1 152.9L68.6 157.6L71.1 159.4L70.8 161.9M81.1 175.8L120.6 175.8L121.2 175.2L125.2 177.1L128.7 178.0L130.1 177.3L135.4 180.5L135.8 181.1L137.2 182.2L138.7 183.6L138.8 188.1L138.0 189.7L138.7 190.6L143.6 188.5L143.6 187.4L146.8 187.0L149.3 184.2L154.3 184.2L155.3 183.6L156.4 181.1L157.6 179.2L159.3 179.5L159.6 182.6L160.7 184.2M89.5 207.1L92.7 206.9L98.1 209.1L102.1 209.1L102.1 208.3L104.5 208.3L107.4 211.7L109.5 212.9L110.2 211.6L112.4 212.1L114.5 215.3L116.2 217.5L117.8 217.8M124.9 235.2L124.9 234.0L125.6 232.8L127.4 232.8L126.6 231.2L126.6 230.3L129.1 230.3L130.4 229.2M129.1 230.3L129.1 233.1L129.6 233.1M130.6 233.4L129.1 234.6L128.9 235.3L127.9 236.2M128.9 235.3L130.1 236.0L131.1 236.8M131.8 237.4L132.7 236.2L134.0 235.9L135.4 234.7L137.7 234.4M134.1 240.1L135.5 240.3L137.0 240.4M138.1 244.4L138.1 243.0L138.5 242.3M145.9 243.6L146.2 244.7L145.2 245.7M154.0 227.4L154.0 229.1L153.9 230.0M154.6 239.1L152.9 240.3L152.2 242.4L153.0 244.0L153.6 245.7L155.7 246.0L157.2 247.3L160.0 247.2L159.6 249.6L160.3 251.0L159.6 252.0L160.7 254.3M160.7 254.3L159.3 253.4L156.7 253.6L157.6 255.1L156.4 256.0L157.2 257.4L156.6 262.0M156.6 262.0L155.7 261.4L152.9 259.4L151.5 258.1L148.9 256.1M148.9 256.1L147.2 255.6L145.8 255.0L143.9 254.0M148.9 256.1L148.6 258.1L146.8 259.7L144.6 260.8L144.1 262.5L142.9 263.1L141.7 262.3L141.8 260.8M156.6 262.0L152.5 263.3L151.0 265.7L152.2 269.1L153.3 270.3L155.6 269.6L155.6 271.7L157.0 271.6M157.0 271.6L158.3 273.9L157.9 276.8L157.4 278.3L157.9 279.8L157.2 281.3M157.2 281.3L155.9 282.5M157.2 281.3L158.6 283.5L158.6 285.8L159.4 289.3L160.4 289.3M157.0 271.6L159.3 271.3L163.0 269.9L163.1 272.5L164.3 273.8L166.7 274.6L169.2 275.4L170.4 277.6L170.4 279.4L172.9 279.5L173.2 281.3L174.2 282.0L173.5 284.7L173.2 285.3M173.2 285.3L171.9 284.0L168.2 284.4L167.0 288.4M167.0 288.4L164.6 289.3L163.3 288.2L161.8 287.8L160.4 289.3M160.4 289.3L158.9 292.0L158.6 295.1L156.9 298.3L156.4 301.6L156.2 305.8L156.4 308.3L155.7 311.3L154.7 315.4L154.0 319.1L153.9 323.9L154.2 328.8L152.9 334.0L151.8 338.4L153.2 341.7L153.7 342.9L157.2 343.3L158.7 343.8M158.4 344.5L158.4 349.8M167.0 288.4L169.2 290.9L172.4 292.4L174.1 293.5L172.8 296.2L175.9 296.5L178.3 293.7M173.2 285.3L173.8 288.2L176.6 288.5L177.1 291.2L178.8 291.2L178.3 293.7M178.3 293.7L179.5 295.1L179.5 296.2L176.6 298.0L174.1 301.1M174.1 301.1L176.4 302.1L178.5 303.2L180.1 305.3L180.1 307.0M174.1 301.1L173.2 304.9L172.9 307.5M170.7 243.9L169.2 246.0L168.8 247.5L169.7 248.6M169.7 248.6L166.7 250.3L164.7 250.2L165.0 252.4L162.8 254.9L160.7 254.3M169.7 248.6L170.7 248.9L170.8 249.6L171.2 250.4L170.8 252.7L172.1 254.2L173.5 253.9L174.9 253.2L175.6 253.3M174.6 247.5L174.5 248.6L173.5 250.3L174.2 251.3L175.6 253.3M175.6 253.3L176.5 252.4L178.3 252.7M179.2 247.7L178.6 249.6L178.3 252.7M178.3 252.7L180.6 252.9L181.3 252.3L182.5 250.2M252.9 202.6L253.6 205.4L254.3 207.4L251.7 208.3L250.7 209.8L248.5 211.2L246.0 212.1L243.6 213.4L243.6 215.6M243.6 215.0L237.2 215.0M243.6 215.6L243.6 217.7L238.9 217.7L238.9 221.6L237.5 222.4L237.5 225.0L231.8 225.0M243.6 215.6L249.2 219.3L257.7 225.3L257.7 225.9L260.6 227.3L262.0 228.3L273.1 221.6M268.2 199.5L267.8 202.8L266.7 204.7L268.8 207.8L269.5 210.9M269.5 210.9L270.6 208.3L272.4 207.1L272.4 205.9M269.5 210.9L270.1 213.7L269.9 216.9L270.2 219.6L273.1 221.6M273.1 221.6L276.2 223.0L277.3 222.4L290.1 227.7M291.6 208.4L291.6 223.9M290.1 227.7L290.1 227.0L291.6 227.0L291.6 223.9L308.5 223.9M290.1 227.7L290.1 233.4L288.6 233.4L288.0 235.9L287.3 237.9L288.6 240.3M277.3 222.4L278.6 226.4L278.0 231.6L275.3 236.3M275.3 236.3L273.1 237.1L269.5 237.6L266.0 237.4L262.0 236.6L261.1 239.2M262.0 228.3L262.0 231.8L261.0 233.8L257.4 234.4L256.3 234.4M256.3 234.4L257.4 236.8L259.1 238.2L261.1 239.2M256.3 234.4L253.2 235.6L250.3 236.9L248.2 241.0M249.2 219.3L246.8 219.3L248.0 232.2L248.5 233.7L242.5 233.8L239.6 233.5L238.6 234.7M238.6 234.7L236.8 232.6L235.4 232.1L232.5 232.9M238.6 234.7L239.8 238.2M239.8 238.2L243.2 238.5L244.3 241.0L244.6 241.4L247.5 241.3L248.2 241.0M239.8 238.2L236.5 237.9L234.4 237.9L232.2 238.2M236.5 237.9L236.5 239.2L234.7 240.3M237.1 243.1L238.4 241.8L240.4 241.7L240.9 243.0L241.4 243.9L239.6 246.2M241.4 243.9L242.6 245.2L243.9 245.2L244.2 246.9L245.5 248.2L245.3 249.7M243.9 245.2L244.6 243.9L244.6 241.4M252.0 248.7L251.4 246.7L252.2 242.4L252.0 240.3M248.2 241.0L252.2 241.8M252.0 240.3L256.0 240.1L256.7 243.1L256.9 245.3L257.7 247.3M257.3 240.3L258.3 243.1L258.3 247.2M261.1 239.2L261.3 241.4L259.8 244.6L259.8 246.9M257.3 240.3L259.1 238.2M276.2 238.1L275.2 240.5L273.1 243.9L272.4 246.3L270.2 246.2L268.2 249.2M275.3 236.3L276.6 237.6L277.5 240.3L278.0 241.7L276.2 241.8L278.0 245.3M278.0 245.3L276.6 247.5L277.3 250.3L279.0 252.9M269.9 252.7L272.1 252.9L274.8 252.9L279.0 252.9L279.0 253.6M269.9 254.6L272.1 254.6L272.1 252.9M274.9 252.9L274.8 254.2L276.5 254.2L276.6 256.7L275.8 259.4L273.8 259.3L272.8 261.3L271.8 261.6M278.0 245.3L280.2 245.0L282.5 244.4L283.0 243.1L285.0 243.0L286.9 240.8L288.6 240.3M288.6 240.3L289.7 243.6L291.8 244.9L293.7 247.5L295.0 248.7M279.0 252.9L279.6 251.0L282.5 251.0M282.5 251.0L282.5 249.9L283.7 248.7L287.9 250.2L290.8 248.9L295.0 248.7M282.5 251.0L281.7 253.2L281.3 256.4L279.5 258.6L278.8 260.3L277.6 262.1L276.5 263.0L275.1 262.8L274.5 262.5L273.8 263.1L273.4 264.1M289.7 243.6L291.6 241.3L295.8 242.4L298.0 241.7L300.1 242.0L302.2 238.8L303.2 238.5L302.9 241.4L304.5 242.4M304.5 242.4L304.8 240.8L305.8 239.1L307.3 237.8L307.9 235.4L308.6 231.5L310.9 230.0M307.9 235.4L310.0 234.9L312.9 235.2L315.0 236.6L316.3 238.1M316.3 238.1L315.4 240.3L317.0 240.4L317.4 239.5M317.0 240.4L317.9 242.4L318.6 243.1L322.8 244.6L324.3 244.6L320.0 248.9L317.9 249.2L315.7 250.2L314.3 250.4M314.3 250.4L312.2 251.0L310.0 250.9L307.9 249.7L307.1 249.5M315.6 250.4L314.3 251.9L314.3 257.3L315.2 258.4M304.5 242.4L304.6 243.9L302.9 244.9L305.1 246.4L307.1 249.5M307.1 249.5L304.4 250.0L302.9 250.6L300.1 250.7L299.8 251.0M299.8 251.0L298.0 249.6L295.0 248.7M304.4 250.0L305.1 251.7L305.8 253.6L304.5 255.4L304.2 257.4M304.2 257.4L309.5 260.3L309.6 261.0L311.8 262.7M299.8 251.0L300.1 252.9L298.7 254.6L298.2 256.7L298.1 258.0M298.1 258.0L299.4 257.4L304.2 257.4M298.1 258.0L297.2 259.8L297.5 262.3L298.1 265.3L299.8 267.7M299.4 257.4L299.8 259.4L298.7 262.1L297.8 262.3M297.2 259.8L298.5 259.6L299.8 259.4M299.8 267.7L302.8 269.4L304.4 269.6L305.2 272.6L307.9 272.8L310.8 272.2L313.5 271.0M299.8 267.7L296.5 268.9L296.8 273.2L298.4 275.2L295.8 273.8L293.0 273.0L290.7 272.2L290.1 271.6M273.4 264.4L274.8 264.4L279.6 264.4L280.2 266.7L283.6 267.3L284.4 266.0L287.0 266.4L287.3 269.6L287.3 271.7L290.1 271.6M290.1 271.6L290.1 274.6L287.3 274.6L287.3 279.4L289.3 281.4M272.8 281.0L275.9 281.1L282.2 281.1L286.4 282.0L289.3 281.4L292.0 281.7M285.9 282.5L285.9 288.1L284.4 288.1L284.4 292.4L284.4 298.2L283.7 298.6L281.6 299.0L280.2 297.7L279.5 298.5M284.4 292.4L285.4 295.6L287.3 295.3L288.7 293.2L292.3 293.8L294.3 290.7L297.8 288.4M297.8 288.4L295.4 285.8L293.3 284.1L292.0 281.7L294.4 281.9L297.1 279.1L299.2 278.5M299.2 278.5L302.6 280.1L302.9 282.0L302.8 284.3L302.2 287.0L300.5 288.7M297.8 288.4L300.5 288.7L301.5 292.0L301.5 294.3L302.8 295.6M294.4 300.1L296.5 298.5L297.8 299.9L296.5 301.7L295.0 301.3L294.4 300.1M300.1 294.3L301.5 294.3L301.7 295.6L300.5 296.4L299.8 295.4L300.1 294.3M302.8 269.4L303.4 271.5L303.2 273.9L302.5 275.5L303.2 276.1L299.0 277.3L299.2 278.5M303.2 276.1L305.1 276.8L307.1 279.1L306.2 280.7L304.8 279.1L305.2 272.6M243.5 190.3L244.3 190.1L246.6 190.3L247.2 191.0L246.2 193.5L246.0 194.6L245.3 194.8L246.0 197.1L245.5 198.9M253.4 187.4L257.0 188.5L260.6 189.3M266.7 186.6L266.0 185.8L266.0 182.4L265.7 182.2L264.7 181.7L266.0 179.2L266.8 178.8L267.7 175.8L265.1 174.7L262.8 173.6L262.0 173.0L259.7 171.2M260.8 170.5L263.1 170.5L264.5 171.9L264.5 169.6L266.0 168.2L266.2 166.3M264.5 171.9L264.8 173.4L265.1 174.7M268.2 162.2L270.1 162.4M276.2 164.6L276.5 167.3L276.9 169.1L277.3 171.4L277.0 171.6L273.4 173.0L275.6 176.3L274.5 177.3L274.5 179.0L270.9 179.0L269.7 179.0L266.8 178.8M266.0 182.4L268.1 181.7L268.8 182.6L270.8 181.1L273.4 180.1L275.5 181.1L278.9 180.3M269.7 179.0L269.7 180.1L270.8 181.1M275.6 176.3L277.3 175.8L280.0 176.7L280.3 178.0L278.9 180.3M275.5 181.1L275.3 183.0M277.0 171.6L279.5 173.2L282.7 174.7L284.4 175.4L288.1 175.6L290.1 172.3L289.6 170.3L289.6 167.7L290.0 164.6L289.4 163.9L288.4 163.4L284.2 163.4M288.4 163.4L288.4 162.2L286.3 161.2M282.7 174.7L280.0 176.7M280.3 178.0L282.7 178.4L285.2 176.9L287.4 177.1L288.1 175.6M287.4 177.1L288.6 178.0L286.2 181.7L284.9 181.9L282.9 182.4L280.2 182.2L278.9 180.3M288.6 178.0L291.4 178.6L293.8 177.3L296.1 180.9L296.1 183.2L298.2 183.8M293.8 177.3L297.2 178.0L298.7 181.3L296.1 183.2M288.3 185.8L291.6 186.8L294.4 186.0L296.7 186.8M284.9 181.9L286.4 184.6L288.3 185.8L287.9 188.1L287.9 189.5L288.7 191.4L291.6 191.4L293.4 190.6L295.8 190.1M293.4 190.6L293.1 192.5M284.4 194.4L285.7 192.2L288.7 191.4M283.6 190.3L285.3 190.1L285.3 192.0L285.7 192.2M275.3 183.2L278.3 182.6L279.5 181.1M278.5 183.8L280.2 183.8L283.0 184.4L283.7 186.6L283.0 187.5L282.3 189.1M278.5 183.8L279.0 185.8L281.0 188.1L282.3 189.1M283.0 184.4L283.2 182.4M283.0 187.5L284.9 188.5L285.3 190.1L286.7 189.5L287.9 189.5M284.9 188.5L286.2 187.7L286.7 189.5M289.6 170.3L294.4 170.3L299.4 170.5L301.2 168.9L304.4 170.3L306.5 172.8L310.0 173.9L312.9 174.5L312.5 178.2L310.3 179.9M301.2 168.9L300.5 166.3L302.2 165.1L299.9 161.9L299.4 159.9L296.1 159.2M289.4 164.4L292.6 163.9L293.8 160.7L296.1 159.2L295.4 155.8L295.0 155.3L295.1 152.0L295.8 150.4M295.0 155.3L292.3 154.2L290.6 154.5M285.9 159.2L288.7 158.7L291.6 158.7L293.8 160.2M295.5 147.3L298.0 144.3L300.8 140.0L298.7 136.5L298.7 130.9L297.2 126.6L298.7 123.7L296.5 121.8L297.1 118.6L299.8 115.4M297.1 118.6L297.7 116.6L295.8 114.6L293.0 115.8L291.6 120.2L287.9 119.8L285.3 118.2M285.3 118.2L289.7 122.9L289.4 126.2L290.4 130.5M285.3 118.2L281.6 120.6L279.2 124.4L276.6 129.5L275.5 134.6L273.4 138.2L273.2 143.7L274.2 144.9L273.4 148.7L272.8 150.7L272.2 151.8M245.6 161.9L244.6 163.2L247.0 164.2M315.0 191.0L317.9 191.8L318.2 193.6L319.7 194.4L319.1 196.8L319.7 198.9M319.7 198.9L316.3 199.1L312.9 199.6L310.0 199.6L308.2 199.8L307.5 201.2M312.9 187.4L316.4 187.7L319.3 188.7L322.0 190.3L324.0 191.6L325.1 190.4M317.9 191.8L320.0 191.4L322.0 190.3M320.0 191.4L320.7 192.7L321.4 194.6L322.1 195.9M319.7 194.4L322.1 195.9L324.3 194.8L325.5 196.8M316.3 199.1L314.6 203.1L314.3 203.8L311.2 205.6L308.3 207.4L306.8 206.7M306.8 206.7L307.1 205.6L308.1 204.2L307.2 203.5M311.2 205.6L311.8 207.6L308.6 208.8L310.0 210.4L309.3 211.2L307.3 212.5L305.8 212.2M304.8 209.1L305.6 212.1M305.8 212.1L306.5 208.8L306.6 206.7M311.8 207.6L313.5 208.1L315.7 209.4L319.6 212.5L322.1 212.7L323.8 213.7L324.8 213.7M322.1 212.7L323.4 211.1L324.3 211.2M319.7 198.9L320.6 201.1L321.6 202.6L320.7 204.5L321.6 206.2L324.0 208.3L323.8 209.6L325.1 211.4M316.9 232.4L317.4 230.9L318.9 230.9L322.4 231.0L323.6 231.3L325.7 229.1L330.0 228.5L334.2 227.0L335.2 223.9L334.5 222.8L330.8 222.5L329.4 220.7M334.5 222.8L335.4 220.8L335.8 219.7L336.2 219.4M330.0 228.5L331.5 232.1M333.9 198.6L335.9 197.3L337.5 197.1L339.2 198.0L340.3 198.4L341.9 200.0L343.0 200.0L343.0 201.8M343.0 201.8L342.2 204.0L342.6 205.4L342.2 206.2L342.6 208.8L343.9 208.9L343.9 209.9L342.6 211.6M342.6 211.6L343.9 213.5L345.3 214.2L345.3 215.8L345.9 216.7L343.6 218.9M342.6 211.6L344.9 212.2L347.2 212.2L350.3 211.4L350.4 209.6L351.7 209.3L353.0 208.3L354.6 208.1L354.8 206.2L356.0 205.6L355.4 204.5L357.1 204.4L357.8 202.1L357.4 201.1L359.1 199.6L362.5 198.9M343.0 201.8L344.6 202.3L345.7 201.4L347.7 200.5L349.3 198.8L350.6 198.6L352.4 198.9L352.7 199.3L354.6 199.1L355.8 198.2L356.1 197.3L357.4 197.5L357.8 199.8L360.2 198.4L362.5 198.9M353.0 221.3L355.6 220.5L357.0 220.2L356.1 218.2L355.6 216.1L356.6 214.8L358.7 214.5L359.8 212.9L361.1 211.2L362.2 209.6L362.0 206.6L361.2 205.9L361.2 203.3L364.1 202.8L366.6 201.9M362.5 198.9L364.1 201.1L366.6 201.9M366.6 201.9L368.4 203.8L368.1 206.2L368.8 206.9L367.9 209.1L369.5 209.8L371.2 210.9L372.8 211.1L375.6 213.0L378.3 214.5L381.3 214.7M371.2 210.9L369.9 213.2L372.6 214.7L374.5 215.5L376.9 216.7L379.7 216.9L381.3 217.0L381.3 214.7L382.4 215.6L383.7 214.2L386.3 214.8L389.0 213.4L391.1 212.5L393.2 213.8L394.4 214.2M382.4 215.6L383.9 216.6L387.0 216.3L386.3 214.8M394.4 214.2L392.5 215.8L391.4 216.9L390.5 219.3L389.8 221.0L388.7 221.0L388.7 223.6L387.7 225.0L387.3 225.9M381.3 217.0L382.3 217.2L383.7 217.8L383.7 218.8L387.4 219.3L387.1 220.5L385.7 221.3L386.3 222.4L387.3 221.3L387.7 225.0M381.4 218.0L381.3 220.0L382.2 220.7L382.4 222.5L382.7 224.2M394.4 214.2L396.4 215.3L396.4 217.8L394.8 219.6L395.1 221.0L396.8 222.2L397.4 223.8L398.4 224.7L399.9 224.8M399.9 224.8L400.8 223.3L401.8 222.8L403.8 223.0L405.8 221.9L407.8 222.7L407.6 223.9L409.6 224.7M398.4 224.7L398.4 226.5L396.7 227.4L395.1 229.2L395.1 230.7L396.2 232.5L395.7 234.1L397.1 236.6L397.1 239.1L396.4 241.3M398.4 226.5L398.9 227.7L399.9 227.7L399.9 230.7L401.4 230.0L403.9 229.5L405.0 230.9L405.0 232.4L406.2 233.7L406.0 235.3M406.0 235.3L402.5 235.4L401.8 236.6L402.2 238.8L402.3 239.2M408.9 234.9L408.9 238.1L406.8 239.2L406.6 240.3L404.6 241.1M401.4 223.3L402.8 225.7L404.8 226.0L403.9 227.7L405.6 229.1L407.6 231.8L408.9 234.4L408.9 234.9L406.0 235.3M398.4 246.9L399.8 247.9L401.2 247.2M411.9 253.2L412.9 254.7L415.1 254.6L416.7 253.9L419.0 253.9L420.7 249.9L423.1 250.0M456.5 259.7L456.5 269.0M432.5 269.4L433.8 269.1L434.1 269.7M325.7 181.5L324.0 178.4L322.1 177.1L322.8 173.9L325.0 174.1L325.3 172.3L328.2 169.8L332.1 170.3L333.5 171.6L337.1 171.4L339.3 171.4L341.2 172.3L343.5 171.9L341.3 169.4L342.8 168.4L342.8 164.9L348.4 163.4L353.0 161.9L354.1 160.9L356.7 161.2L357.3 164.2L360.5 164.4L361.0 165.6L364.8 163.9L366.8 166.1L369.8 171.9L374.0 171.4L377.3 174.5L380.2 175.4M380.2 175.4L378.0 177.1L377.6 179.9L374.0 179.7L373.0 183.2L369.8 184.2L370.9 187.7L370.1 189.7M370.1 189.7L368.4 188.5L363.7 188.1L361.2 187.7L360.5 189.3L357.0 188.9L356.8 189.7L354.1 191.4L352.7 192.0L350.6 191.6L349.9 188.1L348.3 186.8L344.0 187.2L342.8 185.4L339.3 183.0L335.6 184.2L335.6 191.4L333.5 190.1L330.5 190.4M335.6 191.4L337.1 191.4L339.2 188.7L341.3 189.7L341.5 191.2L344.0 191.8L345.6 194.4L347.7 195.9L350.6 198.6M352.4 198.9L353.1 197.1L352.3 194.6L356.1 193.1L356.8 189.7M356.1 193.1L358.0 194.9L360.8 194.8M380.9 175.4L383.6 174.1L386.8 172.1L390.4 173.6L395.1 174.1L395.8 172.5L395.4 169.1L398.1 169.6L401.4 170.7L401.5 172.3L403.5 173.2L406.8 172.8L408.9 174.1L412.4 175.4L417.4 173.4L422.0 174.1M380.9 175.4L382.3 177.8L385.3 180.9L385.3 183.8L389.0 184.4L391.7 185.6L393.1 188.7L398.2 188.9L400.4 189.1L405.3 190.8L411.7 189.3L415.0 186.8L415.1 184.0L417.7 184.6L421.8 181.5L426.4 180.7L423.1 178.6L420.3 178.6L422.0 174.1M422.0 174.1L426.4 173.0L425.5 171.4L427.8 167.7L427.1 166.1L431.8 165.6L434.8 166.8L437.5 173.2L441.6 176.0L442.3 178.6L447.6 177.3L445.3 184.0L442.6 184.2L442.6 187.2L441.7 189.3M441.7 189.3L440.6 188.1L438.0 190.1L436.5 190.4L432.9 193.8M435.3 198.0L436.9 197.0L438.6 196.4M370.1 189.7L367.5 191.2L365.4 192.0L362.5 192.9L360.8 194.8L361.0 196.4L362.5 196.8L362.5 198.9"/></g>
</svg>
  <div id="zoomc"><div style="top:0;border-bottom:1px solid #ccc;border-radius:2px 2px 0 0">+</div><div style="top:31px;border-radius:0 0 2px 2px">&#8722;</div></div>
  <svg class="abs" style="left:533px;top:157.700px;overflow:visible" width="41" height="41" viewBox="0 0 41 41"><defs><filter id="blur" x="-30%" y="-30%" width="160%" height="160%"><feGaussianBlur stdDeviation="2.100"/></filter><linearGradient id="mg" x1="0" y1="0" x2="0" y2="1"><stop offset="0" stop-color="#4b97d3"/><stop offset=".55" stop-color="#2f82ca"/><stop offset="1" stop-color="#1d72c2"/></linearGradient></defs><path d="M12.500 40L18 29q5-8 11-11 5-2 6 1-1 5-8 10z" fill="#000" opacity=".33" filter="url(#blur)"/><path d="M12.500 .600C5.900 .600 .600 5.900 .600 12.500c0 2.500 .800 4.700 2.100 6.800L12.500 40.300 22.300 19.300c1.300-2.100 2.100-4.300 2.100-6.800C24.400 5.900 19.100 .600 12.500 .600z" fill="url(#mg)" stroke="#2a6aa8" stroke-width="1"/><circle cx="12.500" cy="13.400" r="4.300" fill="#fff"/></svg>
  <div id="popup">Москва</div>
  <div id="ptipc"><div id="ptip"></div></div>
  <div id="pclose">×</div>
  <div id="attr"><a>Leaflet</a> | Data by © <a>OpenStreetMap</a>, under <a>ODbL</a>.</div>
</div>
<div class="abs" style="left:39px;top:930px;width:1110px;height:42px;border:1px solid #ababab;border-left:5px solid #42a5f5;border-radius:2px;background:#fff"></div>
<div class="prompt pin" style="left:32px;top:942.700px">In [ ]:</div>
<div class="inp" style="top:936px;height:30px"></div>
<div id="scroll"><div id="thumb"></div>
<svg class="abs" style="left:4px;top:6px" width="9" height="6" viewBox="0 0 9 6"><path d="M0 5.5L4.5 1 9 5.5z" fill="#505050"/></svg>
<svg class="abs" style="left:4px;top:774px" width="9" height="6" viewBox="0 0 9 6"><path d="M0 .5L4.5 5 9 .5z" fill="#505050"/></svg>
</div>
<div id="win"></div>

</body></html>
